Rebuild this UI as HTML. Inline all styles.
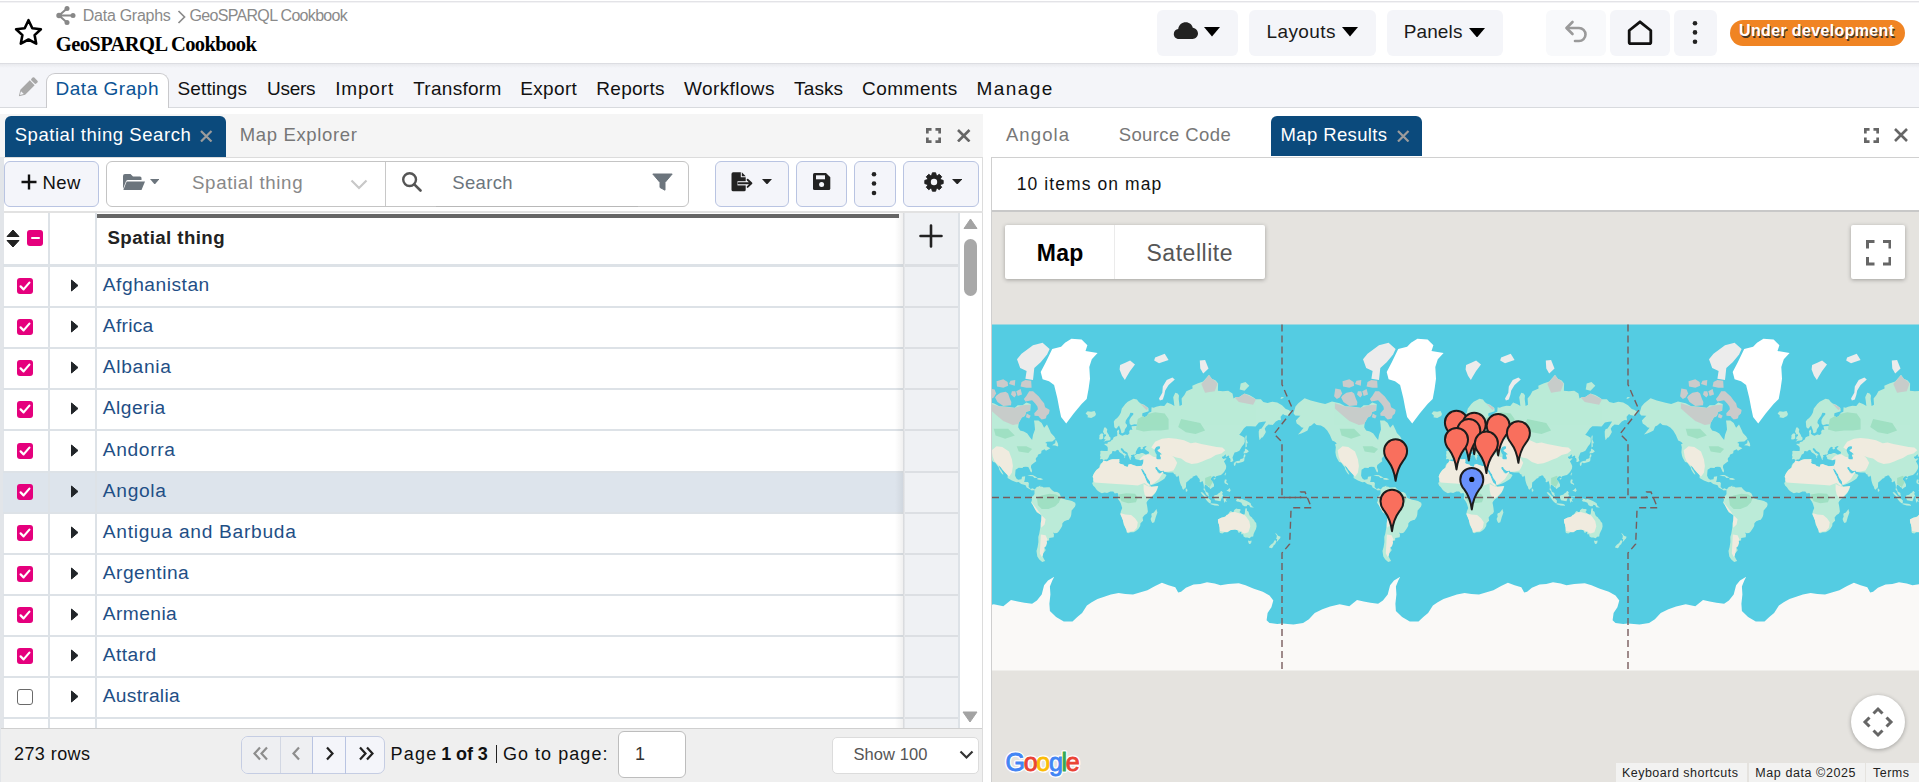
<!DOCTYPE html>
<html><head><meta charset="utf-8"><style>
html,body{margin:0;padding:0;width:1919px;height:782px;overflow:hidden;background:#fff}
.b{position:absolute;display:block}
.t{position:absolute;white-space:pre;line-height:normal}
</style></head><body>
<div class='b' style='left:0px;top:1px;width:1919px;height:1px;background:#e3e3e7'></div>
<div class='b' style='left:0px;top:2px;width:1919px;height:1px;background:#f3f3f5'></div>
<svg class='b' style='left:13px;top:17px;' width='31' height='31' viewBox='0 0 31 31'><path d='M15.5 3.2 L19.3 11.2 L27.9 12.2 L21.6 18.1 L23.2 26.7 L15.5 22.5 L7.8 26.7 L9.4 18.1 L3.1 12.2 L11.7 11.2 Z' fill='none' stroke='#000' stroke-width='2.6' stroke-linejoin='round'/></svg>
<svg class='b' style='left:55px;top:5px;' width='22' height='21' viewBox='0 0 22 21'><g stroke='#888' stroke-width='2' fill='none'><path d='M4 10.5 L12 3.5 M4 10.5 L18 10.5 M4 10.5 L12 17.5'/></g><g fill='#888'><circle cx='4' cy='10.5' r='2.7'/><circle cx='12' cy='3.5' r='2.5'/><circle cx='18' cy='10.5' r='2.5'/><circle cx='12' cy='17.5' r='2.5'/></g></svg>
<svg class='b' style='left:175px;top:9px;' width='13' height='16' viewBox='0 0 13 16'><path d='M3.5 2 L9.5 8 L3.5 14' fill='none' stroke='#8a8a8a' stroke-width='1.7'/></svg>
<div class='b' style='left:1157px;top:10px;width:81px;height:46px;background:#f4f5f9;border-radius:6px'></div>
<div class='b' style='left:1249px;top:10px;width:127px;height:46px;background:#f4f5f9;border-radius:6px'></div>
<div class='b' style='left:1387px;top:10px;width:116px;height:46px;background:#f4f5f9;border-radius:6px'></div>
<div class='b' style='left:1546px;top:10px;width:60px;height:46px;background:#f8f9fb;border-radius:6px'></div>
<div class='b' style='left:1610px;top:10px;width:60px;height:46px;background:#f4f5f9;border-radius:6px'></div>
<div class='b' style='left:1674px;top:10px;width:43px;height:46px;background:#f4f5f9;border-radius:6px'></div>
<svg class='b' style='left:1173px;top:21px;' width='26' height='19' viewBox='0 0 26 19'><path d='M6 18 C2.5 18 0.8 15.5 0.8 13 C0.8 10.3 2.8 8.3 5.2 8.1 C5.8 4 9 1.3 12.8 1.3 C16.2 1.3 19 3.6 19.8 6.8 C22.8 7.2 25 9.6 25 12.6 C25 15.6 22.6 18 19.6 18 Z' fill='#222'/></svg>
<svg class='b' style='left:1204px;top:27.4px;' width='16' height='9.5' viewBox='0 0 16 9.5'><path d='M0 0 L16 0 L8.0 9.5 Z' fill='#000'/></svg>
<svg class='b' style='left:1342px;top:27.4px;' width='16' height='9.5' viewBox='0 0 16 9.5'><path d='M0 0 L16 0 L8.0 9.5 Z' fill='#000'/></svg>
<svg class='b' style='left:1469px;top:27.6px;' width='16' height='9.5' viewBox='0 0 16 9.5'><path d='M0 0 L16 0 L8.0 9.5 Z' fill='#000'/></svg>
<svg class='b' style='left:1563px;top:19px;' width='25' height='26' viewBox='0 0 25 26'><path d='M4 9 L16 9 A6.5 6.5 0 0 1 16 22 L12 22' fill='none' stroke='#9a9a9a' stroke-width='2.6' stroke-linecap='round'/><path d='M9.5 3 L3.5 9 L9.5 15' fill='none' stroke='#9a9a9a' stroke-width='2.6' stroke-linecap='round' stroke-linejoin='round'/></svg>
<svg class='b' style='left:1626px;top:19px;' width='28' height='27' viewBox='0 0 28 27'><path d='M3.2 11.5 L14 2.8 L24.8 11.5 L24.8 23.2 Q24.8 24.6 23.4 24.6 L4.6 24.6 Q3.2 24.6 3.2 23.2 Z' fill='none' stroke='#111' stroke-width='2.8' stroke-linejoin='round'/></svg>
<svg class='b' style='left:1690px;top:18px;' width='10' height='30' viewBox='0 0 10 30'><g fill='#222'><circle cx='5' cy='5.2' r='2.3'/><circle cx='5' cy='14.4' r='2.3'/><circle cx='5' cy='23.8' r='2.3'/></g></svg>
<div class='b' style='left:1730px;top:20px;width:175px;height:26px;background:#f08423;border-radius:13px'></div>
<div class='b' style='left:0px;top:63px;width:1919px;height:45px;background:#f4f5f9'></div>
<div class='b' style='left:0px;top:63px;width:1919px;height:1px;background:#dcdde2'></div>
<div class='b' style='left:0px;top:64px;width:1919px;height:4px;background:linear-gradient(#e9eaee,#f4f5f9)'></div>
<div class='b' style='left:0px;top:107px;width:1919px;height:1px;background:#d8dade'></div>
<div class='b' style='left:46px;top:73px;width:123px;height:35px;background:#fff;border:1px solid #c9c9cc;border-bottom:none;border-radius:9px 9px 0 0;box-sizing:border-box'></div>
<svg class='b' style='left:16px;top:77px;' width='22' height='22' viewBox='0 0 22 22'><g transform='rotate(45 11 11)'><rect x='7.6' y='-1.5' width='6.8' height='4' rx='1.2' fill='#a8a8a8'/><path d='M7.6 3.6 L14.4 3.6 L14.4 17 L11 22.5 L7.6 17 Z' fill='#a8a8a8'/><path d='M9 17.5 L13 17.5 L11 21' fill='#f4f5f9'/></g></svg>
<div class='b' style='left:0px;top:114px;width:983px;height:43px;background:#f5f5f5'></div>
<div class='b' style='left:5px;top:116px;width:221px;height:41px;background:#0b4a7c;border-radius:6px 6px 0 0'></div>
<svg class='b' style='left:200px;top:129.5px;' width='12.5' height='12.5' viewBox='0 0 12.5 12.5'><path d='M1 1 L11.5 11.5 M11.5 1 L1 11.5' stroke='#9c9c9c' stroke-width='2.2' fill='none'/></svg>
<svg class='b' style='left:926.35px;top:127.85px;' width='15.0' height='15.0' viewBox='0 0 15.0 15.0'><path d='M0 4.2 L0 0 L4.2 0 M8.100000000000001 0 L12.3 0 L12.3 4.2 M12.3 8.100000000000001 L12.3 12.3 L8.100000000000001 12.3 M4.2 12.3 L0 12.3 L0 8.100000000000001' transform='translate(1.35 1.35)' stroke='#666' stroke-width='2.7' fill='none'/></svg>
<svg class='b' style='left:957px;top:128.5px;' width='13.5' height='13.5' viewBox='0 0 13.5 13.5'><path d='M1 1 L12.5 12.5 M12.5 1 L1 12.5' stroke='#666' stroke-width='2.6' fill='none'/></svg>
<div class='b' style='left:0px;top:157px;width:983px;height:625px;background:#fff'></div>
<div class='b' style='left:0px;top:156.5px;width:983px;height:1.0px;background:#dcdcdc'></div>
<div class='b' style='left:0px;top:157px;width:1px;height:625px;background:#e0e0e0'></div>
<div class='b' style='left:982px;top:157px;width:1px;height:625px;background:#dcdcdc'></div>
<div class='b' style='left:4px;top:161px;width:95px;height:46px;background:#f4f5fa;border:1px solid #b9c4e2;border-radius:6px;box-sizing:border-box'></div>
<svg class='b' style='left:20px;top:173px;' width='18' height='18' viewBox='0 0 18 18'><path d='M9 1.5 V16.5 M1.5 9 H16.5' stroke='#111' stroke-width='2.4'/></svg>
<div class='b' style='left:106px;top:161px;width:583px;height:46px;background:#fff;border:1px solid #c4c4c4;border-radius:6px;box-sizing:border-box'></div>
<div class='b' style='left:385px;top:162px;width:1px;height:44px;background:#c8c8c8'></div>
<div class='b' style='left:436px;top:205.5px;width:202px;height:1.5px;background:#b8b8b8'></div>
<svg class='b' style='left:122px;top:172px;' width='24' height='20' viewBox='0 0 24 20'><path d='M1 4 Q1 2 3 2 L8.5 2 L11 4.5 L18 4.5 Q19.5 4.5 19.5 6 L19.5 8 L6 8 Q4.6 8 4 9.3 L1 17 Z' fill='#6c757d'/><path d='M4.6 9.5 L23 9.5 L19.5 18 L1.4 18 Z' fill='#6c757d'/></svg>
<svg class='b' style='left:149.5px;top:178.5px;' width='9.5' height='5.5' viewBox='0 0 9.5 5.5'><path d='M0 0 L9.5 0 L4.75 5.5 Z' fill='#6c757d'/></svg>
<svg class='b' style='left:350px;top:179px;' width='18' height='11' viewBox='0 0 18 11'><path d='M1.5 1.5 L9 9 L16.5 1.5' fill='none' stroke='#c8c8c8' stroke-width='2.2'/></svg>
<svg class='b' style='left:401px;top:171px;' width='22' height='21' viewBox='0 0 22 21'><circle cx='8.6' cy='8.6' r='6.4' fill='none' stroke='#555' stroke-width='2.4'/><path d='M13.3 13.3 L19.5 19.5' stroke='#555' stroke-width='2.6' stroke-linecap='round'/></svg>
<svg class='b' style='left:652px;top:173px;' width='21' height='18' viewBox='0 0 21 18'><path d='M0.8 1 L20.2 1 L13 9.5 L13 17.2 L8 14.5 L8 9.5 Z' fill='#6c757d' stroke='#6c757d' stroke-width='1' stroke-linejoin='round'/></svg>
<div class='b' style='left:715px;top:161px;width:74px;height:46px;background:#f4f5fa;border:1px solid #b9c4e2;border-radius:6px;box-sizing:border-box'></div>
<div class='b' style='left:796px;top:161px;width:51px;height:46px;background:#f4f5fa;border:1px solid #b9c4e2;border-radius:6px;box-sizing:border-box'></div>
<div class='b' style='left:854px;top:161px;width:42px;height:46px;background:#f4f5fa;border:1px solid #b9c4e2;border-radius:6px;box-sizing:border-box'></div>
<div class='b' style='left:903px;top:161px;width:76px;height:46px;background:#f4f5fa;border:1px solid #b9c4e2;border-radius:6px;box-sizing:border-box'></div>
<svg class='b' style='left:730px;top:171px;' width='25' height='22' viewBox='0 0 25 22'><path d='M3.2 1.3 L10.8 1.3 L10.8 6.2 L15.7 6.2 L15.7 18.8 Q15.7 20.3 14.2 20.3 L3.2 20.3 Q1.5 20.3 1.5 18.8 L1.5 3 Q1.5 1.3 3.2 1.3 Z' fill='#222'/><path d='M11.8 1.3 L15.7 5.2 L11.8 5.2 Z' fill='#222'/><path d='M7.5 12.3 L19.5 12.3' stroke='#f4f5fa' stroke-width='4.2'/><path d='M8.5 12.3 L21 12.3 M17.6 8.7 L21.4 12.3 L17.6 15.9' stroke='#222' stroke-width='1.9' fill='none' stroke-linecap='round' stroke-linejoin='round'/></svg>
<svg class='b' style='left:762px;top:178.7px;' width='10' height='5.5' viewBox='0 0 10 5.5'><path d='M0 0 L10 0 L5.0 5.5 Z' fill='#222'/></svg>
<svg class='b' style='left:812px;top:172px;' width='20' height='19' viewBox='0 0 20 19'><path d='M1 2.5 Q1 1 2.5 1 L14 1 L18.3 5.3 L18.3 16.5 Q18.3 18 16.8 18 L2.5 18 Q1 18 1 16.5 Z' fill='#222'/><rect x='4' y='3.3' width='9' height='4' fill='#f4f5fa'/><circle cx='9.6' cy='12.6' r='2.5' fill='#f4f5fa'/></svg>
<svg class='b' style='left:869px;top:170px;' width='10' height='27' viewBox='0 0 10 27'><g fill='#222'><circle cx='5' cy='4.2' r='2.3'/><circle cx='5' cy='13.5' r='2.3'/><circle cx='5' cy='23' r='2.3'/></g></svg>
<svg class='b' style='left:922px;top:170px;' width='24' height='24' viewBox='0 0 24 24'><path d='M18.88 9.87 L21.15 10.34 L21.15 13.66 L18.88 14.13 L18.37 15.36 L19.65 17.29 L17.29 19.65 L15.36 18.37 L14.13 18.88 L13.66 21.15 L10.34 21.15 L9.87 18.88 L8.64 18.37 L6.71 19.65 L4.35 17.29 L5.63 15.36 L5.12 14.13 L2.85 13.66 L2.85 10.34 L5.12 9.87 L5.63 8.64 L4.35 6.71 L6.71 4.35 L8.64 5.63 L9.87 5.12 L10.34 2.85 L13.66 2.85 L14.13 5.12 L15.36 5.63 L17.29 4.35 L19.65 6.71 L18.37 8.64Z' fill='#222' stroke='#222' stroke-width='1' stroke-linejoin='round'/><circle cx='12' cy='12' r='3.2' fill='#f4f5fa'/></svg>
<svg class='b' style='left:951.8px;top:178.7px;' width='10.5' height='5.5' viewBox='0 0 10.5 5.5'><path d='M0 0 L10.5 0 L5.25 5.5 Z' fill='#222'/></svg>
<div class='b' style='left:0px;top:211px;width:983px;height:2px;background:#e2e2e2'></div>
<div class='b' style='left:1px;top:213px;width:981px;height:515px;background:#fff'></div>
<div class='b' style='left:0px;top:157px;width:3.5px;height:625px;background:#e2e5e9'></div>
<div class='b' style='left:3px;top:306.0px;width:954px;height:2.0px;background:#dde2e7'></div>
<div class='b' style='left:3px;top:347.1px;width:954px;height:2.0px;background:#dde2e7'></div>
<div class='b' style='left:3px;top:388.3px;width:954px;height:2.0px;background:#dde2e7'></div>
<div class='b' style='left:3px;top:429.4px;width:954px;height:2.0px;background:#dde2e7'></div>
<div class='b' style='left:3px;top:470.5px;width:954px;height:2.0px;background:#dde2e7'></div>
<div class='b' style='left:3px;top:511.6px;width:954px;height:2.0px;background:#dde2e7'></div>
<div class='b' style='left:3px;top:552.8px;width:954px;height:2.0px;background:#dde2e7'></div>
<div class='b' style='left:3px;top:593.9px;width:954px;height:2.0px;background:#dde2e7'></div>
<div class='b' style='left:3px;top:635.0px;width:954px;height:2.0px;background:#dde2e7'></div>
<div class='b' style='left:3px;top:676.2px;width:954px;height:2.0px;background:#dde2e7'></div>
<div class='b' style='left:3px;top:717.3px;width:954px;height:2.0px;background:#dde2e7'></div>
<div class='b' style='left:3px;top:264px;width:954px;height:3px;background:#dde2e7'></div>
<div class='b' style='left:3px;top:472.5px;width:900px;height:39.10000000000002px;background:#dde4ec'></div>
<div class='b' style='left:47.8px;top:213px;width:1.8000000000000043px;height:515px;background:#dde2e7'></div>
<div class='b' style='left:95.3px;top:213px;width:1.7000000000000028px;height:515px;background:#dde2e7'></div>
<div class='b' style='left:97px;top:214px;width:802px;height:4px;background:#666'></div>
<div class='b' style='left:903px;top:213px;width:57px;height:515px;background:#eff1f4'></div>
<div class='b' style='left:903px;top:213px;width:2px;height:515px;background:linear-gradient(90deg,#d4d6d9,#e9ebee)'></div>
<div class='b' style='left:895px;top:213px;width:8px;height:515px;background:linear-gradient(90deg,rgba(0,0,0,0),rgba(0,0,0,0.06))'></div>
<div class='b' style='left:957.5px;top:213px;width:2.5px;height:515px;background:#dde2e7'></div>
<div class='b' style='left:905px;top:306.0px;width:52.5px;height:2.0px;background:#dcdfe3'></div>
<div class='b' style='left:905px;top:347.1px;width:52.5px;height:2.0px;background:#dcdfe3'></div>
<div class='b' style='left:905px;top:388.3px;width:52.5px;height:2.0px;background:#dcdfe3'></div>
<div class='b' style='left:905px;top:429.4px;width:52.5px;height:2.0px;background:#dcdfe3'></div>
<div class='b' style='left:905px;top:470.5px;width:52.5px;height:2.0px;background:#dcdfe3'></div>
<div class='b' style='left:905px;top:511.6px;width:52.5px;height:2.0px;background:#dcdfe3'></div>
<div class='b' style='left:905px;top:552.8px;width:52.5px;height:2.0px;background:#dcdfe3'></div>
<div class='b' style='left:905px;top:593.9px;width:52.5px;height:2.0px;background:#dcdfe3'></div>
<div class='b' style='left:905px;top:635.0px;width:52.5px;height:2.0px;background:#dcdfe3'></div>
<div class='b' style='left:905px;top:676.2px;width:52.5px;height:2.0px;background:#dcdfe3'></div>
<div class='b' style='left:905px;top:717.3px;width:52.5px;height:2.0px;background:#dcdfe3'></div>
<div class='b' style='left:905px;top:264px;width:52.5px;height:3px;background:#dcdfe3'></div>
<svg class='b' style='left:919px;top:224px;' width='24' height='24' viewBox='0 0 24 24'><path d='M12 1.5 V22.5 M1.5 12 H22.5' stroke='#222' stroke-width='2.6' stroke-linecap='round'/></svg>
<svg class='b' style='left:963px;top:218px;' width='15' height='11' viewBox='0 0 15 11'><path d='M7.5 1 L14 10.5 L1 10.5 Z' fill='#a3a3a3' stroke='#a3a3a3' stroke-linejoin='round' stroke-width='1'/></svg>
<div class='b' style='left:964px;top:239px;width:13px;height:57px;background:#a8a8a8;border-radius:7px'></div>
<svg class='b' style='left:962px;top:711px;' width='16' height='12' viewBox='0 0 16 12'><path d='M1 1 L15 1 L8 11 Z' fill='#a3a3a3' stroke='#a3a3a3' stroke-linejoin='round' stroke-width='1'/></svg>
<svg class='b' style='left:6px;top:229px;' width='14' height='19' viewBox='0 0 14 19'><path d='M1 7.5 L7 1 L13 7.5 Z M1 11.5 L13 11.5 L7 18 Z' fill='#222' stroke='#222' stroke-width='1' stroke-linejoin='round'/></svg>
<div class='b' style='left:27px;top:230px;width:16px;height:16px;background:#e5007d;border-radius:3px'></div>
<div class='b' style='left:30.5px;top:236.8px;width:9.0px;height:2.5px;background:#fff;border-radius:1px'></div>
<div class='b' style='left:17px;top:278.0px;width:16.200000000000003px;height:16.19999999999999px;background:#e5007d;border-radius:3px'></div>
<svg class='b' style='left:17px;top:278.0px;' width='16' height='16' viewBox='0 0 16 16'><path d='M3.6 8.4 L6.6 11.4 L12.4 4.6' fill='none' stroke='#fff' stroke-width='2.2' stroke-linecap='round' stroke-linejoin='round'/></svg>
<svg class='b' style='left:70px;top:279.0px;' width='10' height='13' viewBox='0 0 10 13'><path d='M1.5 1 L8 6.5 L1.5 12 Z' fill='#212529' stroke='#212529' stroke-width='1' stroke-linejoin='round'/></svg>
<div class='b' style='left:17px;top:319.1px;width:16.200000000000003px;height:16.19999999999999px;background:#e5007d;border-radius:3px'></div>
<svg class='b' style='left:17px;top:319.1px;' width='16' height='16' viewBox='0 0 16 16'><path d='M3.6 8.4 L6.6 11.4 L12.4 4.6' fill='none' stroke='#fff' stroke-width='2.2' stroke-linecap='round' stroke-linejoin='round'/></svg>
<svg class='b' style='left:70px;top:320.1px;' width='10' height='13' viewBox='0 0 10 13'><path d='M1.5 1 L8 6.5 L1.5 12 Z' fill='#212529' stroke='#212529' stroke-width='1' stroke-linejoin='round'/></svg>
<div class='b' style='left:17px;top:360.3px;width:16.200000000000003px;height:16.19999999999999px;background:#e5007d;border-radius:3px'></div>
<svg class='b' style='left:17px;top:360.3px;' width='16' height='16' viewBox='0 0 16 16'><path d='M3.6 8.4 L6.6 11.4 L12.4 4.6' fill='none' stroke='#fff' stroke-width='2.2' stroke-linecap='round' stroke-linejoin='round'/></svg>
<svg class='b' style='left:70px;top:361.3px;' width='10' height='13' viewBox='0 0 10 13'><path d='M1.5 1 L8 6.5 L1.5 12 Z' fill='#212529' stroke='#212529' stroke-width='1' stroke-linejoin='round'/></svg>
<div class='b' style='left:17px;top:401.4px;width:16.200000000000003px;height:16.19999999999999px;background:#e5007d;border-radius:3px'></div>
<svg class='b' style='left:17px;top:401.4px;' width='16' height='16' viewBox='0 0 16 16'><path d='M3.6 8.4 L6.6 11.4 L12.4 4.6' fill='none' stroke='#fff' stroke-width='2.2' stroke-linecap='round' stroke-linejoin='round'/></svg>
<svg class='b' style='left:70px;top:402.4px;' width='10' height='13' viewBox='0 0 10 13'><path d='M1.5 1 L8 6.5 L1.5 12 Z' fill='#212529' stroke='#212529' stroke-width='1' stroke-linejoin='round'/></svg>
<div class='b' style='left:17px;top:442.5px;width:16.200000000000003px;height:16.19999999999999px;background:#e5007d;border-radius:3px'></div>
<svg class='b' style='left:17px;top:442.5px;' width='16' height='16' viewBox='0 0 16 16'><path d='M3.6 8.4 L6.6 11.4 L12.4 4.6' fill='none' stroke='#fff' stroke-width='2.2' stroke-linecap='round' stroke-linejoin='round'/></svg>
<svg class='b' style='left:70px;top:443.5px;' width='10' height='13' viewBox='0 0 10 13'><path d='M1.5 1 L8 6.5 L1.5 12 Z' fill='#212529' stroke='#212529' stroke-width='1' stroke-linejoin='round'/></svg>
<div class='b' style='left:17px;top:483.6px;width:16.200000000000003px;height:16.19999999999999px;background:#e5007d;border-radius:3px'></div>
<svg class='b' style='left:17px;top:483.6px;' width='16' height='16' viewBox='0 0 16 16'><path d='M3.6 8.4 L6.6 11.4 L12.4 4.6' fill='none' stroke='#fff' stroke-width='2.2' stroke-linecap='round' stroke-linejoin='round'/></svg>
<svg class='b' style='left:70px;top:484.6px;' width='10' height='13' viewBox='0 0 10 13'><path d='M1.5 1 L8 6.5 L1.5 12 Z' fill='#212529' stroke='#212529' stroke-width='1' stroke-linejoin='round'/></svg>
<div class='b' style='left:17px;top:524.8px;width:16.200000000000003px;height:16.200000000000045px;background:#e5007d;border-radius:3px'></div>
<svg class='b' style='left:17px;top:524.8px;' width='16' height='16' viewBox='0 0 16 16'><path d='M3.6 8.4 L6.6 11.4 L12.4 4.6' fill='none' stroke='#fff' stroke-width='2.2' stroke-linecap='round' stroke-linejoin='round'/></svg>
<svg class='b' style='left:70px;top:525.8px;' width='10' height='13' viewBox='0 0 10 13'><path d='M1.5 1 L8 6.5 L1.5 12 Z' fill='#212529' stroke='#212529' stroke-width='1' stroke-linejoin='round'/></svg>
<div class='b' style='left:17px;top:565.9px;width:16.200000000000003px;height:16.200000000000045px;background:#e5007d;border-radius:3px'></div>
<svg class='b' style='left:17px;top:565.9px;' width='16' height='16' viewBox='0 0 16 16'><path d='M3.6 8.4 L6.6 11.4 L12.4 4.6' fill='none' stroke='#fff' stroke-width='2.2' stroke-linecap='round' stroke-linejoin='round'/></svg>
<svg class='b' style='left:70px;top:566.9px;' width='10' height='13' viewBox='0 0 10 13'><path d='M1.5 1 L8 6.5 L1.5 12 Z' fill='#212529' stroke='#212529' stroke-width='1' stroke-linejoin='round'/></svg>
<div class='b' style='left:17px;top:607.0px;width:16.200000000000003px;height:16.200000000000045px;background:#e5007d;border-radius:3px'></div>
<svg class='b' style='left:17px;top:607.0px;' width='16' height='16' viewBox='0 0 16 16'><path d='M3.6 8.4 L6.6 11.4 L12.4 4.6' fill='none' stroke='#fff' stroke-width='2.2' stroke-linecap='round' stroke-linejoin='round'/></svg>
<svg class='b' style='left:70px;top:608.0px;' width='10' height='13' viewBox='0 0 10 13'><path d='M1.5 1 L8 6.5 L1.5 12 Z' fill='#212529' stroke='#212529' stroke-width='1' stroke-linejoin='round'/></svg>
<div class='b' style='left:17px;top:648.2px;width:16.200000000000003px;height:16.200000000000045px;background:#e5007d;border-radius:3px'></div>
<svg class='b' style='left:17px;top:648.2px;' width='16' height='16' viewBox='0 0 16 16'><path d='M3.6 8.4 L6.6 11.4 L12.4 4.6' fill='none' stroke='#fff' stroke-width='2.2' stroke-linecap='round' stroke-linejoin='round'/></svg>
<svg class='b' style='left:70px;top:649.2px;' width='10' height='13' viewBox='0 0 10 13'><path d='M1.5 1 L8 6.5 L1.5 12 Z' fill='#212529' stroke='#212529' stroke-width='1' stroke-linejoin='round'/></svg>
<div class='b' style='left:17.2px;top:688.8px;width:16.000000000000004px;height:16.0px;border:1.5px solid #6a6a6a;border-radius:3px;box-sizing:border-box;background:#fff'></div>
<svg class='b' style='left:70px;top:690.3px;' width='10' height='13' viewBox='0 0 10 13'><path d='M1.5 1 L8 6.5 L1.5 12 Z' fill='#212529' stroke='#212529' stroke-width='1' stroke-linejoin='round'/></svg>
<div class='b' style='left:1px;top:728px;width:981px;height:54px;background:#efefef'></div>
<div class='b' style='left:1px;top:728px;width:981px;height:1px;background:#cfcfcf'></div>
<div class='b' style='left:241px;top:736px;width:144px;height:38px;background:#f4f5fa;border:1px solid #c5cde3;border-radius:7px;box-sizing:border-box'></div>
<div class='b' style='left:242px;top:737px;width:70px;height:36px;background:#eeeff2;border-radius:6px 0 0 6px'></div>
<div class='b' style='left:280px;top:737px;width:1px;height:36px;background:#d2d7e3'></div>
<div class='b' style='left:312px;top:736.5px;width:1px;height:37.0px;background:#b9c4e2'></div>
<div class='b' style='left:345px;top:736.5px;width:1px;height:37.0px;background:#b9c4e2'></div>
<svg class='b' style='left:252px;top:746px;' width='18' height='15' viewBox='0 0 18 15'><path d='M8 1.5 L2.5 7.5 L8 13.5 M15 1.5 L9.5 7.5 L15 13.5' fill='none' stroke='#8d8d8d' stroke-width='2.2'/></svg>
<svg class='b' style='left:290px;top:746px;' width='12' height='15' viewBox='0 0 12 15'><path d='M9 1.5 L3.5 7.5 L9 13.5' fill='none' stroke='#8d8d8d' stroke-width='2.2'/></svg>
<svg class='b' style='left:324px;top:746px;' width='12' height='15' viewBox='0 0 12 15'><path d='M3 1.5 L8.5 7.5 L3 13.5' fill='none' stroke='#222' stroke-width='2.2'/></svg>
<svg class='b' style='left:357px;top:746px;' width='18' height='15' viewBox='0 0 18 15'><path d='M3 1.5 L8.5 7.5 L3 13.5 M10 1.5 L15.5 7.5 L10 13.5' fill='none' stroke='#222' stroke-width='2.2'/></svg>
<div class='b' style='left:496px;top:745px;width:1.3999999999999773px;height:18px;background:#222'></div>
<div class='b' style='left:618px;top:731px;width:68px;height:47px;background:#fff;border:1px solid #bdbdbd;border-radius:6px;box-sizing:border-box'></div>
<div class='b' style='left:832px;top:736.5px;width:146.5px;height:37.0px;background:#fff;border:1px solid #dcdcdc;border-radius:5px;box-sizing:border-box'></div>
<svg class='b' style='left:958.5px;top:750px;' width='15' height='10' viewBox='0 0 15 10'><path d='M1.5 1.5 L7.5 7.5 L13.5 1.5' fill='none' stroke='#333' stroke-width='2.2'/></svg>
<div class='b' style='left:983px;top:114px;width:936px;height:43px;background:#fff'></div>
<div class='b' style='left:1271px;top:116px;width:151px;height:40px;background:#0b4a7c;border-radius:6px 6px 0 0'></div>
<svg class='b' style='left:1397px;top:129.5px;' width='12.5' height='12.5' viewBox='0 0 12.5 12.5'><path d='M1 1 L11.5 11.5 M11.5 1 L1 11.5' stroke='#9c9c9c' stroke-width='2.2' fill='none'/></svg>
<svg class='b' style='left:1863.8500000000001px;top:127.85px;' width='15.0' height='15.0' viewBox='0 0 15.0 15.0'><path d='M0 4.2 L0 0 L4.2 0 M8.100000000000001 0 L12.3 0 L12.3 4.2 M12.3 8.100000000000001 L12.3 12.3 L8.100000000000001 12.3 M4.2 12.3 L0 12.3 L0 8.100000000000001' transform='translate(1.35 1.35)' stroke='#666' stroke-width='2.7' fill='none'/></svg>
<svg class='b' style='left:1894px;top:128px;' width='14' height='14' viewBox='0 0 14 14'><path d='M1 1 L13 13 M13 1 L1 13' stroke='#666' stroke-width='2.6' fill='none'/></svg>
<div class='b' style='left:991px;top:157px;width:928px;height:625px;background:#fff'></div>
<div class='b' style='left:991px;top:156.5px;width:928px;height:1.5px;background:#d0d0d0'></div>
<div class='b' style='left:991px;top:157px;width:1px;height:625px;background:#cfcfcf'></div>
<div class='b' style='left:992px;top:210.5px;width:927px;height:571.5px;background:#e5e3df'></div>
<div class='b' style='left:992px;top:210px;width:927px;height:1.5px;background:#c8c8c8'></div>
<svg class='b' style='left:992px;top:211px' width='927' height='571' viewBox='992 211 927 571'><rect x='992' y='324.5' width='927' height='344.5' fill='#54cce2'/><g fill='#bbebd8'><path d='M601.5 413.2 L603.5 406.5 L606.3 403.3 L612.6 398.2 L618.8 400.5 L627.5 402.8 L633.2 403.9 L640.0 401.4 L647.7 403.3 L653.4 406.3 L659.2 406.5 L668.8 407.8 L671.7 405.2 L676.5 405.2 L680.3 402.5 L684.7 404.1 L684.2 410.8 L680.3 411.8 L678.9 416.1 L675.8 417.6 L672.7 423.0 L672.2 427.2 L674.1 430.5 L677.9 431.4 L681.3 433.4 L683.9 437.2 L686.1 439.9 L687.1 434.8 L689.0 429.6 L688.5 424.0 L688.0 420.4 L692.4 420.4 L695.7 423.0 L698.1 427.8 L701.0 424.4 L703.4 429.6 L704.9 433.1 L708.2 436.4 L709.5 438.8 L706.3 441.4 L701.0 441.8 L699.1 443.0 L701.0 443.6 L700.7 446.2 L704.4 448.3 L700.0 450.8 L698.6 449.2 L695.5 450.8 L695.2 453.3 L691.9 454.7 L691.6 456.4 L690.0 458.0 L689.7 459.3 L690.3 461.3 L688.5 462.4 L685.3 465.0 L684.9 467.3 L686.1 470.7 L685.6 472.5 L684.4 471.6 L683.4 468.9 L682.3 467.1 L679.9 466.8 L677.2 467.0 L676.5 468.1 L672.7 467.7 L669.6 469.7 L669.3 472.7 L669.1 475.8 L670.4 478.6 L672.2 479.7 L675.5 479.2 L676.0 476.8 L679.2 476.3 L678.8 479.4 L678.1 481.9 L681.8 482.0 L682.9 483.1 L682.6 486.9 L684.7 488.9 L686.6 488.3 L688.3 489.2 L688.5 490.3 L686.8 490.3 L685.7 490.5 L684.4 489.6 L680.6 487.4 L679.8 485.6 L678.9 484.9 L675.2 484.0 L672.7 481.9 L670.3 482.2 L665.9 480.6 L661.6 477.9 L661.6 475.3 L658.9 472.4 L656.5 469.7 L654.6 466.9 L652.8 465.3 L653.9 468.4 L655.4 470.5 L657.3 474.1 L657.1 474.8 L655.2 472.9 L653.2 469.4 L652.7 467.3 L651.0 465.2 L650.4 464.2 L649.1 462.6 L647.1 462.0 L645.8 459.8 L644.8 458.0 L644.0 455.7 L643.4 452.3 L643.8 447.3 L643.1 444.3 L644.8 443.6 L642.9 441.8 L640.2 440.6 L637.9 435.1 L635.2 430.5 L632.3 427.6 L628.9 425.6 L624.6 425.0 L622.2 423.0 L619.3 425.6 L617.1 426.5 L615.5 430.5 L612.6 431.9 L609.2 433.4 L605.9 434.4 L607.6 432.8 L611.6 427.8 L609.7 427.4 L607.3 425.2 L604.7 423.4 L603.9 420.4 L605.7 418.5 L608.3 415.7 L603.2 415.4 L601.5 413.2Z'/><path d='M688.3 489.2 L690.0 488.3 L690.6 487.1 L692.8 486.6 L694.3 485.5 L694.5 486.9 L695.9 486.4 L697.6 487.4 L701.5 487.3 L703.6 487.2 L704.9 489.1 L706.8 490.8 L708.2 491.7 L711.1 491.9 L713.3 493.2 L714.5 495.8 L714.9 497.5 L716.6 498.5 L720.2 499.7 L723.1 500.3 L726.0 501.1 L729.2 502.7 L729.6 504.7 L728.9 506.7 L727.0 508.9 L725.6 510.4 L725.3 514.6 L724.6 517.1 L722.8 519.7 L720.7 520.2 L718.3 521.3 L716.4 523.2 L716.2 525.9 L714.9 528.3 L712.5 531.7 L711.1 533.1 L708.7 533.2 L707.1 532.5 L708.0 534.6 L707.7 537.3 L703.2 538.1 L703.1 540.4 L700.5 540.8 L701.0 542.7 L700.0 546.0 L698.1 547.8 L699.8 549.9 L697.2 553.5 L696.7 556.2 L697.4 558.1 L699.1 561.1 L696.2 561.9 L693.3 559.4 L691.3 556.5 L690.5 550.9 L691.6 547.1 L692.4 542.1 L692.3 537.0 L693.3 533.5 L694.3 527.7 L694.5 523.4 L695.3 520.2 L695.5 515.4 L694.3 514.4 L690.9 512.6 L689.7 510.6 L688.3 508.1 L686.6 504.7 L685.0 502.8 L685.6 500.9 L686.1 499.6 L685.3 498.5 L686.1 496.5 L687.1 495.9 L688.5 494.1 L688.5 491.2 L688.3 489.2Z'/><path d='M746.6 476.8 L747.6 473.9 L749.1 471.6 L750.5 469.7 L753.4 467.8 L753.7 465.6 L754.8 463.5 L756.5 462.4 L757.3 460.6 L760.9 461.4 L764.0 459.8 L766.8 459.3 L771.2 459.3 L772.8 458.9 L773.7 459.4 L773.1 461.0 L773.6 462.0 L772.7 462.8 L774.1 463.8 L777.6 464.7 L778.2 465.8 L781.3 466.9 L782.3 466.1 L782.2 464.8 L784.6 464.1 L787.0 465.1 L790.9 466.2 L793.8 465.9 L795.9 465.8 L796.2 468.9 L795.0 469.2 L794.1 467.4 L794.3 467.9 L797.1 473.7 L798.6 476.3 L800.0 479.9 L801.2 482.4 L802.9 484.1 L804.5 485.4 L805.3 486.4 L812.2 486.0 L812.0 487.4 L811.1 489.8 L809.1 493.2 L807.2 495.4 L804.8 498.0 L802.9 499.2 L801.4 500.9 L800.5 502.8 L801.0 505.2 L801.4 507.6 L801.9 511.6 L801.0 513.6 L798.6 515.1 L796.6 517.6 L797.1 520.7 L794.5 523.3 L794.2 526.1 L792.3 528.9 L789.9 530.9 L787.6 532.3 L784.6 532.3 L782.2 533.2 L780.8 532.4 L780.5 530.0 L779.6 528.3 L777.7 524.5 L776.9 520.2 L775.8 517.6 L774.3 514.4 L774.8 511.6 L776.2 508.1 L775.5 505.7 L774.7 503.3 L773.6 501.2 L771.6 498.5 L772.4 496.5 L772.1 493.8 L771.2 493.1 L768.8 493.4 L767.3 491.4 L764.4 491.5 L761.1 492.9 L758.7 492.5 L755.8 493.3 L753.9 492.2 L751.9 490.9 L750.2 489.3 L748.9 487.3 L747.1 485.6 L746.2 483.2 L747.1 481.7 L747.4 478.6 L746.6 476.8Z'/><path d='M753.9 459.2 L754.5 457.0 L754.0 455.2 L754.5 452.9 L754.1 451.6 L755.3 450.7 L758.2 451.0 L761.6 451.1 L761.8 448.7 L761.6 446.9 L760.1 445.5 L758.5 444.8 L758.7 443.8 L761.4 443.8 L761.8 442.3 L764.4 441.5 L765.4 440.2 L766.8 439.6 L767.5 437.4 L769.2 436.6 L771.2 436.1 L771.3 433.1 L770.9 430.9 L772.9 429.4 L773.2 431.7 L772.9 433.8 L774.5 435.1 L776.5 435.8 L779.3 434.4 L781.7 434.9 L783.4 433.6 L783.2 430.9 L784.6 429.4 L786.4 430.1 L785.7 427.8 L785.6 426.3 L789.9 425.9 L792.0 425.2 L790.9 424.4 L788.5 424.2 L785.0 425.2 L783.6 423.6 L783.4 420.0 L784.9 417.2 L787.3 414.5 L787.2 412.9 L784.4 412.7 L783.2 415.7 L781.3 418.3 L779.8 420.4 L779.4 423.0 L781.1 425.0 L780.9 426.5 L778.9 429.3 L778.4 431.9 L776.6 433.3 L775.3 433.1 L775.0 430.9 L774.3 428.7 L773.6 426.9 L773.1 425.6 L771.6 427.1 L770.7 428.5 L769.2 428.3 L768.3 426.9 L768.0 424.0 L767.8 421.4 L769.2 419.4 L771.2 417.9 L773.1 415.7 L774.8 412.7 L775.8 408.6 L777.8 406.0 L779.3 404.1 L781.7 401.7 L784.1 400.5 L787.5 398.8 L790.9 399.6 L792.8 401.9 L794.7 403.6 L798.1 404.7 L802.4 408.1 L802.7 411.3 L799.5 412.2 L796.4 413.2 L796.2 415.7 L798.6 417.2 L801.0 415.7 L802.9 412.7 L805.3 411.8 L805.6 407.3 L807.7 407.8 L810.1 406.8 L814.4 405.7 L818.3 406.0 L821.1 402.5 L825.0 403.9 L828.4 406.0 L827.7 400.5 L827.2 397.3 L829.3 392.8 L831.7 393.5 L833.0 395.4 L832.7 399.1 L833.6 406.0 L836.0 404.7 L835.6 398.5 L838.4 395.1 L840.4 391.2 L846.6 388.4 L846.3 385.8 L851.4 383.6 L857.2 381.6 L863.0 374.8 L865.8 378.7 L869.7 380.4 L872.1 383.6 L871.9 390.8 L876.9 391.2 L882.2 390.8 L886.5 393.5 L887.5 398.5 L889.9 397.0 L892.8 397.3 L896.6 394.8 L898.5 393.5 L903.3 395.1 L907.6 397.6 L910.0 399.3 L914.9 399.3 L917.3 401.9 L921.6 403.0 L926.4 401.7 L931.2 402.5 L936.0 405.2 L939.8 409.1 L942.7 410.1 L945.6 412.2 L941.8 415.7 L938.4 415.0 L937.0 413.9 L934.6 416.8 L935.0 420.2 L932.6 420.0 L929.8 421.4 L926.7 425.0 L922.5 424.4 L921.4 425.4 L920.1 426.5 L918.7 428.7 L919.9 431.9 L918.7 434.3 L916.8 437.2 L915.3 437.7 L913.6 440.2 L912.9 436.4 L912.7 431.4 L913.7 429.1 L915.3 428.7 L917.3 425.9 L920.1 421.4 L916.8 421.8 L912.9 422.4 L909.6 426.5 L904.8 426.3 L900.4 426.3 L898.0 428.2 L894.7 433.1 L893.2 434.8 L895.8 435.9 L898.7 437.7 L898.8 441.8 L898.0 444.1 L896.1 446.2 L893.4 450.8 L890.8 451.9 L888.6 452.6 L887.7 454.5 L886.5 457.6 L887.4 461.0 L885.4 462.0 L884.4 462.1 L884.6 459.8 L884.1 458.3 L882.9 457.4 L883.3 456.1 L882.5 455.5 L879.8 456.9 L879.8 455.2 L880.4 454.9 L879.3 454.5 L877.4 456.5 L876.4 456.5 L875.9 457.5 L877.1 458.7 L877.9 459.1 L879.1 458.2 L880.7 458.7 L879.3 459.8 L877.9 461.5 L878.6 462.4 L879.6 464.4 L880.2 466.1 L880.1 467.8 L879.8 469.1 L878.0 471.9 L876.9 473.2 L875.0 474.9 L872.8 475.5 L870.2 476.3 L869.2 477.4 L868.5 476.3 L867.1 476.2 L865.6 477.4 L864.6 478.9 L865.4 480.4 L866.8 481.9 L868.0 484.4 L868.0 486.4 L866.3 487.4 L865.4 488.3 L863.9 489.2 L863.9 487.8 L863.3 487.4 L862.0 486.9 L861.5 485.7 L860.1 485.2 L859.1 484.4 L858.3 487.4 L858.6 488.6 L859.4 489.8 L859.6 491.2 L860.6 491.9 L862.4 493.1 L862.4 494.6 L863.1 496.2 L862.5 496.3 L860.4 494.8 L859.4 492.7 L859.1 491.3 L857.5 489.5 L857.9 487.4 L857.7 484.9 L856.9 481.9 L856.4 481.0 L854.7 482.2 L853.6 481.9 L853.9 479.9 L853.0 478.2 L851.8 477.2 L851.4 476.0 L850.1 475.2 L848.5 475.9 L846.6 476.8 L846.4 477.9 L844.7 478.6 L842.1 480.9 L840.2 482.4 L840.1 484.1 L840.0 486.4 L839.8 487.5 L838.4 488.8 L837.5 489.8 L836.5 488.9 L835.8 486.6 L834.9 485.2 L834.1 482.9 L833.4 480.4 L833.1 478.1 L833.0 476.8 L832.7 476.4 L832.5 475.6 L831.0 477.1 L829.3 475.5 L830.5 474.9 L829.0 474.5 L827.9 473.8 L827.2 472.4 L825.0 472.5 L822.1 472.6 L819.2 472.0 L818.1 471.7 L817.7 470.5 L815.6 471.1 L814.4 470.7 L813.0 469.7 L811.8 468.6 L811.2 467.1 L810.0 466.9 L809.1 467.4 L809.5 468.9 L810.4 470.0 L811.2 471.0 L811.8 472.7 L812.6 472.5 L812.6 473.5 L814.4 473.6 L816.3 472.1 L817.1 471.4 L817.3 473.2 L818.2 473.9 L819.5 474.3 L820.5 475.3 L819.2 477.4 L818.6 478.4 L817.6 479.3 L816.1 480.2 L813.2 482.0 L810.1 483.4 L806.7 484.8 L804.8 485.2 L804.1 483.4 L803.9 481.4 L802.9 479.9 L801.4 477.9 L800.6 476.3 L800.0 474.3 L798.8 472.7 L797.6 470.5 L796.4 469.3 L796.0 465.8 L796.2 465.3 L796.8 463.9 L797.4 462.1 L797.4 460.6 L797.8 459.5 L796.2 459.4 L794.2 460.3 L792.3 459.8 L790.9 459.5 L789.3 458.9 L789.1 457.5 L788.3 456.5 L788.3 455.4 L789.4 454.9 L790.9 454.1 L793.0 454.1 L795.2 452.9 L796.8 452.9 L799.8 454.4 L802.9 453.6 L803.0 452.0 L801.4 451.1 L800.0 449.9 L798.6 448.7 L799.7 447.2 L800.7 446.1 L798.9 446.2 L796.6 447.6 L797.1 448.6 L795.7 449.6 L794.2 448.6 L795.2 447.7 L793.3 446.8 L791.8 448.0 L791.4 448.8 L790.6 450.2 L789.9 451.4 L789.7 452.8 L789.9 453.7 L788.5 454.7 L787.5 454.5 L786.1 454.9 L784.9 455.1 L785.6 456.7 L784.6 458.1 L785.1 459.8 L783.9 459.4 L783.2 457.6 L782.5 456.0 L781.7 454.2 L781.6 452.9 L780.8 452.3 L778.4 451.0 L777.4 449.5 L776.5 448.7 L776.1 447.9 L774.8 448.6 L774.9 450.0 L776.1 451.0 L777.2 452.8 L778.6 453.2 L780.3 454.6 L780.8 455.4 L780.1 455.1 L778.9 456.1 L779.4 456.9 L778.4 458.1 L778.1 457.4 L778.6 456.4 L777.9 455.4 L776.9 454.6 L776.0 453.8 L774.3 452.7 L773.2 451.8 L772.8 450.4 L771.5 449.8 L770.2 450.6 L769.2 451.5 L767.4 451.1 L766.0 451.5 L766.1 452.9 L764.9 454.0 L763.8 454.6 L763.0 456.2 L762.5 457.6 L761.8 458.6 L760.9 459.5 L758.8 459.5 L757.8 460.4 L756.9 459.4 L755.8 458.9 L754.4 459.2 L753.9 459.2Z'/><path d='M757.5 441.7 L760.1 440.8 L763.0 440.6 L764.3 440.0 L764.6 437.7 L763.3 436.6 L762.7 434.8 L761.5 432.9 L760.9 431.7 L761.3 429.4 L759.8 427.6 L758.2 427.6 L757.5 430.0 L757.0 431.7 L758.0 433.4 L758.4 434.4 L759.7 434.3 L760.1 435.8 L758.6 436.7 L758.0 439.1 L759.9 439.7 L758.7 440.6 L757.5 441.7Z'/><path d='M757.2 438.5 L757.2 436.7 L757.0 435.3 L757.5 434.4 L756.6 433.6 L755.0 433.6 L753.4 435.3 L753.5 436.7 L753.1 439.3 L755.1 439.4 L757.2 438.5Z'/><path d='M739.6 413.4 L741.6 411.3 L745.2 411.8 L748.6 411.0 L750.0 413.9 L749.1 415.9 L745.2 418.1 L741.4 417.2 L742.0 415.7 L739.6 413.4Z'/><path d='M887.7 463.8 L888.1 465.8 L889.1 465.7 L889.9 463.6 L889.5 462.7 L890.8 462.7 L891.8 463.3 L892.9 462.9 L894.5 462.4 L896.4 461.9 L897.6 461.4 L898.3 460.4 L898.5 457.6 L899.5 456.1 L899.0 453.7 L898.0 454.9 L897.6 455.9 L897.5 458.0 L896.1 458.8 L894.5 458.9 L893.7 460.7 L891.0 461.0 L888.9 462.1 L887.7 463.8Z'/><path d='M897.6 453.6 L898.7 453.2 L900.7 452.9 L902.8 451.4 L901.9 450.3 L899.5 448.4 L898.8 449.8 L899.0 451.2 L897.8 451.4 L897.6 453.6Z'/><path d='M899.5 447.6 L900.9 446.5 L900.6 443.3 L902.0 443.3 L900.4 439.6 L900.7 436.4 L900.1 435.1 L899.3 437.2 L899.5 441.1 L899.5 447.6Z'/><path d='M878.5 474.8 L879.1 475.8 L880.2 472.9 L879.8 472.4 L878.5 474.8Z'/><path d='M867.4 478.7 L869.2 477.8 L869.7 478.3 L868.2 479.7 L867.4 478.7Z'/><path d='M839.8 488.0 L841.6 490.1 L841.0 491.5 L839.9 491.7 L839.7 489.6 L839.8 488.0Z'/><path d='M854.6 492.1 L856.7 492.5 L859.4 495.4 L862.8 498.5 L864.9 500.6 L864.8 503.1 L863.4 503.2 L861.3 501.3 L859.9 499.4 L857.8 495.9 L855.7 494.1 L854.6 492.1Z'/><path d='M864.1 504.1 L864.9 503.2 L867.1 503.6 L869.7 503.8 L871.3 504.1 L873.0 504.9 L873.0 505.8 L868.7 505.4 L865.4 504.6 L864.1 504.1Z'/><path d='M867.8 496.1 L868.3 498.5 L869.0 500.3 L870.4 500.5 L873.0 501.0 L874.5 501.3 L875.0 499.7 L875.9 497.5 L876.3 496.5 L877.3 496.1 L876.1 493.7 L877.0 492.7 L875.6 490.9 L875.0 490.9 L874.0 492.5 L872.6 493.2 L871.1 494.7 L869.9 495.1 L868.3 495.6 L867.8 496.1Z'/><path d='M877.4 498.0 L877.9 500.9 L878.7 502.9 L879.3 501.3 L881.0 502.1 L879.6 499.4 L881.6 498.5 L879.3 498.3 L878.8 497.0 L882.9 496.3 L882.7 497.1 L878.3 496.8 L877.4 498.0Z'/><path d='M888.9 498.7 L891.8 498.4 L893.7 499.4 L895.6 499.1 L898.5 500.0 L900.9 500.9 L903.1 502.3 L904.8 503.5 L905.1 505.0 L906.0 506.2 L907.9 507.5 L906.9 507.6 L904.3 507.3 L903.2 505.2 L901.4 504.8 L900.7 506.2 L898.5 506.3 L896.6 505.3 L895.4 502.7 L892.9 501.7 L890.8 501.4 L889.9 500.2 L891.3 499.6 L889.8 499.0 L888.9 498.7Z'/><path d='M878.9 479.4 L880.4 479.4 L880.7 480.9 L879.9 482.1 L882.2 483.9 L882.0 484.9 L880.4 484.1 L878.9 483.6 L878.3 481.9 L878.9 479.4Z'/><path d='M880.3 490.8 L881.7 490.0 L883.6 488.0 L884.7 490.5 L883.6 492.1 L882.2 491.2 L880.3 490.8Z'/><path d='M871.9 519.4 L872.1 522.9 L872.8 523.9 L873.5 527.2 L873.5 531.7 L874.0 532.9 L876.4 533.5 L878.3 532.3 L881.7 532.2 L884.1 530.3 L887.0 529.7 L889.1 529.4 L891.3 530.2 L892.8 533.0 L893.7 532.5 L895.4 530.9 L895.2 534.2 L897.1 534.3 L897.6 536.4 L899.2 537.4 L901.4 537.4 L903.6 538.3 L905.2 536.8 L907.2 536.4 L907.6 534.0 L908.6 531.7 L910.0 528.9 L910.6 526.3 L910.2 522.9 L908.9 521.8 L907.9 519.7 L906.7 518.7 L906.0 517.4 L904.3 516.3 L903.5 515.3 L902.8 513.1 L902.6 512.1 L901.9 511.3 L901.0 510.9 L900.9 509.1 L900.0 507.8 L899.2 509.6 L899.0 511.6 L898.8 513.6 L898.1 514.7 L896.9 514.4 L895.4 513.4 L893.5 512.1 L894.5 510.6 L894.5 509.3 L893.2 509.1 L891.8 509.0 L890.3 508.5 L889.2 509.3 L888.1 510.3 L887.6 512.0 L886.0 512.0 L885.1 510.9 L883.9 511.6 L882.6 513.4 L881.7 514.4 L880.4 515.1 L879.5 516.6 L877.4 517.2 L875.2 517.7 L873.3 518.7 L871.9 519.4Z'/><path d='M902.1 540.4 L903.8 540.9 L905.5 540.6 L905.4 542.3 L904.6 543.8 L903.1 543.9 L902.2 541.9 L902.1 540.4Z'/><path d='M929.0 532.9 L930.5 533.8 L932.0 535.8 L934.6 536.7 L934.0 538.5 L932.9 539.5 L931.4 541.5 L930.8 541.2 L931.2 539.3 L930.0 538.6 L930.8 537.3 L930.7 535.3 L929.0 532.9Z'/><path d='M929.0 540.1 L930.5 541.2 L930.0 542.4 L929.1 544.2 L927.5 545.4 L927.0 547.1 L925.7 548.2 L923.0 547.5 L923.3 546.4 L924.8 544.7 L927.2 543.0 L928.4 540.8 L929.0 540.1Z'/><path d='M810.4 509.1 L811.4 512.4 L810.9 514.1 L809.8 517.1 L808.3 522.2 L806.4 522.9 L805.3 521.3 L804.6 519.0 L805.7 516.6 L805.3 514.4 L805.8 513.3 L807.5 512.8 L809.0 511.1 L810.4 509.1Z'/><path d='M706.0 445.3 L709.2 443.3 L709.7 439.6 L711.8 443.3 L712.3 445.5 L711.6 446.6 L709.2 445.5 L706.0 445.3Z'/><path d='M681.3 475.9 L684.2 475.1 L686.6 474.9 L689.0 476.3 L691.7 477.7 L688.5 478.0 L686.6 476.3 L683.2 476.1 L681.3 475.9Z'/><path d='M691.4 478.1 L694.3 478.0 L697.3 479.3 L694.8 479.9 L691.5 479.6 L691.4 478.1Z'/><path d='M893.7 389.4 L898.5 390.8 L903.3 385.8 L899.5 382.0 L894.7 383.6 L893.7 389.4Z'/><path d='M934.6 399.1 L936.8 398.2 L937.9 397.0 L935.0 397.3 L934.6 399.1Z'/></g><clipPath id='land590'><path d='M601.5 413.2 L603.5 406.5 L606.3 403.3 L612.6 398.2 L618.8 400.5 L627.5 402.8 L633.2 403.9 L640.0 401.4 L647.7 403.3 L653.4 406.3 L659.2 406.5 L668.8 407.8 L671.7 405.2 L676.5 405.2 L680.3 402.5 L684.7 404.1 L684.2 410.8 L680.3 411.8 L678.9 416.1 L675.8 417.6 L672.7 423.0 L672.2 427.2 L674.1 430.5 L677.9 431.4 L681.3 433.4 L683.9 437.2 L686.1 439.9 L687.1 434.8 L689.0 429.6 L688.5 424.0 L688.0 420.4 L692.4 420.4 L695.7 423.0 L698.1 427.8 L701.0 424.4 L703.4 429.6 L704.9 433.1 L708.2 436.4 L709.5 438.8 L706.3 441.4 L701.0 441.8 L699.1 443.0 L701.0 443.6 L700.7 446.2 L704.4 448.3 L700.0 450.8 L698.6 449.2 L695.5 450.8 L695.2 453.3 L691.9 454.7 L691.6 456.4 L690.0 458.0 L689.7 459.3 L690.3 461.3 L688.5 462.4 L685.3 465.0 L684.9 467.3 L686.1 470.7 L685.6 472.5 L684.4 471.6 L683.4 468.9 L682.3 467.1 L679.9 466.8 L677.2 467.0 L676.5 468.1 L672.7 467.7 L669.6 469.7 L669.3 472.7 L669.1 475.8 L670.4 478.6 L672.2 479.7 L675.5 479.2 L676.0 476.8 L679.2 476.3 L678.8 479.4 L678.1 481.9 L681.8 482.0 L682.9 483.1 L682.6 486.9 L684.7 488.9 L686.6 488.3 L688.3 489.2 L688.5 490.3 L686.8 490.3 L685.7 490.5 L684.4 489.6 L680.6 487.4 L679.8 485.6 L678.9 484.9 L675.2 484.0 L672.7 481.9 L670.3 482.2 L665.9 480.6 L661.6 477.9 L661.6 475.3 L658.9 472.4 L656.5 469.7 L654.6 466.9 L652.8 465.3 L653.9 468.4 L655.4 470.5 L657.3 474.1 L657.1 474.8 L655.2 472.9 L653.2 469.4 L652.7 467.3 L651.0 465.2 L650.4 464.2 L649.1 462.6 L647.1 462.0 L645.8 459.8 L644.8 458.0 L644.0 455.7 L643.4 452.3 L643.8 447.3 L643.1 444.3 L644.8 443.6 L642.9 441.8 L640.2 440.6 L637.9 435.1 L635.2 430.5 L632.3 427.6 L628.9 425.6 L624.6 425.0 L622.2 423.0 L619.3 425.6 L617.1 426.5 L615.5 430.5 L612.6 431.9 L609.2 433.4 L605.9 434.4 L607.6 432.8 L611.6 427.8 L609.7 427.4 L607.3 425.2 L604.7 423.4 L603.9 420.4 L605.7 418.5 L608.3 415.7 L603.2 415.4 L601.5 413.2Z'/><path d='M688.3 489.2 L690.0 488.3 L690.6 487.1 L692.8 486.6 L694.3 485.5 L694.5 486.9 L695.9 486.4 L697.6 487.4 L701.5 487.3 L703.6 487.2 L704.9 489.1 L706.8 490.8 L708.2 491.7 L711.1 491.9 L713.3 493.2 L714.5 495.8 L714.9 497.5 L716.6 498.5 L720.2 499.7 L723.1 500.3 L726.0 501.1 L729.2 502.7 L729.6 504.7 L728.9 506.7 L727.0 508.9 L725.6 510.4 L725.3 514.6 L724.6 517.1 L722.8 519.7 L720.7 520.2 L718.3 521.3 L716.4 523.2 L716.2 525.9 L714.9 528.3 L712.5 531.7 L711.1 533.1 L708.7 533.2 L707.1 532.5 L708.0 534.6 L707.7 537.3 L703.2 538.1 L703.1 540.4 L700.5 540.8 L701.0 542.7 L700.0 546.0 L698.1 547.8 L699.8 549.9 L697.2 553.5 L696.7 556.2 L697.4 558.1 L699.1 561.1 L696.2 561.9 L693.3 559.4 L691.3 556.5 L690.5 550.9 L691.6 547.1 L692.4 542.1 L692.3 537.0 L693.3 533.5 L694.3 527.7 L694.5 523.4 L695.3 520.2 L695.5 515.4 L694.3 514.4 L690.9 512.6 L689.7 510.6 L688.3 508.1 L686.6 504.7 L685.0 502.8 L685.6 500.9 L686.1 499.6 L685.3 498.5 L686.1 496.5 L687.1 495.9 L688.5 494.1 L688.5 491.2 L688.3 489.2Z'/><path d='M746.6 476.8 L747.6 473.9 L749.1 471.6 L750.5 469.7 L753.4 467.8 L753.7 465.6 L754.8 463.5 L756.5 462.4 L757.3 460.6 L760.9 461.4 L764.0 459.8 L766.8 459.3 L771.2 459.3 L772.8 458.9 L773.7 459.4 L773.1 461.0 L773.6 462.0 L772.7 462.8 L774.1 463.8 L777.6 464.7 L778.2 465.8 L781.3 466.9 L782.3 466.1 L782.2 464.8 L784.6 464.1 L787.0 465.1 L790.9 466.2 L793.8 465.9 L795.9 465.8 L796.2 468.9 L795.0 469.2 L794.1 467.4 L794.3 467.9 L797.1 473.7 L798.6 476.3 L800.0 479.9 L801.2 482.4 L802.9 484.1 L804.5 485.4 L805.3 486.4 L812.2 486.0 L812.0 487.4 L811.1 489.8 L809.1 493.2 L807.2 495.4 L804.8 498.0 L802.9 499.2 L801.4 500.9 L800.5 502.8 L801.0 505.2 L801.4 507.6 L801.9 511.6 L801.0 513.6 L798.6 515.1 L796.6 517.6 L797.1 520.7 L794.5 523.3 L794.2 526.1 L792.3 528.9 L789.9 530.9 L787.6 532.3 L784.6 532.3 L782.2 533.2 L780.8 532.4 L780.5 530.0 L779.6 528.3 L777.7 524.5 L776.9 520.2 L775.8 517.6 L774.3 514.4 L774.8 511.6 L776.2 508.1 L775.5 505.7 L774.7 503.3 L773.6 501.2 L771.6 498.5 L772.4 496.5 L772.1 493.8 L771.2 493.1 L768.8 493.4 L767.3 491.4 L764.4 491.5 L761.1 492.9 L758.7 492.5 L755.8 493.3 L753.9 492.2 L751.9 490.9 L750.2 489.3 L748.9 487.3 L747.1 485.6 L746.2 483.2 L747.1 481.7 L747.4 478.6 L746.6 476.8Z'/><path d='M753.9 459.2 L754.5 457.0 L754.0 455.2 L754.5 452.9 L754.1 451.6 L755.3 450.7 L758.2 451.0 L761.6 451.1 L761.8 448.7 L761.6 446.9 L760.1 445.5 L758.5 444.8 L758.7 443.8 L761.4 443.8 L761.8 442.3 L764.4 441.5 L765.4 440.2 L766.8 439.6 L767.5 437.4 L769.2 436.6 L771.2 436.1 L771.3 433.1 L770.9 430.9 L772.9 429.4 L773.2 431.7 L772.9 433.8 L774.5 435.1 L776.5 435.8 L779.3 434.4 L781.7 434.9 L783.4 433.6 L783.2 430.9 L784.6 429.4 L786.4 430.1 L785.7 427.8 L785.6 426.3 L789.9 425.9 L792.0 425.2 L790.9 424.4 L788.5 424.2 L785.0 425.2 L783.6 423.6 L783.4 420.0 L784.9 417.2 L787.3 414.5 L787.2 412.9 L784.4 412.7 L783.2 415.7 L781.3 418.3 L779.8 420.4 L779.4 423.0 L781.1 425.0 L780.9 426.5 L778.9 429.3 L778.4 431.9 L776.6 433.3 L775.3 433.1 L775.0 430.9 L774.3 428.7 L773.6 426.9 L773.1 425.6 L771.6 427.1 L770.7 428.5 L769.2 428.3 L768.3 426.9 L768.0 424.0 L767.8 421.4 L769.2 419.4 L771.2 417.9 L773.1 415.7 L774.8 412.7 L775.8 408.6 L777.8 406.0 L779.3 404.1 L781.7 401.7 L784.1 400.5 L787.5 398.8 L790.9 399.6 L792.8 401.9 L794.7 403.6 L798.1 404.7 L802.4 408.1 L802.7 411.3 L799.5 412.2 L796.4 413.2 L796.2 415.7 L798.6 417.2 L801.0 415.7 L802.9 412.7 L805.3 411.8 L805.6 407.3 L807.7 407.8 L810.1 406.8 L814.4 405.7 L818.3 406.0 L821.1 402.5 L825.0 403.9 L828.4 406.0 L827.7 400.5 L827.2 397.3 L829.3 392.8 L831.7 393.5 L833.0 395.4 L832.7 399.1 L833.6 406.0 L836.0 404.7 L835.6 398.5 L838.4 395.1 L840.4 391.2 L846.6 388.4 L846.3 385.8 L851.4 383.6 L857.2 381.6 L863.0 374.8 L865.8 378.7 L869.7 380.4 L872.1 383.6 L871.9 390.8 L876.9 391.2 L882.2 390.8 L886.5 393.5 L887.5 398.5 L889.9 397.0 L892.8 397.3 L896.6 394.8 L898.5 393.5 L903.3 395.1 L907.6 397.6 L910.0 399.3 L914.9 399.3 L917.3 401.9 L921.6 403.0 L926.4 401.7 L931.2 402.5 L936.0 405.2 L939.8 409.1 L942.7 410.1 L945.6 412.2 L941.8 415.7 L938.4 415.0 L937.0 413.9 L934.6 416.8 L935.0 420.2 L932.6 420.0 L929.8 421.4 L926.7 425.0 L922.5 424.4 L921.4 425.4 L920.1 426.5 L918.7 428.7 L919.9 431.9 L918.7 434.3 L916.8 437.2 L915.3 437.7 L913.6 440.2 L912.9 436.4 L912.7 431.4 L913.7 429.1 L915.3 428.7 L917.3 425.9 L920.1 421.4 L916.8 421.8 L912.9 422.4 L909.6 426.5 L904.8 426.3 L900.4 426.3 L898.0 428.2 L894.7 433.1 L893.2 434.8 L895.8 435.9 L898.7 437.7 L898.8 441.8 L898.0 444.1 L896.1 446.2 L893.4 450.8 L890.8 451.9 L888.6 452.6 L887.7 454.5 L886.5 457.6 L887.4 461.0 L885.4 462.0 L884.4 462.1 L884.6 459.8 L884.1 458.3 L882.9 457.4 L883.3 456.1 L882.5 455.5 L879.8 456.9 L879.8 455.2 L880.4 454.9 L879.3 454.5 L877.4 456.5 L876.4 456.5 L875.9 457.5 L877.1 458.7 L877.9 459.1 L879.1 458.2 L880.7 458.7 L879.3 459.8 L877.9 461.5 L878.6 462.4 L879.6 464.4 L880.2 466.1 L880.1 467.8 L879.8 469.1 L878.0 471.9 L876.9 473.2 L875.0 474.9 L872.8 475.5 L870.2 476.3 L869.2 477.4 L868.5 476.3 L867.1 476.2 L865.6 477.4 L864.6 478.9 L865.4 480.4 L866.8 481.9 L868.0 484.4 L868.0 486.4 L866.3 487.4 L865.4 488.3 L863.9 489.2 L863.9 487.8 L863.3 487.4 L862.0 486.9 L861.5 485.7 L860.1 485.2 L859.1 484.4 L858.3 487.4 L858.6 488.6 L859.4 489.8 L859.6 491.2 L860.6 491.9 L862.4 493.1 L862.4 494.6 L863.1 496.2 L862.5 496.3 L860.4 494.8 L859.4 492.7 L859.1 491.3 L857.5 489.5 L857.9 487.4 L857.7 484.9 L856.9 481.9 L856.4 481.0 L854.7 482.2 L853.6 481.9 L853.9 479.9 L853.0 478.2 L851.8 477.2 L851.4 476.0 L850.1 475.2 L848.5 475.9 L846.6 476.8 L846.4 477.9 L844.7 478.6 L842.1 480.9 L840.2 482.4 L840.1 484.1 L840.0 486.4 L839.8 487.5 L838.4 488.8 L837.5 489.8 L836.5 488.9 L835.8 486.6 L834.9 485.2 L834.1 482.9 L833.4 480.4 L833.1 478.1 L833.0 476.8 L832.7 476.4 L832.5 475.6 L831.0 477.1 L829.3 475.5 L830.5 474.9 L829.0 474.5 L827.9 473.8 L827.2 472.4 L825.0 472.5 L822.1 472.6 L819.2 472.0 L818.1 471.7 L817.7 470.5 L815.6 471.1 L814.4 470.7 L813.0 469.7 L811.8 468.6 L811.2 467.1 L810.0 466.9 L809.1 467.4 L809.5 468.9 L810.4 470.0 L811.2 471.0 L811.8 472.7 L812.6 472.5 L812.6 473.5 L814.4 473.6 L816.3 472.1 L817.1 471.4 L817.3 473.2 L818.2 473.9 L819.5 474.3 L820.5 475.3 L819.2 477.4 L818.6 478.4 L817.6 479.3 L816.1 480.2 L813.2 482.0 L810.1 483.4 L806.7 484.8 L804.8 485.2 L804.1 483.4 L803.9 481.4 L802.9 479.9 L801.4 477.9 L800.6 476.3 L800.0 474.3 L798.8 472.7 L797.6 470.5 L796.4 469.3 L796.0 465.8 L796.2 465.3 L796.8 463.9 L797.4 462.1 L797.4 460.6 L797.8 459.5 L796.2 459.4 L794.2 460.3 L792.3 459.8 L790.9 459.5 L789.3 458.9 L789.1 457.5 L788.3 456.5 L788.3 455.4 L789.4 454.9 L790.9 454.1 L793.0 454.1 L795.2 452.9 L796.8 452.9 L799.8 454.4 L802.9 453.6 L803.0 452.0 L801.4 451.1 L800.0 449.9 L798.6 448.7 L799.7 447.2 L800.7 446.1 L798.9 446.2 L796.6 447.6 L797.1 448.6 L795.7 449.6 L794.2 448.6 L795.2 447.7 L793.3 446.8 L791.8 448.0 L791.4 448.8 L790.6 450.2 L789.9 451.4 L789.7 452.8 L789.9 453.7 L788.5 454.7 L787.5 454.5 L786.1 454.9 L784.9 455.1 L785.6 456.7 L784.6 458.1 L785.1 459.8 L783.9 459.4 L783.2 457.6 L782.5 456.0 L781.7 454.2 L781.6 452.9 L780.8 452.3 L778.4 451.0 L777.4 449.5 L776.5 448.7 L776.1 447.9 L774.8 448.6 L774.9 450.0 L776.1 451.0 L777.2 452.8 L778.6 453.2 L780.3 454.6 L780.8 455.4 L780.1 455.1 L778.9 456.1 L779.4 456.9 L778.4 458.1 L778.1 457.4 L778.6 456.4 L777.9 455.4 L776.9 454.6 L776.0 453.8 L774.3 452.7 L773.2 451.8 L772.8 450.4 L771.5 449.8 L770.2 450.6 L769.2 451.5 L767.4 451.1 L766.0 451.5 L766.1 452.9 L764.9 454.0 L763.8 454.6 L763.0 456.2 L762.5 457.6 L761.8 458.6 L760.9 459.5 L758.8 459.5 L757.8 460.4 L756.9 459.4 L755.8 458.9 L754.4 459.2 L753.9 459.2Z'/><path d='M757.5 441.7 L760.1 440.8 L763.0 440.6 L764.3 440.0 L764.6 437.7 L763.3 436.6 L762.7 434.8 L761.5 432.9 L760.9 431.7 L761.3 429.4 L759.8 427.6 L758.2 427.6 L757.5 430.0 L757.0 431.7 L758.0 433.4 L758.4 434.4 L759.7 434.3 L760.1 435.8 L758.6 436.7 L758.0 439.1 L759.9 439.7 L758.7 440.6 L757.5 441.7Z'/><path d='M757.2 438.5 L757.2 436.7 L757.0 435.3 L757.5 434.4 L756.6 433.6 L755.0 433.6 L753.4 435.3 L753.5 436.7 L753.1 439.3 L755.1 439.4 L757.2 438.5Z'/><path d='M739.6 413.4 L741.6 411.3 L745.2 411.8 L748.6 411.0 L750.0 413.9 L749.1 415.9 L745.2 418.1 L741.4 417.2 L742.0 415.7 L739.6 413.4Z'/><path d='M887.7 463.8 L888.1 465.8 L889.1 465.7 L889.9 463.6 L889.5 462.7 L890.8 462.7 L891.8 463.3 L892.9 462.9 L894.5 462.4 L896.4 461.9 L897.6 461.4 L898.3 460.4 L898.5 457.6 L899.5 456.1 L899.0 453.7 L898.0 454.9 L897.6 455.9 L897.5 458.0 L896.1 458.8 L894.5 458.9 L893.7 460.7 L891.0 461.0 L888.9 462.1 L887.7 463.8Z'/><path d='M897.6 453.6 L898.7 453.2 L900.7 452.9 L902.8 451.4 L901.9 450.3 L899.5 448.4 L898.8 449.8 L899.0 451.2 L897.8 451.4 L897.6 453.6Z'/><path d='M899.5 447.6 L900.9 446.5 L900.6 443.3 L902.0 443.3 L900.4 439.6 L900.7 436.4 L900.1 435.1 L899.3 437.2 L899.5 441.1 L899.5 447.6Z'/><path d='M878.5 474.8 L879.1 475.8 L880.2 472.9 L879.8 472.4 L878.5 474.8Z'/><path d='M867.4 478.7 L869.2 477.8 L869.7 478.3 L868.2 479.7 L867.4 478.7Z'/><path d='M839.8 488.0 L841.6 490.1 L841.0 491.5 L839.9 491.7 L839.7 489.6 L839.8 488.0Z'/><path d='M854.6 492.1 L856.7 492.5 L859.4 495.4 L862.8 498.5 L864.9 500.6 L864.8 503.1 L863.4 503.2 L861.3 501.3 L859.9 499.4 L857.8 495.9 L855.7 494.1 L854.6 492.1Z'/><path d='M864.1 504.1 L864.9 503.2 L867.1 503.6 L869.7 503.8 L871.3 504.1 L873.0 504.9 L873.0 505.8 L868.7 505.4 L865.4 504.6 L864.1 504.1Z'/><path d='M867.8 496.1 L868.3 498.5 L869.0 500.3 L870.4 500.5 L873.0 501.0 L874.5 501.3 L875.0 499.7 L875.9 497.5 L876.3 496.5 L877.3 496.1 L876.1 493.7 L877.0 492.7 L875.6 490.9 L875.0 490.9 L874.0 492.5 L872.6 493.2 L871.1 494.7 L869.9 495.1 L868.3 495.6 L867.8 496.1Z'/><path d='M877.4 498.0 L877.9 500.9 L878.7 502.9 L879.3 501.3 L881.0 502.1 L879.6 499.4 L881.6 498.5 L879.3 498.3 L878.8 497.0 L882.9 496.3 L882.7 497.1 L878.3 496.8 L877.4 498.0Z'/><path d='M888.9 498.7 L891.8 498.4 L893.7 499.4 L895.6 499.1 L898.5 500.0 L900.9 500.9 L903.1 502.3 L904.8 503.5 L905.1 505.0 L906.0 506.2 L907.9 507.5 L906.9 507.6 L904.3 507.3 L903.2 505.2 L901.4 504.8 L900.7 506.2 L898.5 506.3 L896.6 505.3 L895.4 502.7 L892.9 501.7 L890.8 501.4 L889.9 500.2 L891.3 499.6 L889.8 499.0 L888.9 498.7Z'/><path d='M878.9 479.4 L880.4 479.4 L880.7 480.9 L879.9 482.1 L882.2 483.9 L882.0 484.9 L880.4 484.1 L878.9 483.6 L878.3 481.9 L878.9 479.4Z'/><path d='M880.3 490.8 L881.7 490.0 L883.6 488.0 L884.7 490.5 L883.6 492.1 L882.2 491.2 L880.3 490.8Z'/><path d='M871.9 519.4 L872.1 522.9 L872.8 523.9 L873.5 527.2 L873.5 531.7 L874.0 532.9 L876.4 533.5 L878.3 532.3 L881.7 532.2 L884.1 530.3 L887.0 529.7 L889.1 529.4 L891.3 530.2 L892.8 533.0 L893.7 532.5 L895.4 530.9 L895.2 534.2 L897.1 534.3 L897.6 536.4 L899.2 537.4 L901.4 537.4 L903.6 538.3 L905.2 536.8 L907.2 536.4 L907.6 534.0 L908.6 531.7 L910.0 528.9 L910.6 526.3 L910.2 522.9 L908.9 521.8 L907.9 519.7 L906.7 518.7 L906.0 517.4 L904.3 516.3 L903.5 515.3 L902.8 513.1 L902.6 512.1 L901.9 511.3 L901.0 510.9 L900.9 509.1 L900.0 507.8 L899.2 509.6 L899.0 511.6 L898.8 513.6 L898.1 514.7 L896.9 514.4 L895.4 513.4 L893.5 512.1 L894.5 510.6 L894.5 509.3 L893.2 509.1 L891.8 509.0 L890.3 508.5 L889.2 509.3 L888.1 510.3 L887.6 512.0 L886.0 512.0 L885.1 510.9 L883.9 511.6 L882.6 513.4 L881.7 514.4 L880.4 515.1 L879.5 516.6 L877.4 517.2 L875.2 517.7 L873.3 518.7 L871.9 519.4Z'/><path d='M902.1 540.4 L903.8 540.9 L905.5 540.6 L905.4 542.3 L904.6 543.8 L903.1 543.9 L902.2 541.9 L902.1 540.4Z'/><path d='M929.0 532.9 L930.5 533.8 L932.0 535.8 L934.6 536.7 L934.0 538.5 L932.9 539.5 L931.4 541.5 L930.8 541.2 L931.2 539.3 L930.0 538.6 L930.8 537.3 L930.7 535.3 L929.0 532.9Z'/><path d='M929.0 540.1 L930.5 541.2 L930.0 542.4 L929.1 544.2 L927.5 545.4 L927.0 547.1 L925.7 548.2 L923.0 547.5 L923.3 546.4 L924.8 544.7 L927.2 543.0 L928.4 540.8 L929.0 540.1Z'/><path d='M810.4 509.1 L811.4 512.4 L810.9 514.1 L809.8 517.1 L808.3 522.2 L806.4 522.9 L805.3 521.3 L804.6 519.0 L805.7 516.6 L805.3 514.4 L805.8 513.3 L807.5 512.8 L809.0 511.1 L810.4 509.1Z'/><path d='M706.0 445.3 L709.2 443.3 L709.7 439.6 L711.8 443.3 L712.3 445.5 L711.6 446.6 L709.2 445.5 L706.0 445.3Z'/><path d='M681.3 475.9 L684.2 475.1 L686.6 474.9 L689.0 476.3 L691.7 477.7 L688.5 478.0 L686.6 476.3 L683.2 476.1 L681.3 475.9Z'/><path d='M691.4 478.1 L694.3 478.0 L697.3 479.3 L694.8 479.9 L691.5 479.6 L691.4 478.1Z'/><path d='M893.7 389.4 L898.5 390.8 L903.3 385.8 L899.5 382.0 L894.7 383.6 L893.7 389.4Z'/><path d='M934.6 399.1 L936.8 398.2 L937.9 397.0 L935.0 397.3 L934.6 399.1Z'/></clipPath><g clip-path='url(#land590)'><g fill='#9fe0c3'><path d='M690.9 497.5 L695.7 495.6 L703.4 493.7 L710.1 494.6 L714.9 497.5 L713.0 502.3 L709.2 506.2 L702.5 509.1 L695.7 509.1 L691.9 505.2 L690.9 497.5Z'/><path d='M772.6 494.6 L780.3 493.2 L789.0 493.7 L791.8 497.5 L789.9 502.3 L782.2 503.3 L775.5 501.3 L772.6 494.6Z'/><path d='M789.9 429.6 L797.6 431.4 L806.2 430.5 L814.9 430.5 L822.6 429.6 L822.6 418.9 L818.7 413.4 L809.1 412.2 L799.5 414.5 L791.8 418.9 L789.9 429.6Z'/><path d='M670.7 446.2 L680.3 446.2 L686.1 449.0 L682.3 452.9 L672.7 451.6 L670.7 446.2Z'/><path d='M859.1 477.9 L864.9 475.8 L867.8 479.9 L863.9 486.9 L859.1 483.9 L859.1 477.9Z'/><path d='M835.1 418.9 L844.7 421.0 L854.3 423.0 L859.1 430.5 L849.5 433.9 L839.9 432.2 L832.2 426.9 L835.1 418.9Z'/><path d='M647.7 428.7 L662.1 428.7 L668.8 435.6 L659.2 438.8 L649.6 435.6 L647.7 428.7Z'/></g><g fill='#f0ebdf'><path d='M745.7 477.9 L747.6 473.7 L750.5 470.0 L753.4 467.3 L755.3 463.9 L757.2 460.4 L761.1 460.4 L766.8 458.6 L772.6 458.0 L774.5 461.5 L782.2 463.9 L788.0 463.9 L791.8 462.7 L794.7 458.0 L797.6 455.5 L803.4 454.2 L807.2 456.7 L811.1 457.4 L815.9 454.2 L820.7 451.6 L824.5 454.2 L828.4 458.0 L831.2 462.7 L829.3 467.3 L827.4 470.5 L822.6 471.6 L817.8 471.8 L815.9 474.3 L813.0 478.9 L808.2 482.9 L804.3 484.9 L802.4 485.9 L798.6 482.9 L795.7 483.9 L791.8 485.4 L786.1 484.9 L778.4 484.4 L770.7 483.9 L763.0 483.4 L755.3 482.9 L748.6 482.4 L745.7 477.9Z'/><path d='M805.3 447.6 L809.1 441.8 L815.9 438.8 L822.6 438.0 L830.3 438.8 L838.0 440.3 L844.7 443.3 L849.5 442.6 L855.3 444.1 L863.0 445.5 L870.6 446.9 L876.4 447.6 L879.3 450.3 L875.5 453.6 L869.7 454.9 L864.9 458.0 L860.1 459.8 L856.2 461.5 L851.4 463.3 L845.7 463.9 L839.9 462.1 L835.1 458.6 L830.3 457.4 L824.5 455.5 L818.7 454.2 L813.9 453.6 L811.1 451.6 L805.3 447.6Z'/><path d='M645.7 450.3 L650.5 446.2 L656.3 446.9 L663.0 451.6 L665.9 459.2 L666.9 466.1 L665.9 472.7 L663.0 476.8 L661.1 474.8 L658.2 471.6 L654.4 467.3 L651.5 464.4 L648.6 461.5 L646.7 456.7 L645.7 450.3Z'/><path d='M694.8 534.6 L699.6 535.2 L701.5 539.5 L700.5 546.0 L698.1 548.8 L697.2 554.7 L695.7 557.0 L693.8 553.2 L694.3 544.7 L694.8 534.6Z'/><path d='M871.6 519.2 L873.0 526.6 L874.0 531.1 L880.3 532.3 L887.0 530.0 L891.8 530.0 L895.6 532.3 L898.5 533.5 L902.4 532.3 L904.3 526.6 L903.3 521.3 L900.4 517.1 L897.6 514.1 L893.7 513.6 L888.9 512.1 L885.1 512.6 L880.3 515.6 L874.5 517.6 L871.6 519.2Z'/><path d='M774.1 513.1 L779.3 514.6 L785.1 515.1 L789.0 518.2 L791.8 522.3 L790.9 527.7 L788.0 531.1 L780.8 532.3 L778.4 525.6 L776.0 518.7 L774.1 513.1Z'/><path d='M685.6 502.3 L690.9 509.1 L695.7 515.6 L699.6 519.2 L698.6 524.5 L695.2 527.7 L694.8 521.3 L695.2 515.1 L690.0 511.1 L686.6 504.7 L685.6 502.3Z'/><path d='M797.6 483.9 L801.4 485.9 L805.3 486.9 L812.0 486.1 L810.1 491.7 L805.3 496.5 L801.4 498.5 L798.6 494.6 L797.6 489.8 L797.6 483.9Z'/></g><g fill='#c9c9c9' opacity='0.9'><path d='M642.9 403.3 L652.5 406.3 L668.8 407.8 L676.5 405.2 L684.2 404.7 L684.2 411.0 L680.3 413.4 L677.5 417.9 L672.7 424.0 L666.9 425.0 L657.3 421.0 L649.6 414.5 L642.9 408.6 L642.9 403.3Z'/><path d='M797.6 404.7 L802.4 408.1 L800.5 410.3 L794.7 404.1 L797.6 404.7Z'/><path d='M863.0 374.8 L871.6 383.6 L868.7 391.2 L859.1 392.8 L855.3 384.0 L863.0 374.8Z'/><path d='M886.0 394.4 L898.5 393.5 L910.0 399.3 L907.2 404.7 L892.8 401.9 L886.0 394.4Z'/></g></g><g fill='#54cce2'><path d='M810.3 458.4 L811.5 459.2 L814.7 459.3 L814.8 457.0 L814.0 456.2 L813.9 454.4 L815.6 454.2 L813.9 452.4 L813.6 452.2 L812.3 451.4 L811.3 449.9 L812.5 449.6 L813.9 448.6 L814.1 446.6 L812.2 446.2 L810.2 447.0 L809.6 447.9 L808.7 449.2 L808.7 450.8 L809.7 453.2 L810.7 454.7 L810.5 456.7 L810.3 458.4Z'/></g><g fill='#cbcbcb'><path d='M703.6 410.5 L702.9 413.4 L700.5 415.7 L700.0 418.3 L698.1 418.9 L695.7 419.4 L694.0 417.9 L692.4 415.9 L688.5 415.7 L688.3 413.2 L691.9 409.3 L691.4 406.5 L689.0 403.3 L686.1 400.2 L679.4 401.4 L677.9 399.1 L680.3 396.0 L683.2 391.2 L687.1 391.2 L689.5 393.5 L692.8 396.6 L695.7 400.5 L698.1 403.3 L699.1 407.3 L703.4 409.8 L703.6 410.5Z'/><path d='M649.1 397.6 L651.5 401.9 L657.3 406.0 L665.0 405.2 L665.4 401.9 L664.0 399.1 L662.1 393.5 L659.7 391.8 L654.4 392.8 L650.5 395.4 L649.1 397.6Z'/><path d='M642.1 396.3 L644.8 399.1 L647.7 397.6 L650.1 393.5 L648.6 389.4 L643.3 388.4 L642.1 396.3Z'/><path d='M685.6 387.7 L680.3 387.7 L674.6 386.6 L675.5 382.0 L679.4 380.0 L685.1 380.8 L685.6 387.7Z'/><path d='M676.0 394.4 L671.7 396.0 L670.3 391.2 L674.6 389.1 L676.0 394.4Z'/><path d='M668.3 397.6 L665.0 394.4 L665.9 391.2 L669.3 391.2 L670.3 395.1 L668.3 397.6Z'/><path d='M662.1 385.8 L657.3 387.7 L651.0 386.6 L650.5 381.2 L657.3 379.2 L661.6 382.0 L662.1 385.8Z'/><path d='M668.8 385.8 L663.0 384.0 L664.5 380.8 L669.3 380.0 L668.8 385.8Z'/><path d='M683.2 418.5 L679.9 417.2 L680.8 413.4 L684.7 415.7 L683.2 418.5Z'/></g><g fill='#ececec'><path d='M671.0 359.3 L675.5 353.7 L687.0 345.2 L696.6 342.8 L703.6 348.9 L701.1 354.4 L694.7 362.2 L688.3 368.1 L687.0 380.0 L679.4 378.7 L680.6 371.1 L674.2 368.1 L671.0 359.3Z'/><path d='M773.6 369.6 L776.0 375.7 L778.9 380.0 L780.8 376.6 L784.1 371.1 L789.0 364.4 L784.1 360.5 L779.3 362.8 L774.1 365.0 L773.6 369.6Z'/><path d='M813.0 398.5 L813.9 400.5 L816.8 399.6 L818.3 395.1 L819.2 390.5 L822.6 385.1 L828.8 379.6 L826.4 377.5 L820.7 380.0 L816.8 386.6 L816.3 392.8 L813.0 398.5Z'/><path d='M854.3 368.6 L857.2 373.4 L862.5 368.6 L859.1 359.9 L853.8 360.5 L854.3 368.6Z'/><path d='M808.2 360.5 L813.0 363.3 L822.6 359.9 L818.7 353.7 L809.1 357.5 L808.2 360.5Z'/></g><path d='M694.7 372.0 L699.8 362.2 L706.2 348.9 L715.1 346.7 L719.0 342.8 L725.4 338.7 L735.6 339.5 L741.4 345.2 L739.5 351.0 L751.6 353.0 L745.8 359.3 L743.3 367.1 L744.0 378.7 L742.6 388.7 L740.7 399.1 L735.6 404.1 L727.9 413.2 L720.2 423.4 L715.1 417.0 L713.2 408.1 L711.3 397.9 L708.1 385.1 L703.0 381.2 L696.6 379.2 L694.7 372.0Z' fill='#ffffff'/><path d='M590.0 670.5 L590.0 623.4 L601.5 624.4 L611.1 623.0 L616.9 619.3 L622.7 613.0 L630.4 609.2 L638.1 606.6 L647.7 604.2 L657.3 606.3 L665.0 599.9 L671.7 601.5 L678.4 602.8 L686.1 603.8 L690.9 600.6 L695.7 594.5 L698.1 585.2 L702.0 580.5 L708.2 576.7 L706.3 580.5 L703.9 586.4 L704.4 594.5 L703.4 603.8 L703.9 611.0 L710.1 617.1 L717.8 621.6 L726.5 621.6 L731.3 617.1 L736.1 613.0 L740.9 605.6 L745.7 602.2 L751.5 599.0 L758.2 596.8 L764.9 594.5 L772.6 593.1 L779.3 593.9 L787.0 594.5 L793.8 592.5 L801.4 590.3 L809.1 585.9 L815.9 582.8 L822.6 585.2 L829.3 587.2 L832.2 592.5 L835.1 591.7 L839.9 587.7 L847.6 584.5 L854.3 584.0 L861.0 582.3 L868.7 583.5 L874.5 585.2 L882.2 584.0 L892.8 583.2 L899.5 585.2 L907.2 588.5 L916.8 591.7 L923.5 595.4 L927.3 600.6 L925.4 607.3 L921.6 613.0 L920.6 620.2 L923.5 623.0 L931.2 623.9 L936.0 623.4 L936.0 670.5Z' fill='#faf9f7'/><g fill='#bbebd8'><path d='M947.5 413.2 L949.5 406.5 L952.3 403.3 L958.6 398.2 L964.8 400.5 L973.5 402.8 L979.2 403.9 L986.0 401.4 L993.7 403.3 L999.4 406.3 L1005.2 406.5 L1014.8 407.8 L1017.7 405.2 L1022.5 405.2 L1026.3 402.5 L1030.7 404.1 L1030.2 410.8 L1026.3 411.8 L1024.9 416.1 L1021.8 417.6 L1018.7 423.0 L1018.2 427.2 L1020.1 430.5 L1023.9 431.4 L1027.3 433.4 L1029.9 437.2 L1032.1 439.9 L1033.1 434.8 L1035.0 429.6 L1034.5 424.0 L1034.0 420.4 L1038.4 420.4 L1041.7 423.0 L1044.1 427.8 L1047.0 424.4 L1049.4 429.6 L1050.9 433.1 L1054.2 436.4 L1055.5 438.8 L1052.3 441.4 L1047.0 441.8 L1045.1 443.0 L1047.0 443.6 L1046.7 446.2 L1050.4 448.3 L1046.0 450.8 L1044.6 449.2 L1041.5 450.8 L1041.2 453.3 L1037.9 454.7 L1037.6 456.4 L1036.0 458.0 L1035.7 459.3 L1036.3 461.3 L1034.5 462.4 L1031.3 465.0 L1030.9 467.3 L1032.1 470.7 L1031.6 472.5 L1030.4 471.6 L1029.4 468.9 L1028.3 467.1 L1025.9 466.8 L1023.2 467.0 L1022.5 468.1 L1018.7 467.7 L1015.6 469.7 L1015.3 472.7 L1015.1 475.8 L1016.4 478.6 L1018.2 479.7 L1021.5 479.2 L1022.0 476.8 L1025.2 476.3 L1024.8 479.4 L1024.1 481.9 L1027.8 482.0 L1028.9 483.1 L1028.6 486.9 L1030.7 488.9 L1032.6 488.3 L1034.3 489.2 L1034.5 490.3 L1032.8 490.3 L1031.7 490.5 L1030.4 489.6 L1026.6 487.4 L1025.8 485.6 L1024.9 484.9 L1021.2 484.0 L1018.7 481.9 L1016.3 482.2 L1011.9 480.6 L1007.6 477.9 L1007.6 475.3 L1004.9 472.4 L1002.5 469.7 L1000.6 466.9 L998.8 465.3 L999.9 468.4 L1001.4 470.5 L1003.3 474.1 L1003.1 474.8 L1001.2 472.9 L999.2 469.4 L998.7 467.3 L997.0 465.2 L996.4 464.2 L995.1 462.6 L993.1 462.0 L991.8 459.8 L990.8 458.0 L990.0 455.7 L989.4 452.3 L989.8 447.3 L989.1 444.3 L990.8 443.6 L988.9 441.8 L986.2 440.6 L983.9 435.1 L981.2 430.5 L978.3 427.6 L974.9 425.6 L970.6 425.0 L968.2 423.0 L965.3 425.6 L963.1 426.5 L961.5 430.5 L958.6 431.9 L955.2 433.4 L951.9 434.4 L953.6 432.8 L957.6 427.8 L955.7 427.4 L953.3 425.2 L950.7 423.4 L949.9 420.4 L951.7 418.5 L954.3 415.7 L949.2 415.4 L947.5 413.2Z'/><path d='M1034.3 489.2 L1036.0 488.3 L1036.6 487.1 L1038.8 486.6 L1040.3 485.5 L1040.5 486.9 L1041.9 486.4 L1043.6 487.4 L1047.5 487.3 L1049.6 487.2 L1050.9 489.1 L1052.8 490.8 L1054.2 491.7 L1057.1 491.9 L1059.3 493.2 L1060.5 495.8 L1060.9 497.5 L1062.6 498.5 L1066.2 499.7 L1069.1 500.3 L1072.0 501.1 L1075.2 502.7 L1075.6 504.7 L1074.9 506.7 L1073.0 508.9 L1071.6 510.4 L1071.3 514.6 L1070.6 517.1 L1068.8 519.7 L1066.7 520.2 L1064.3 521.3 L1062.4 523.2 L1062.2 525.9 L1060.9 528.3 L1058.5 531.7 L1057.1 533.1 L1054.7 533.2 L1053.1 532.5 L1054.0 534.6 L1053.7 537.3 L1049.2 538.1 L1049.1 540.4 L1046.5 540.8 L1047.0 542.7 L1046.0 546.0 L1044.1 547.8 L1045.8 549.9 L1043.2 553.5 L1042.7 556.2 L1043.4 558.1 L1045.1 561.1 L1042.2 561.9 L1039.3 559.4 L1037.3 556.5 L1036.5 550.9 L1037.6 547.1 L1038.4 542.1 L1038.3 537.0 L1039.3 533.5 L1040.3 527.7 L1040.5 523.4 L1041.3 520.2 L1041.5 515.4 L1040.3 514.4 L1036.9 512.6 L1035.7 510.6 L1034.3 508.1 L1032.6 504.7 L1031.0 502.8 L1031.6 500.9 L1032.1 499.6 L1031.3 498.5 L1032.1 496.5 L1033.1 495.9 L1034.5 494.1 L1034.5 491.2 L1034.3 489.2Z'/><path d='M1092.6 476.8 L1093.6 473.9 L1095.1 471.6 L1096.5 469.7 L1099.4 467.8 L1099.7 465.6 L1100.8 463.5 L1102.5 462.4 L1103.3 460.6 L1106.9 461.4 L1110.0 459.8 L1112.8 459.3 L1117.2 459.3 L1118.8 458.9 L1119.7 459.4 L1119.1 461.0 L1119.6 462.0 L1118.7 462.8 L1120.1 463.8 L1123.6 464.7 L1124.2 465.8 L1127.3 466.9 L1128.3 466.1 L1128.2 464.8 L1130.6 464.1 L1133.0 465.1 L1136.9 466.2 L1139.8 465.9 L1141.9 465.8 L1142.2 468.9 L1141.0 469.2 L1140.1 467.4 L1140.3 467.9 L1143.1 473.7 L1144.6 476.3 L1146.0 479.9 L1147.2 482.4 L1148.9 484.1 L1150.5 485.4 L1151.3 486.4 L1158.2 486.0 L1158.0 487.4 L1157.1 489.8 L1155.1 493.2 L1153.2 495.4 L1150.8 498.0 L1148.9 499.2 L1147.4 500.9 L1146.5 502.8 L1147.0 505.2 L1147.4 507.6 L1147.9 511.6 L1147.0 513.6 L1144.6 515.1 L1142.6 517.6 L1143.1 520.7 L1140.5 523.3 L1140.2 526.1 L1138.3 528.9 L1135.9 530.9 L1133.6 532.3 L1130.6 532.3 L1128.2 533.2 L1126.8 532.4 L1126.5 530.0 L1125.6 528.3 L1123.7 524.5 L1122.9 520.2 L1121.8 517.6 L1120.3 514.4 L1120.8 511.6 L1122.2 508.1 L1121.5 505.7 L1120.7 503.3 L1119.6 501.2 L1117.7 498.5 L1118.4 496.5 L1118.1 493.8 L1117.2 493.1 L1114.8 493.4 L1113.3 491.4 L1110.4 491.5 L1107.1 492.9 L1104.7 492.5 L1101.8 493.3 L1099.9 492.2 L1097.9 490.9 L1096.2 489.3 L1094.9 487.3 L1093.1 485.6 L1092.2 483.2 L1093.1 481.7 L1093.4 478.6 L1092.6 476.8Z'/><path d='M1099.9 459.2 L1100.5 457.0 L1100.0 455.2 L1100.5 452.9 L1100.1 451.6 L1101.3 450.7 L1104.2 451.0 L1107.6 451.1 L1107.8 448.7 L1107.6 446.9 L1106.1 445.5 L1104.5 444.8 L1104.7 443.8 L1107.4 443.8 L1107.8 442.3 L1110.4 441.5 L1111.4 440.2 L1112.8 439.6 L1113.5 437.4 L1115.2 436.6 L1117.2 436.1 L1117.3 433.1 L1116.9 430.9 L1118.9 429.4 L1119.2 431.7 L1118.9 433.8 L1120.5 435.1 L1122.5 435.8 L1125.3 434.4 L1127.7 434.9 L1129.4 433.6 L1129.2 430.9 L1130.6 429.4 L1132.4 430.1 L1131.7 427.8 L1131.6 426.3 L1135.9 425.9 L1138.0 425.2 L1136.9 424.4 L1134.5 424.2 L1131.0 425.2 L1129.6 423.6 L1129.4 420.0 L1130.9 417.2 L1133.3 414.5 L1133.2 412.9 L1130.4 412.7 L1129.2 415.7 L1127.3 418.3 L1125.8 420.4 L1125.4 423.0 L1127.1 425.0 L1126.9 426.5 L1124.9 429.3 L1124.4 431.9 L1122.6 433.3 L1121.3 433.1 L1121.0 430.9 L1120.3 428.7 L1119.6 426.9 L1119.1 425.6 L1117.7 427.1 L1116.7 428.5 L1115.2 428.3 L1114.3 426.9 L1114.0 424.0 L1113.8 421.4 L1115.2 419.4 L1117.2 417.9 L1119.1 415.7 L1120.8 412.7 L1121.8 408.6 L1123.8 406.0 L1125.3 404.1 L1127.7 401.7 L1130.1 400.5 L1133.5 398.8 L1136.9 399.6 L1138.8 401.9 L1140.7 403.6 L1144.1 404.7 L1148.4 408.1 L1148.7 411.3 L1145.5 412.2 L1142.4 413.2 L1142.2 415.7 L1144.6 417.2 L1147.0 415.7 L1148.9 412.7 L1151.3 411.8 L1151.6 407.3 L1153.7 407.8 L1156.1 406.8 L1160.4 405.7 L1164.3 406.0 L1167.1 402.5 L1171.0 403.9 L1174.4 406.0 L1173.7 400.5 L1173.2 397.3 L1175.3 392.8 L1177.7 393.5 L1179.0 395.4 L1178.7 399.1 L1179.6 406.0 L1182.0 404.7 L1181.6 398.5 L1184.4 395.1 L1186.4 391.2 L1192.6 388.4 L1192.3 385.8 L1197.4 383.6 L1203.2 381.6 L1209.0 374.8 L1211.8 378.7 L1215.7 380.4 L1218.1 383.6 L1217.9 390.8 L1222.9 391.2 L1228.2 390.8 L1232.5 393.5 L1233.5 398.5 L1235.9 397.0 L1238.8 397.3 L1242.6 394.8 L1244.5 393.5 L1249.3 395.1 L1253.6 397.6 L1256.0 399.3 L1260.9 399.3 L1263.3 401.9 L1267.6 403.0 L1272.4 401.7 L1277.2 402.5 L1282.0 405.2 L1285.8 409.1 L1288.7 410.1 L1291.6 412.2 L1287.8 415.7 L1284.4 415.0 L1283.0 413.9 L1280.6 416.8 L1281.0 420.2 L1278.6 420.0 L1275.8 421.4 L1272.7 425.0 L1268.5 424.4 L1267.4 425.4 L1266.1 426.5 L1264.7 428.7 L1265.9 431.9 L1264.7 434.3 L1262.8 437.2 L1261.3 437.7 L1259.6 440.2 L1258.9 436.4 L1258.7 431.4 L1259.7 429.1 L1261.3 428.7 L1263.3 425.9 L1266.1 421.4 L1262.8 421.8 L1258.9 422.4 L1255.6 426.5 L1250.8 426.3 L1246.4 426.3 L1244.0 428.2 L1240.7 433.1 L1239.2 434.8 L1241.8 435.9 L1244.7 437.7 L1244.8 441.8 L1244.0 444.1 L1242.1 446.2 L1239.4 450.8 L1236.8 451.9 L1234.6 452.6 L1233.7 454.5 L1232.5 457.6 L1233.4 461.0 L1231.4 462.0 L1230.4 462.1 L1230.6 459.8 L1230.1 458.3 L1228.9 457.4 L1229.3 456.1 L1228.5 455.5 L1225.8 456.9 L1225.8 455.2 L1226.4 454.9 L1225.3 454.5 L1223.4 456.5 L1222.4 456.5 L1221.9 457.5 L1223.1 458.7 L1223.9 459.1 L1225.1 458.2 L1226.7 458.7 L1225.3 459.8 L1223.9 461.5 L1224.6 462.4 L1225.6 464.4 L1226.2 466.1 L1226.1 467.8 L1225.8 469.1 L1224.0 471.9 L1222.9 473.2 L1221.0 474.9 L1218.8 475.5 L1216.2 476.3 L1215.2 477.4 L1214.5 476.3 L1213.1 476.2 L1211.6 477.4 L1210.6 478.9 L1211.4 480.4 L1212.8 481.9 L1214.0 484.4 L1214.0 486.4 L1212.3 487.4 L1211.4 488.3 L1209.9 489.2 L1209.9 487.8 L1209.3 487.4 L1208.0 486.9 L1207.5 485.7 L1206.1 485.2 L1205.1 484.4 L1204.3 487.4 L1204.6 488.6 L1205.4 489.8 L1205.6 491.2 L1206.6 491.9 L1208.4 493.1 L1208.4 494.6 L1209.1 496.2 L1208.5 496.3 L1206.4 494.8 L1205.4 492.7 L1205.1 491.3 L1203.5 489.5 L1203.9 487.4 L1203.7 484.9 L1202.9 481.9 L1202.4 481.0 L1200.7 482.2 L1199.6 481.9 L1199.9 479.9 L1199.0 478.2 L1197.8 477.2 L1197.4 476.0 L1196.1 475.2 L1194.5 475.9 L1192.6 476.8 L1192.4 477.9 L1190.7 478.6 L1188.1 480.9 L1186.2 482.4 L1186.1 484.1 L1186.0 486.4 L1185.8 487.5 L1184.4 488.8 L1183.5 489.8 L1182.5 488.9 L1181.8 486.6 L1180.9 485.2 L1180.1 482.9 L1179.4 480.4 L1179.1 478.1 L1179.0 476.8 L1178.7 476.4 L1178.5 475.6 L1177.0 477.1 L1175.3 475.5 L1176.5 474.9 L1175.0 474.5 L1173.9 473.8 L1173.2 472.4 L1171.0 472.5 L1168.1 472.6 L1165.2 472.0 L1164.1 471.7 L1163.7 470.5 L1161.6 471.1 L1160.4 470.7 L1159.0 469.7 L1157.8 468.6 L1157.2 467.1 L1156.0 466.9 L1155.1 467.4 L1155.5 468.9 L1156.4 470.0 L1157.2 471.0 L1157.8 472.7 L1158.6 472.5 L1158.6 473.5 L1160.4 473.6 L1162.3 472.1 L1163.1 471.4 L1163.3 473.2 L1164.2 473.9 L1165.5 474.3 L1166.5 475.3 L1165.2 477.4 L1164.6 478.4 L1163.6 479.3 L1162.1 480.2 L1159.2 482.0 L1156.1 483.4 L1152.7 484.8 L1150.8 485.2 L1150.1 483.4 L1149.9 481.4 L1148.9 479.9 L1147.4 477.9 L1146.6 476.3 L1146.0 474.3 L1144.8 472.7 L1143.6 470.5 L1142.4 469.3 L1142.0 465.8 L1142.2 465.3 L1142.8 463.9 L1143.4 462.1 L1143.4 460.6 L1143.8 459.5 L1142.2 459.4 L1140.2 460.3 L1138.3 459.8 L1136.9 459.5 L1135.3 458.9 L1135.1 457.5 L1134.3 456.5 L1134.3 455.4 L1135.4 454.9 L1136.9 454.1 L1139.0 454.1 L1141.2 452.9 L1142.8 452.9 L1145.8 454.4 L1148.9 453.6 L1149.0 452.0 L1147.4 451.1 L1146.0 449.9 L1144.6 448.7 L1145.7 447.2 L1146.7 446.1 L1144.9 446.2 L1142.6 447.6 L1143.1 448.6 L1141.7 449.6 L1140.2 448.6 L1141.2 447.7 L1139.3 446.8 L1137.8 448.0 L1137.4 448.8 L1136.6 450.2 L1135.9 451.4 L1135.7 452.8 L1135.9 453.7 L1134.5 454.7 L1133.5 454.5 L1132.1 454.9 L1130.9 455.1 L1131.6 456.7 L1130.6 458.1 L1131.1 459.8 L1129.9 459.4 L1129.2 457.6 L1128.5 456.0 L1127.7 454.2 L1127.6 452.9 L1126.8 452.3 L1124.4 451.0 L1123.4 449.5 L1122.5 448.7 L1122.1 447.9 L1120.8 448.6 L1120.9 450.0 L1122.1 451.0 L1123.2 452.8 L1124.6 453.2 L1126.3 454.6 L1126.8 455.4 L1126.1 455.1 L1124.9 456.1 L1125.4 456.9 L1124.4 458.1 L1124.1 457.4 L1124.6 456.4 L1123.9 455.4 L1122.9 454.6 L1122.0 453.8 L1120.3 452.7 L1119.2 451.8 L1118.8 450.4 L1117.5 449.8 L1116.2 450.6 L1115.2 451.5 L1113.4 451.1 L1112.0 451.5 L1112.1 452.9 L1110.9 454.0 L1109.8 454.6 L1109.0 456.2 L1108.5 457.6 L1107.8 458.6 L1106.9 459.5 L1104.8 459.5 L1103.8 460.4 L1102.9 459.4 L1101.8 458.9 L1100.4 459.2 L1099.9 459.2Z'/><path d='M1103.5 441.7 L1106.1 440.8 L1109.0 440.6 L1110.3 440.0 L1110.6 437.7 L1109.3 436.6 L1108.7 434.8 L1107.5 432.9 L1106.9 431.7 L1107.3 429.4 L1105.8 427.6 L1104.2 427.6 L1103.5 430.0 L1103.0 431.7 L1104.0 433.4 L1104.4 434.4 L1105.7 434.3 L1106.1 435.8 L1104.6 436.7 L1104.0 439.1 L1105.9 439.7 L1104.7 440.6 L1103.5 441.7Z'/><path d='M1103.2 438.5 L1103.2 436.7 L1103.0 435.3 L1103.5 434.4 L1102.6 433.6 L1101.0 433.6 L1099.4 435.3 L1099.5 436.7 L1099.1 439.3 L1101.1 439.4 L1103.2 438.5Z'/><path d='M1085.6 413.4 L1087.6 411.3 L1091.2 411.8 L1094.6 411.0 L1096.0 413.9 L1095.1 415.9 L1091.2 418.1 L1087.4 417.2 L1088.0 415.7 L1085.6 413.4Z'/><path d='M1233.7 463.8 L1234.1 465.8 L1235.1 465.7 L1235.9 463.6 L1235.5 462.7 L1236.8 462.7 L1237.8 463.3 L1238.9 462.9 L1240.5 462.4 L1242.4 461.9 L1243.6 461.4 L1244.3 460.4 L1244.5 457.6 L1245.5 456.1 L1245.0 453.7 L1244.0 454.9 L1243.6 455.9 L1243.5 458.0 L1242.1 458.8 L1240.5 458.9 L1239.7 460.7 L1237.0 461.0 L1234.9 462.1 L1233.7 463.8Z'/><path d='M1243.6 453.6 L1244.7 453.2 L1246.7 452.9 L1248.8 451.4 L1247.9 450.3 L1245.5 448.4 L1244.8 449.8 L1245.0 451.2 L1243.8 451.4 L1243.6 453.6Z'/><path d='M1245.5 447.6 L1246.9 446.5 L1246.6 443.3 L1248.0 443.3 L1246.4 439.6 L1246.7 436.4 L1246.1 435.1 L1245.3 437.2 L1245.5 441.1 L1245.5 447.6Z'/><path d='M1224.5 474.8 L1225.1 475.8 L1226.2 472.9 L1225.8 472.4 L1224.5 474.8Z'/><path d='M1213.4 478.7 L1215.2 477.8 L1215.7 478.3 L1214.2 479.7 L1213.4 478.7Z'/><path d='M1185.8 488.0 L1187.6 490.1 L1187.0 491.5 L1185.9 491.7 L1185.7 489.6 L1185.8 488.0Z'/><path d='M1200.6 492.1 L1202.7 492.5 L1205.4 495.4 L1208.8 498.5 L1210.9 500.6 L1210.8 503.1 L1209.4 503.2 L1207.3 501.3 L1205.9 499.4 L1203.8 495.9 L1201.7 494.1 L1200.6 492.1Z'/><path d='M1210.1 504.1 L1210.9 503.2 L1213.1 503.6 L1215.7 503.8 L1217.3 504.1 L1219.0 504.9 L1219.0 505.8 L1214.7 505.4 L1211.4 504.6 L1210.1 504.1Z'/><path d='M1213.8 496.1 L1214.3 498.5 L1215.0 500.3 L1216.4 500.5 L1219.0 501.0 L1220.5 501.3 L1221.0 499.7 L1221.9 497.5 L1222.3 496.5 L1223.3 496.1 L1222.1 493.7 L1223.0 492.7 L1221.6 490.9 L1221.0 490.9 L1220.0 492.5 L1218.6 493.2 L1217.1 494.7 L1215.9 495.1 L1214.3 495.6 L1213.8 496.1Z'/><path d='M1223.4 498.0 L1223.9 500.9 L1224.7 502.9 L1225.3 501.3 L1227.0 502.1 L1225.6 499.4 L1227.6 498.5 L1225.3 498.3 L1224.8 497.0 L1228.9 496.3 L1228.7 497.1 L1224.3 496.8 L1223.4 498.0Z'/><path d='M1234.9 498.7 L1237.8 498.4 L1239.7 499.4 L1241.6 499.1 L1244.5 500.0 L1246.9 500.9 L1249.1 502.3 L1250.8 503.5 L1251.1 505.0 L1252.0 506.2 L1253.9 507.5 L1252.9 507.6 L1250.3 507.3 L1249.2 505.2 L1247.4 504.8 L1246.7 506.2 L1244.5 506.3 L1242.6 505.3 L1241.4 502.7 L1238.9 501.7 L1236.8 501.4 L1235.9 500.2 L1237.3 499.6 L1235.8 499.0 L1234.9 498.7Z'/><path d='M1224.9 479.4 L1226.4 479.4 L1226.7 480.9 L1225.9 482.1 L1228.2 483.9 L1228.0 484.9 L1226.4 484.1 L1224.9 483.6 L1224.3 481.9 L1224.9 479.4Z'/><path d='M1226.3 490.8 L1227.7 490.0 L1229.6 488.0 L1230.7 490.5 L1229.6 492.1 L1228.2 491.2 L1226.3 490.8Z'/><path d='M1217.9 519.4 L1218.1 522.9 L1218.8 523.9 L1219.5 527.2 L1219.5 531.7 L1220.0 532.9 L1222.4 533.5 L1224.3 532.3 L1227.7 532.2 L1230.1 530.3 L1233.0 529.7 L1235.1 529.4 L1237.3 530.2 L1238.8 533.0 L1239.7 532.5 L1241.4 530.9 L1241.2 534.2 L1243.1 534.3 L1243.6 536.4 L1245.2 537.4 L1247.4 537.4 L1249.6 538.3 L1251.2 536.8 L1253.2 536.4 L1253.6 534.0 L1254.6 531.7 L1256.0 528.9 L1256.6 526.3 L1256.2 522.9 L1254.9 521.8 L1253.9 519.7 L1252.7 518.7 L1252.0 517.4 L1250.3 516.3 L1249.5 515.3 L1248.8 513.1 L1248.6 512.1 L1247.9 511.3 L1247.0 510.9 L1246.9 509.1 L1246.0 507.8 L1245.2 509.6 L1245.0 511.6 L1244.8 513.6 L1244.1 514.7 L1242.9 514.4 L1241.4 513.4 L1239.5 512.1 L1240.5 510.6 L1240.5 509.3 L1239.2 509.1 L1237.8 509.0 L1236.3 508.5 L1235.2 509.3 L1234.1 510.3 L1233.6 512.0 L1232.0 512.0 L1231.1 510.9 L1229.9 511.6 L1228.6 513.4 L1227.7 514.4 L1226.4 515.1 L1225.5 516.6 L1223.4 517.2 L1221.2 517.7 L1219.3 518.7 L1217.9 519.4Z'/><path d='M1248.1 540.4 L1249.8 540.9 L1251.5 540.6 L1251.4 542.3 L1250.6 543.8 L1249.1 543.9 L1248.2 541.9 L1248.1 540.4Z'/><path d='M1275.0 532.9 L1276.5 533.8 L1278.0 535.8 L1280.6 536.7 L1280.0 538.5 L1278.9 539.5 L1277.4 541.5 L1276.8 541.2 L1277.2 539.3 L1276.0 538.6 L1276.8 537.3 L1276.7 535.3 L1275.0 532.9Z'/><path d='M1275.0 540.1 L1276.5 541.2 L1276.0 542.4 L1275.1 544.2 L1273.5 545.4 L1273.0 547.1 L1271.7 548.2 L1269.0 547.5 L1269.3 546.4 L1270.8 544.7 L1273.2 543.0 L1274.4 540.8 L1275.0 540.1Z'/><path d='M1156.4 509.1 L1157.4 512.4 L1156.9 514.1 L1155.8 517.1 L1154.3 522.2 L1152.4 522.9 L1151.3 521.3 L1150.6 519.0 L1151.7 516.6 L1151.3 514.4 L1151.8 513.3 L1153.5 512.8 L1155.0 511.1 L1156.4 509.1Z'/><path d='M1052.0 445.3 L1055.2 443.3 L1055.7 439.6 L1057.8 443.3 L1058.3 445.5 L1057.6 446.6 L1055.2 445.5 L1052.0 445.3Z'/><path d='M1027.3 475.9 L1030.2 475.1 L1032.6 474.9 L1035.0 476.3 L1037.7 477.7 L1034.5 478.0 L1032.6 476.3 L1029.2 476.1 L1027.3 475.9Z'/><path d='M1037.4 478.1 L1040.3 478.0 L1043.3 479.3 L1040.8 479.9 L1037.5 479.6 L1037.4 478.1Z'/><path d='M1239.7 389.4 L1244.5 390.8 L1249.3 385.8 L1245.5 382.0 L1240.7 383.6 L1239.7 389.4Z'/><path d='M1280.6 399.1 L1282.8 398.2 L1283.9 397.0 L1281.0 397.3 L1280.6 399.1Z'/></g><clipPath id='land936'><path d='M947.5 413.2 L949.5 406.5 L952.3 403.3 L958.6 398.2 L964.8 400.5 L973.5 402.8 L979.2 403.9 L986.0 401.4 L993.7 403.3 L999.4 406.3 L1005.2 406.5 L1014.8 407.8 L1017.7 405.2 L1022.5 405.2 L1026.3 402.5 L1030.7 404.1 L1030.2 410.8 L1026.3 411.8 L1024.9 416.1 L1021.8 417.6 L1018.7 423.0 L1018.2 427.2 L1020.1 430.5 L1023.9 431.4 L1027.3 433.4 L1029.9 437.2 L1032.1 439.9 L1033.1 434.8 L1035.0 429.6 L1034.5 424.0 L1034.0 420.4 L1038.4 420.4 L1041.7 423.0 L1044.1 427.8 L1047.0 424.4 L1049.4 429.6 L1050.9 433.1 L1054.2 436.4 L1055.5 438.8 L1052.3 441.4 L1047.0 441.8 L1045.1 443.0 L1047.0 443.6 L1046.7 446.2 L1050.4 448.3 L1046.0 450.8 L1044.6 449.2 L1041.5 450.8 L1041.2 453.3 L1037.9 454.7 L1037.6 456.4 L1036.0 458.0 L1035.7 459.3 L1036.3 461.3 L1034.5 462.4 L1031.3 465.0 L1030.9 467.3 L1032.1 470.7 L1031.6 472.5 L1030.4 471.6 L1029.4 468.9 L1028.3 467.1 L1025.9 466.8 L1023.2 467.0 L1022.5 468.1 L1018.7 467.7 L1015.6 469.7 L1015.3 472.7 L1015.1 475.8 L1016.4 478.6 L1018.2 479.7 L1021.5 479.2 L1022.0 476.8 L1025.2 476.3 L1024.8 479.4 L1024.1 481.9 L1027.8 482.0 L1028.9 483.1 L1028.6 486.9 L1030.7 488.9 L1032.6 488.3 L1034.3 489.2 L1034.5 490.3 L1032.8 490.3 L1031.7 490.5 L1030.4 489.6 L1026.6 487.4 L1025.8 485.6 L1024.9 484.9 L1021.2 484.0 L1018.7 481.9 L1016.3 482.2 L1011.9 480.6 L1007.6 477.9 L1007.6 475.3 L1004.9 472.4 L1002.5 469.7 L1000.6 466.9 L998.8 465.3 L999.9 468.4 L1001.4 470.5 L1003.3 474.1 L1003.1 474.8 L1001.2 472.9 L999.2 469.4 L998.7 467.3 L997.0 465.2 L996.4 464.2 L995.1 462.6 L993.1 462.0 L991.8 459.8 L990.8 458.0 L990.0 455.7 L989.4 452.3 L989.8 447.3 L989.1 444.3 L990.8 443.6 L988.9 441.8 L986.2 440.6 L983.9 435.1 L981.2 430.5 L978.3 427.6 L974.9 425.6 L970.6 425.0 L968.2 423.0 L965.3 425.6 L963.1 426.5 L961.5 430.5 L958.6 431.9 L955.2 433.4 L951.9 434.4 L953.6 432.8 L957.6 427.8 L955.7 427.4 L953.3 425.2 L950.7 423.4 L949.9 420.4 L951.7 418.5 L954.3 415.7 L949.2 415.4 L947.5 413.2Z'/><path d='M1034.3 489.2 L1036.0 488.3 L1036.6 487.1 L1038.8 486.6 L1040.3 485.5 L1040.5 486.9 L1041.9 486.4 L1043.6 487.4 L1047.5 487.3 L1049.6 487.2 L1050.9 489.1 L1052.8 490.8 L1054.2 491.7 L1057.1 491.9 L1059.3 493.2 L1060.5 495.8 L1060.9 497.5 L1062.6 498.5 L1066.2 499.7 L1069.1 500.3 L1072.0 501.1 L1075.2 502.7 L1075.6 504.7 L1074.9 506.7 L1073.0 508.9 L1071.6 510.4 L1071.3 514.6 L1070.6 517.1 L1068.8 519.7 L1066.7 520.2 L1064.3 521.3 L1062.4 523.2 L1062.2 525.9 L1060.9 528.3 L1058.5 531.7 L1057.1 533.1 L1054.7 533.2 L1053.1 532.5 L1054.0 534.6 L1053.7 537.3 L1049.2 538.1 L1049.1 540.4 L1046.5 540.8 L1047.0 542.7 L1046.0 546.0 L1044.1 547.8 L1045.8 549.9 L1043.2 553.5 L1042.7 556.2 L1043.4 558.1 L1045.1 561.1 L1042.2 561.9 L1039.3 559.4 L1037.3 556.5 L1036.5 550.9 L1037.6 547.1 L1038.4 542.1 L1038.3 537.0 L1039.3 533.5 L1040.3 527.7 L1040.5 523.4 L1041.3 520.2 L1041.5 515.4 L1040.3 514.4 L1036.9 512.6 L1035.7 510.6 L1034.3 508.1 L1032.6 504.7 L1031.0 502.8 L1031.6 500.9 L1032.1 499.6 L1031.3 498.5 L1032.1 496.5 L1033.1 495.9 L1034.5 494.1 L1034.5 491.2 L1034.3 489.2Z'/><path d='M1092.6 476.8 L1093.6 473.9 L1095.1 471.6 L1096.5 469.7 L1099.4 467.8 L1099.7 465.6 L1100.8 463.5 L1102.5 462.4 L1103.3 460.6 L1106.9 461.4 L1110.0 459.8 L1112.8 459.3 L1117.2 459.3 L1118.8 458.9 L1119.7 459.4 L1119.1 461.0 L1119.6 462.0 L1118.7 462.8 L1120.1 463.8 L1123.6 464.7 L1124.2 465.8 L1127.3 466.9 L1128.3 466.1 L1128.2 464.8 L1130.6 464.1 L1133.0 465.1 L1136.9 466.2 L1139.8 465.9 L1141.9 465.8 L1142.2 468.9 L1141.0 469.2 L1140.1 467.4 L1140.3 467.9 L1143.1 473.7 L1144.6 476.3 L1146.0 479.9 L1147.2 482.4 L1148.9 484.1 L1150.5 485.4 L1151.3 486.4 L1158.2 486.0 L1158.0 487.4 L1157.1 489.8 L1155.1 493.2 L1153.2 495.4 L1150.8 498.0 L1148.9 499.2 L1147.4 500.9 L1146.5 502.8 L1147.0 505.2 L1147.4 507.6 L1147.9 511.6 L1147.0 513.6 L1144.6 515.1 L1142.6 517.6 L1143.1 520.7 L1140.5 523.3 L1140.2 526.1 L1138.3 528.9 L1135.9 530.9 L1133.6 532.3 L1130.6 532.3 L1128.2 533.2 L1126.8 532.4 L1126.5 530.0 L1125.6 528.3 L1123.7 524.5 L1122.9 520.2 L1121.8 517.6 L1120.3 514.4 L1120.8 511.6 L1122.2 508.1 L1121.5 505.7 L1120.7 503.3 L1119.6 501.2 L1117.7 498.5 L1118.4 496.5 L1118.1 493.8 L1117.2 493.1 L1114.8 493.4 L1113.3 491.4 L1110.4 491.5 L1107.1 492.9 L1104.7 492.5 L1101.8 493.3 L1099.9 492.2 L1097.9 490.9 L1096.2 489.3 L1094.9 487.3 L1093.1 485.6 L1092.2 483.2 L1093.1 481.7 L1093.4 478.6 L1092.6 476.8Z'/><path d='M1099.9 459.2 L1100.5 457.0 L1100.0 455.2 L1100.5 452.9 L1100.1 451.6 L1101.3 450.7 L1104.2 451.0 L1107.6 451.1 L1107.8 448.7 L1107.6 446.9 L1106.1 445.5 L1104.5 444.8 L1104.7 443.8 L1107.4 443.8 L1107.8 442.3 L1110.4 441.5 L1111.4 440.2 L1112.8 439.6 L1113.5 437.4 L1115.2 436.6 L1117.2 436.1 L1117.3 433.1 L1116.9 430.9 L1118.9 429.4 L1119.2 431.7 L1118.9 433.8 L1120.5 435.1 L1122.5 435.8 L1125.3 434.4 L1127.7 434.9 L1129.4 433.6 L1129.2 430.9 L1130.6 429.4 L1132.4 430.1 L1131.7 427.8 L1131.6 426.3 L1135.9 425.9 L1138.0 425.2 L1136.9 424.4 L1134.5 424.2 L1131.0 425.2 L1129.6 423.6 L1129.4 420.0 L1130.9 417.2 L1133.3 414.5 L1133.2 412.9 L1130.4 412.7 L1129.2 415.7 L1127.3 418.3 L1125.8 420.4 L1125.4 423.0 L1127.1 425.0 L1126.9 426.5 L1124.9 429.3 L1124.4 431.9 L1122.6 433.3 L1121.3 433.1 L1121.0 430.9 L1120.3 428.7 L1119.6 426.9 L1119.1 425.6 L1117.7 427.1 L1116.7 428.5 L1115.2 428.3 L1114.3 426.9 L1114.0 424.0 L1113.8 421.4 L1115.2 419.4 L1117.2 417.9 L1119.1 415.7 L1120.8 412.7 L1121.8 408.6 L1123.8 406.0 L1125.3 404.1 L1127.7 401.7 L1130.1 400.5 L1133.5 398.8 L1136.9 399.6 L1138.8 401.9 L1140.7 403.6 L1144.1 404.7 L1148.4 408.1 L1148.7 411.3 L1145.5 412.2 L1142.4 413.2 L1142.2 415.7 L1144.6 417.2 L1147.0 415.7 L1148.9 412.7 L1151.3 411.8 L1151.6 407.3 L1153.7 407.8 L1156.1 406.8 L1160.4 405.7 L1164.3 406.0 L1167.1 402.5 L1171.0 403.9 L1174.4 406.0 L1173.7 400.5 L1173.2 397.3 L1175.3 392.8 L1177.7 393.5 L1179.0 395.4 L1178.7 399.1 L1179.6 406.0 L1182.0 404.7 L1181.6 398.5 L1184.4 395.1 L1186.4 391.2 L1192.6 388.4 L1192.3 385.8 L1197.4 383.6 L1203.2 381.6 L1209.0 374.8 L1211.8 378.7 L1215.7 380.4 L1218.1 383.6 L1217.9 390.8 L1222.9 391.2 L1228.2 390.8 L1232.5 393.5 L1233.5 398.5 L1235.9 397.0 L1238.8 397.3 L1242.6 394.8 L1244.5 393.5 L1249.3 395.1 L1253.6 397.6 L1256.0 399.3 L1260.9 399.3 L1263.3 401.9 L1267.6 403.0 L1272.4 401.7 L1277.2 402.5 L1282.0 405.2 L1285.8 409.1 L1288.7 410.1 L1291.6 412.2 L1287.8 415.7 L1284.4 415.0 L1283.0 413.9 L1280.6 416.8 L1281.0 420.2 L1278.6 420.0 L1275.8 421.4 L1272.7 425.0 L1268.5 424.4 L1267.4 425.4 L1266.1 426.5 L1264.7 428.7 L1265.9 431.9 L1264.7 434.3 L1262.8 437.2 L1261.3 437.7 L1259.6 440.2 L1258.9 436.4 L1258.7 431.4 L1259.7 429.1 L1261.3 428.7 L1263.3 425.9 L1266.1 421.4 L1262.8 421.8 L1258.9 422.4 L1255.6 426.5 L1250.8 426.3 L1246.4 426.3 L1244.0 428.2 L1240.7 433.1 L1239.2 434.8 L1241.8 435.9 L1244.7 437.7 L1244.8 441.8 L1244.0 444.1 L1242.1 446.2 L1239.4 450.8 L1236.8 451.9 L1234.6 452.6 L1233.7 454.5 L1232.5 457.6 L1233.4 461.0 L1231.4 462.0 L1230.4 462.1 L1230.6 459.8 L1230.1 458.3 L1228.9 457.4 L1229.3 456.1 L1228.5 455.5 L1225.8 456.9 L1225.8 455.2 L1226.4 454.9 L1225.3 454.5 L1223.4 456.5 L1222.4 456.5 L1221.9 457.5 L1223.1 458.7 L1223.9 459.1 L1225.1 458.2 L1226.7 458.7 L1225.3 459.8 L1223.9 461.5 L1224.6 462.4 L1225.6 464.4 L1226.2 466.1 L1226.1 467.8 L1225.8 469.1 L1224.0 471.9 L1222.9 473.2 L1221.0 474.9 L1218.8 475.5 L1216.2 476.3 L1215.2 477.4 L1214.5 476.3 L1213.1 476.2 L1211.6 477.4 L1210.6 478.9 L1211.4 480.4 L1212.8 481.9 L1214.0 484.4 L1214.0 486.4 L1212.3 487.4 L1211.4 488.3 L1209.9 489.2 L1209.9 487.8 L1209.3 487.4 L1208.0 486.9 L1207.5 485.7 L1206.1 485.2 L1205.1 484.4 L1204.3 487.4 L1204.6 488.6 L1205.4 489.8 L1205.6 491.2 L1206.6 491.9 L1208.4 493.1 L1208.4 494.6 L1209.1 496.2 L1208.5 496.3 L1206.4 494.8 L1205.4 492.7 L1205.1 491.3 L1203.5 489.5 L1203.9 487.4 L1203.7 484.9 L1202.9 481.9 L1202.4 481.0 L1200.7 482.2 L1199.6 481.9 L1199.9 479.9 L1199.0 478.2 L1197.8 477.2 L1197.4 476.0 L1196.1 475.2 L1194.5 475.9 L1192.6 476.8 L1192.4 477.9 L1190.7 478.6 L1188.1 480.9 L1186.2 482.4 L1186.1 484.1 L1186.0 486.4 L1185.8 487.5 L1184.4 488.8 L1183.5 489.8 L1182.5 488.9 L1181.8 486.6 L1180.9 485.2 L1180.1 482.9 L1179.4 480.4 L1179.1 478.1 L1179.0 476.8 L1178.7 476.4 L1178.5 475.6 L1177.0 477.1 L1175.3 475.5 L1176.5 474.9 L1175.0 474.5 L1173.9 473.8 L1173.2 472.4 L1171.0 472.5 L1168.1 472.6 L1165.2 472.0 L1164.1 471.7 L1163.7 470.5 L1161.6 471.1 L1160.4 470.7 L1159.0 469.7 L1157.8 468.6 L1157.2 467.1 L1156.0 466.9 L1155.1 467.4 L1155.5 468.9 L1156.4 470.0 L1157.2 471.0 L1157.8 472.7 L1158.6 472.5 L1158.6 473.5 L1160.4 473.6 L1162.3 472.1 L1163.1 471.4 L1163.3 473.2 L1164.2 473.9 L1165.5 474.3 L1166.5 475.3 L1165.2 477.4 L1164.6 478.4 L1163.6 479.3 L1162.1 480.2 L1159.2 482.0 L1156.1 483.4 L1152.7 484.8 L1150.8 485.2 L1150.1 483.4 L1149.9 481.4 L1148.9 479.9 L1147.4 477.9 L1146.6 476.3 L1146.0 474.3 L1144.8 472.7 L1143.6 470.5 L1142.4 469.3 L1142.0 465.8 L1142.2 465.3 L1142.8 463.9 L1143.4 462.1 L1143.4 460.6 L1143.8 459.5 L1142.2 459.4 L1140.2 460.3 L1138.3 459.8 L1136.9 459.5 L1135.3 458.9 L1135.1 457.5 L1134.3 456.5 L1134.3 455.4 L1135.4 454.9 L1136.9 454.1 L1139.0 454.1 L1141.2 452.9 L1142.8 452.9 L1145.8 454.4 L1148.9 453.6 L1149.0 452.0 L1147.4 451.1 L1146.0 449.9 L1144.6 448.7 L1145.7 447.2 L1146.7 446.1 L1144.9 446.2 L1142.6 447.6 L1143.1 448.6 L1141.7 449.6 L1140.2 448.6 L1141.2 447.7 L1139.3 446.8 L1137.8 448.0 L1137.4 448.8 L1136.6 450.2 L1135.9 451.4 L1135.7 452.8 L1135.9 453.7 L1134.5 454.7 L1133.5 454.5 L1132.1 454.9 L1130.9 455.1 L1131.6 456.7 L1130.6 458.1 L1131.1 459.8 L1129.9 459.4 L1129.2 457.6 L1128.5 456.0 L1127.7 454.2 L1127.6 452.9 L1126.8 452.3 L1124.4 451.0 L1123.4 449.5 L1122.5 448.7 L1122.1 447.9 L1120.8 448.6 L1120.9 450.0 L1122.1 451.0 L1123.2 452.8 L1124.6 453.2 L1126.3 454.6 L1126.8 455.4 L1126.1 455.1 L1124.9 456.1 L1125.4 456.9 L1124.4 458.1 L1124.1 457.4 L1124.6 456.4 L1123.9 455.4 L1122.9 454.6 L1122.0 453.8 L1120.3 452.7 L1119.2 451.8 L1118.8 450.4 L1117.5 449.8 L1116.2 450.6 L1115.2 451.5 L1113.4 451.1 L1112.0 451.5 L1112.1 452.9 L1110.9 454.0 L1109.8 454.6 L1109.0 456.2 L1108.5 457.6 L1107.8 458.6 L1106.9 459.5 L1104.8 459.5 L1103.8 460.4 L1102.9 459.4 L1101.8 458.9 L1100.4 459.2 L1099.9 459.2Z'/><path d='M1103.5 441.7 L1106.1 440.8 L1109.0 440.6 L1110.3 440.0 L1110.6 437.7 L1109.3 436.6 L1108.7 434.8 L1107.5 432.9 L1106.9 431.7 L1107.3 429.4 L1105.8 427.6 L1104.2 427.6 L1103.5 430.0 L1103.0 431.7 L1104.0 433.4 L1104.4 434.4 L1105.7 434.3 L1106.1 435.8 L1104.6 436.7 L1104.0 439.1 L1105.9 439.7 L1104.7 440.6 L1103.5 441.7Z'/><path d='M1103.2 438.5 L1103.2 436.7 L1103.0 435.3 L1103.5 434.4 L1102.6 433.6 L1101.0 433.6 L1099.4 435.3 L1099.5 436.7 L1099.1 439.3 L1101.1 439.4 L1103.2 438.5Z'/><path d='M1085.6 413.4 L1087.6 411.3 L1091.2 411.8 L1094.6 411.0 L1096.0 413.9 L1095.1 415.9 L1091.2 418.1 L1087.4 417.2 L1088.0 415.7 L1085.6 413.4Z'/><path d='M1233.7 463.8 L1234.1 465.8 L1235.1 465.7 L1235.9 463.6 L1235.5 462.7 L1236.8 462.7 L1237.8 463.3 L1238.9 462.9 L1240.5 462.4 L1242.4 461.9 L1243.6 461.4 L1244.3 460.4 L1244.5 457.6 L1245.5 456.1 L1245.0 453.7 L1244.0 454.9 L1243.6 455.9 L1243.5 458.0 L1242.1 458.8 L1240.5 458.9 L1239.7 460.7 L1237.0 461.0 L1234.9 462.1 L1233.7 463.8Z'/><path d='M1243.6 453.6 L1244.7 453.2 L1246.7 452.9 L1248.8 451.4 L1247.9 450.3 L1245.5 448.4 L1244.8 449.8 L1245.0 451.2 L1243.8 451.4 L1243.6 453.6Z'/><path d='M1245.5 447.6 L1246.9 446.5 L1246.6 443.3 L1248.0 443.3 L1246.4 439.6 L1246.7 436.4 L1246.1 435.1 L1245.3 437.2 L1245.5 441.1 L1245.5 447.6Z'/><path d='M1224.5 474.8 L1225.1 475.8 L1226.2 472.9 L1225.8 472.4 L1224.5 474.8Z'/><path d='M1213.4 478.7 L1215.2 477.8 L1215.7 478.3 L1214.2 479.7 L1213.4 478.7Z'/><path d='M1185.8 488.0 L1187.6 490.1 L1187.0 491.5 L1185.9 491.7 L1185.7 489.6 L1185.8 488.0Z'/><path d='M1200.6 492.1 L1202.7 492.5 L1205.4 495.4 L1208.8 498.5 L1210.9 500.6 L1210.8 503.1 L1209.4 503.2 L1207.3 501.3 L1205.9 499.4 L1203.8 495.9 L1201.7 494.1 L1200.6 492.1Z'/><path d='M1210.1 504.1 L1210.9 503.2 L1213.1 503.6 L1215.7 503.8 L1217.3 504.1 L1219.0 504.9 L1219.0 505.8 L1214.7 505.4 L1211.4 504.6 L1210.1 504.1Z'/><path d='M1213.8 496.1 L1214.3 498.5 L1215.0 500.3 L1216.4 500.5 L1219.0 501.0 L1220.5 501.3 L1221.0 499.7 L1221.9 497.5 L1222.3 496.5 L1223.3 496.1 L1222.1 493.7 L1223.0 492.7 L1221.6 490.9 L1221.0 490.9 L1220.0 492.5 L1218.6 493.2 L1217.1 494.7 L1215.9 495.1 L1214.3 495.6 L1213.8 496.1Z'/><path d='M1223.4 498.0 L1223.9 500.9 L1224.7 502.9 L1225.3 501.3 L1227.0 502.1 L1225.6 499.4 L1227.6 498.5 L1225.3 498.3 L1224.8 497.0 L1228.9 496.3 L1228.7 497.1 L1224.3 496.8 L1223.4 498.0Z'/><path d='M1234.9 498.7 L1237.8 498.4 L1239.7 499.4 L1241.6 499.1 L1244.5 500.0 L1246.9 500.9 L1249.1 502.3 L1250.8 503.5 L1251.1 505.0 L1252.0 506.2 L1253.9 507.5 L1252.9 507.6 L1250.3 507.3 L1249.2 505.2 L1247.4 504.8 L1246.7 506.2 L1244.5 506.3 L1242.6 505.3 L1241.4 502.7 L1238.9 501.7 L1236.8 501.4 L1235.9 500.2 L1237.3 499.6 L1235.8 499.0 L1234.9 498.7Z'/><path d='M1224.9 479.4 L1226.4 479.4 L1226.7 480.9 L1225.9 482.1 L1228.2 483.9 L1228.0 484.9 L1226.4 484.1 L1224.9 483.6 L1224.3 481.9 L1224.9 479.4Z'/><path d='M1226.3 490.8 L1227.7 490.0 L1229.6 488.0 L1230.7 490.5 L1229.6 492.1 L1228.2 491.2 L1226.3 490.8Z'/><path d='M1217.9 519.4 L1218.1 522.9 L1218.8 523.9 L1219.5 527.2 L1219.5 531.7 L1220.0 532.9 L1222.4 533.5 L1224.3 532.3 L1227.7 532.2 L1230.1 530.3 L1233.0 529.7 L1235.1 529.4 L1237.3 530.2 L1238.8 533.0 L1239.7 532.5 L1241.4 530.9 L1241.2 534.2 L1243.1 534.3 L1243.6 536.4 L1245.2 537.4 L1247.4 537.4 L1249.6 538.3 L1251.2 536.8 L1253.2 536.4 L1253.6 534.0 L1254.6 531.7 L1256.0 528.9 L1256.6 526.3 L1256.2 522.9 L1254.9 521.8 L1253.9 519.7 L1252.7 518.7 L1252.0 517.4 L1250.3 516.3 L1249.5 515.3 L1248.8 513.1 L1248.6 512.1 L1247.9 511.3 L1247.0 510.9 L1246.9 509.1 L1246.0 507.8 L1245.2 509.6 L1245.0 511.6 L1244.8 513.6 L1244.1 514.7 L1242.9 514.4 L1241.4 513.4 L1239.5 512.1 L1240.5 510.6 L1240.5 509.3 L1239.2 509.1 L1237.8 509.0 L1236.3 508.5 L1235.2 509.3 L1234.1 510.3 L1233.6 512.0 L1232.0 512.0 L1231.1 510.9 L1229.9 511.6 L1228.6 513.4 L1227.7 514.4 L1226.4 515.1 L1225.5 516.6 L1223.4 517.2 L1221.2 517.7 L1219.3 518.7 L1217.9 519.4Z'/><path d='M1248.1 540.4 L1249.8 540.9 L1251.5 540.6 L1251.4 542.3 L1250.6 543.8 L1249.1 543.9 L1248.2 541.9 L1248.1 540.4Z'/><path d='M1275.0 532.9 L1276.5 533.8 L1278.0 535.8 L1280.6 536.7 L1280.0 538.5 L1278.9 539.5 L1277.4 541.5 L1276.8 541.2 L1277.2 539.3 L1276.0 538.6 L1276.8 537.3 L1276.7 535.3 L1275.0 532.9Z'/><path d='M1275.0 540.1 L1276.5 541.2 L1276.0 542.4 L1275.1 544.2 L1273.5 545.4 L1273.0 547.1 L1271.7 548.2 L1269.0 547.5 L1269.3 546.4 L1270.8 544.7 L1273.2 543.0 L1274.4 540.8 L1275.0 540.1Z'/><path d='M1156.4 509.1 L1157.4 512.4 L1156.9 514.1 L1155.8 517.1 L1154.3 522.2 L1152.4 522.9 L1151.3 521.3 L1150.6 519.0 L1151.7 516.6 L1151.3 514.4 L1151.8 513.3 L1153.5 512.8 L1155.0 511.1 L1156.4 509.1Z'/><path d='M1052.0 445.3 L1055.2 443.3 L1055.7 439.6 L1057.8 443.3 L1058.3 445.5 L1057.6 446.6 L1055.2 445.5 L1052.0 445.3Z'/><path d='M1027.3 475.9 L1030.2 475.1 L1032.6 474.9 L1035.0 476.3 L1037.7 477.7 L1034.5 478.0 L1032.6 476.3 L1029.2 476.1 L1027.3 475.9Z'/><path d='M1037.4 478.1 L1040.3 478.0 L1043.3 479.3 L1040.8 479.9 L1037.5 479.6 L1037.4 478.1Z'/><path d='M1239.7 389.4 L1244.5 390.8 L1249.3 385.8 L1245.5 382.0 L1240.7 383.6 L1239.7 389.4Z'/><path d='M1280.6 399.1 L1282.8 398.2 L1283.9 397.0 L1281.0 397.3 L1280.6 399.1Z'/></clipPath><g clip-path='url(#land936)'><g fill='#9fe0c3'><path d='M1036.9 497.5 L1041.7 495.6 L1049.4 493.7 L1056.1 494.6 L1060.9 497.5 L1059.0 502.3 L1055.2 506.2 L1048.5 509.1 L1041.7 509.1 L1037.9 505.2 L1036.9 497.5Z'/><path d='M1118.6 494.6 L1126.3 493.2 L1135.0 493.7 L1137.8 497.5 L1135.9 502.3 L1128.2 503.3 L1121.5 501.3 L1118.6 494.6Z'/><path d='M1135.9 429.6 L1143.6 431.4 L1152.2 430.5 L1160.9 430.5 L1168.6 429.6 L1168.6 418.9 L1164.7 413.4 L1155.1 412.2 L1145.5 414.5 L1137.8 418.9 L1135.9 429.6Z'/><path d='M1016.7 446.2 L1026.3 446.2 L1032.1 449.0 L1028.3 452.9 L1018.7 451.6 L1016.7 446.2Z'/><path d='M1205.1 477.9 L1210.9 475.8 L1213.8 479.9 L1209.9 486.9 L1205.1 483.9 L1205.1 477.9Z'/><path d='M1181.1 418.9 L1190.7 421.0 L1200.3 423.0 L1205.1 430.5 L1195.5 433.9 L1185.9 432.2 L1178.2 426.9 L1181.1 418.9Z'/><path d='M993.7 428.7 L1008.1 428.7 L1014.8 435.6 L1005.2 438.8 L995.6 435.6 L993.7 428.7Z'/></g><g fill='#f0ebdf'><path d='M1091.7 477.9 L1093.6 473.7 L1096.5 470.0 L1099.4 467.3 L1101.3 463.9 L1103.2 460.4 L1107.1 460.4 L1112.8 458.6 L1118.6 458.0 L1120.5 461.5 L1128.2 463.9 L1134.0 463.9 L1137.8 462.7 L1140.7 458.0 L1143.6 455.5 L1149.4 454.2 L1153.2 456.7 L1157.1 457.4 L1161.9 454.2 L1166.7 451.6 L1170.5 454.2 L1174.4 458.0 L1177.2 462.7 L1175.3 467.3 L1173.4 470.5 L1168.6 471.6 L1163.8 471.8 L1161.9 474.3 L1159.0 478.9 L1154.2 482.9 L1150.3 484.9 L1148.4 485.9 L1144.6 482.9 L1141.7 483.9 L1137.8 485.4 L1132.1 484.9 L1124.4 484.4 L1116.7 483.9 L1109.0 483.4 L1101.3 482.9 L1094.6 482.4 L1091.7 477.9Z'/><path d='M1151.3 447.6 L1155.1 441.8 L1161.9 438.8 L1168.6 438.0 L1176.3 438.8 L1184.0 440.3 L1190.7 443.3 L1195.5 442.6 L1201.3 444.1 L1209.0 445.5 L1216.6 446.9 L1222.4 447.6 L1225.3 450.3 L1221.5 453.6 L1215.7 454.9 L1210.9 458.0 L1206.1 459.8 L1202.2 461.5 L1197.4 463.3 L1191.7 463.9 L1185.9 462.1 L1181.1 458.6 L1176.3 457.4 L1170.5 455.5 L1164.7 454.2 L1159.9 453.6 L1157.1 451.6 L1151.3 447.6Z'/><path d='M991.7 450.3 L996.5 446.2 L1002.3 446.9 L1009.0 451.6 L1011.9 459.2 L1012.9 466.1 L1011.9 472.7 L1009.0 476.8 L1007.1 474.8 L1004.2 471.6 L1000.4 467.3 L997.5 464.4 L994.6 461.5 L992.7 456.7 L991.7 450.3Z'/><path d='M1040.8 534.6 L1045.6 535.2 L1047.5 539.5 L1046.5 546.0 L1044.1 548.8 L1043.2 554.7 L1041.7 557.0 L1039.8 553.2 L1040.3 544.7 L1040.8 534.6Z'/><path d='M1217.6 519.2 L1219.0 526.6 L1220.0 531.1 L1226.3 532.3 L1233.0 530.0 L1237.8 530.0 L1241.6 532.3 L1244.5 533.5 L1248.4 532.3 L1250.3 526.6 L1249.3 521.3 L1246.4 517.1 L1243.6 514.1 L1239.7 513.6 L1234.9 512.1 L1231.1 512.6 L1226.3 515.6 L1220.5 517.6 L1217.6 519.2Z'/><path d='M1120.1 513.1 L1125.3 514.6 L1131.1 515.1 L1135.0 518.2 L1137.8 522.3 L1136.9 527.7 L1134.0 531.1 L1126.8 532.3 L1124.4 525.6 L1122.0 518.7 L1120.1 513.1Z'/><path d='M1031.6 502.3 L1036.9 509.1 L1041.7 515.6 L1045.6 519.2 L1044.6 524.5 L1041.2 527.7 L1040.8 521.3 L1041.2 515.1 L1036.0 511.1 L1032.6 504.7 L1031.6 502.3Z'/><path d='M1143.6 483.9 L1147.4 485.9 L1151.3 486.9 L1158.0 486.1 L1156.1 491.7 L1151.3 496.5 L1147.4 498.5 L1144.6 494.6 L1143.6 489.8 L1143.6 483.9Z'/></g><g fill='#c9c9c9' opacity='0.9'><path d='M988.9 403.3 L998.5 406.3 L1014.8 407.8 L1022.5 405.2 L1030.2 404.7 L1030.2 411.0 L1026.3 413.4 L1023.5 417.9 L1018.7 424.0 L1012.9 425.0 L1003.3 421.0 L995.6 414.5 L988.9 408.6 L988.9 403.3Z'/><path d='M1143.6 404.7 L1148.4 408.1 L1146.5 410.3 L1140.7 404.1 L1143.6 404.7Z'/><path d='M1209.0 374.8 L1217.6 383.6 L1214.7 391.2 L1205.1 392.8 L1201.3 384.0 L1209.0 374.8Z'/><path d='M1232.0 394.4 L1244.5 393.5 L1256.0 399.3 L1253.2 404.7 L1238.8 401.9 L1232.0 394.4Z'/></g></g><g fill='#54cce2'><path d='M1156.3 458.4 L1157.5 459.2 L1160.7 459.3 L1160.8 457.0 L1160.0 456.2 L1159.9 454.4 L1161.6 454.2 L1159.9 452.4 L1159.6 452.2 L1158.3 451.4 L1157.3 449.9 L1158.5 449.6 L1159.9 448.6 L1160.1 446.6 L1158.2 446.2 L1156.2 447.0 L1155.6 447.9 L1154.7 449.2 L1154.7 450.8 L1155.7 453.2 L1156.7 454.7 L1156.5 456.7 L1156.3 458.4Z'/></g><g fill='#cbcbcb'><path d='M1049.6 410.5 L1048.9 413.4 L1046.5 415.7 L1046.0 418.3 L1044.1 418.9 L1041.7 419.4 L1040.0 417.9 L1038.4 415.9 L1034.5 415.7 L1034.3 413.2 L1037.9 409.3 L1037.4 406.5 L1035.0 403.3 L1032.1 400.2 L1025.4 401.4 L1023.9 399.1 L1026.3 396.0 L1029.2 391.2 L1033.1 391.2 L1035.5 393.5 L1038.8 396.6 L1041.7 400.5 L1044.1 403.3 L1045.1 407.3 L1049.4 409.8 L1049.6 410.5Z'/><path d='M995.1 397.6 L997.5 401.9 L1003.3 406.0 L1011.0 405.2 L1011.4 401.9 L1010.0 399.1 L1008.1 393.5 L1005.7 391.8 L1000.4 392.8 L996.5 395.4 L995.1 397.6Z'/><path d='M988.1 396.3 L990.8 399.1 L993.7 397.6 L996.1 393.5 L994.6 389.4 L989.3 388.4 L988.1 396.3Z'/><path d='M1031.6 387.7 L1026.3 387.7 L1020.6 386.6 L1021.5 382.0 L1025.4 380.0 L1031.2 380.8 L1031.6 387.7Z'/><path d='M1022.0 394.4 L1017.7 396.0 L1016.3 391.2 L1020.6 389.1 L1022.0 394.4Z'/><path d='M1014.3 397.6 L1011.0 394.4 L1011.9 391.2 L1015.3 391.2 L1016.3 395.1 L1014.3 397.6Z'/><path d='M1008.1 385.8 L1003.3 387.7 L997.0 386.6 L996.5 381.2 L1003.3 379.2 L1007.6 382.0 L1008.1 385.8Z'/><path d='M1014.8 385.8 L1009.0 384.0 L1010.5 380.8 L1015.3 380.0 L1014.8 385.8Z'/><path d='M1029.2 418.5 L1025.9 417.2 L1026.8 413.4 L1030.7 415.7 L1029.2 418.5Z'/></g><g fill='#ececec'><path d='M1017.0 359.3 L1021.5 353.7 L1033.0 345.2 L1042.6 342.8 L1049.6 348.9 L1047.1 354.4 L1040.7 362.2 L1034.3 368.1 L1033.0 380.0 L1025.4 378.7 L1026.6 371.1 L1020.2 368.1 L1017.0 359.3Z'/><path d='M1119.6 369.6 L1122.0 375.7 L1124.9 380.0 L1126.8 376.6 L1130.1 371.1 L1135.0 364.4 L1130.1 360.5 L1125.3 362.8 L1120.1 365.0 L1119.6 369.6Z'/><path d='M1159.0 398.5 L1159.9 400.5 L1162.8 399.6 L1164.3 395.1 L1165.2 390.5 L1168.6 385.1 L1174.8 379.6 L1172.4 377.5 L1166.7 380.0 L1162.8 386.6 L1162.3 392.8 L1159.0 398.5Z'/><path d='M1200.3 368.6 L1203.2 373.4 L1208.5 368.6 L1205.1 359.9 L1199.8 360.5 L1200.3 368.6Z'/><path d='M1154.2 360.5 L1159.0 363.3 L1168.6 359.9 L1164.7 353.7 L1155.1 357.5 L1154.2 360.5Z'/></g><path d='M1040.7 372.0 L1045.8 362.2 L1052.2 348.9 L1061.1 346.7 L1065.0 342.8 L1071.4 338.7 L1081.6 339.5 L1087.4 345.2 L1085.5 351.0 L1097.6 353.0 L1091.8 359.3 L1089.3 367.1 L1090.0 378.7 L1088.6 388.7 L1086.7 399.1 L1081.6 404.1 L1073.9 413.2 L1066.2 423.4 L1061.1 417.0 L1059.2 408.1 L1057.3 397.9 L1054.1 385.1 L1049.0 381.2 L1042.6 379.2 L1040.7 372.0Z' fill='#ffffff'/><path d='M936.0 670.5 L936.0 623.4 L947.5 624.4 L957.1 623.0 L962.9 619.3 L968.7 613.0 L976.4 609.2 L984.1 606.6 L993.7 604.2 L1003.3 606.3 L1011.0 599.9 L1017.7 601.5 L1024.4 602.8 L1032.1 603.8 L1036.9 600.6 L1041.7 594.5 L1044.1 585.2 L1048.0 580.5 L1054.2 576.7 L1052.3 580.5 L1049.9 586.4 L1050.4 594.5 L1049.4 603.8 L1049.9 611.0 L1056.1 617.1 L1063.8 621.6 L1072.5 621.6 L1077.3 617.1 L1082.1 613.0 L1086.9 605.6 L1091.7 602.2 L1097.5 599.0 L1104.2 596.8 L1110.9 594.5 L1118.6 593.1 L1125.3 593.9 L1133.0 594.5 L1139.8 592.5 L1147.4 590.3 L1155.1 585.9 L1161.9 582.8 L1168.6 585.2 L1175.3 587.2 L1178.2 592.5 L1181.1 591.7 L1185.9 587.7 L1193.6 584.5 L1200.3 584.0 L1207.0 582.3 L1214.7 583.5 L1220.5 585.2 L1228.2 584.0 L1238.8 583.2 L1245.5 585.2 L1253.2 588.5 L1262.8 591.7 L1269.5 595.4 L1273.3 600.6 L1271.4 607.3 L1267.6 613.0 L1266.6 620.2 L1269.5 623.0 L1277.2 623.9 L1282.0 623.4 L1282.0 670.5Z' fill='#faf9f7'/><g fill='#bbebd8'><path d='M1293.5 413.2 L1295.5 406.5 L1298.3 403.3 L1304.6 398.2 L1310.8 400.5 L1319.5 402.8 L1325.2 403.9 L1332.0 401.4 L1339.7 403.3 L1345.4 406.3 L1351.2 406.5 L1360.8 407.8 L1363.7 405.2 L1368.5 405.2 L1372.3 402.5 L1376.7 404.1 L1376.2 410.8 L1372.3 411.8 L1370.9 416.1 L1367.8 417.6 L1364.7 423.0 L1364.2 427.2 L1366.1 430.5 L1369.9 431.4 L1373.3 433.4 L1375.9 437.2 L1378.1 439.9 L1379.1 434.8 L1381.0 429.6 L1380.5 424.0 L1380.0 420.4 L1384.4 420.4 L1387.7 423.0 L1390.1 427.8 L1393.0 424.4 L1395.4 429.6 L1396.9 433.1 L1400.2 436.4 L1401.5 438.8 L1398.3 441.4 L1393.0 441.8 L1391.1 443.0 L1393.0 443.6 L1392.7 446.2 L1396.4 448.3 L1392.0 450.8 L1390.6 449.2 L1387.5 450.8 L1387.2 453.3 L1383.9 454.7 L1383.6 456.4 L1382.0 458.0 L1381.7 459.3 L1382.3 461.3 L1380.5 462.4 L1377.3 465.0 L1376.9 467.3 L1378.1 470.7 L1377.6 472.5 L1376.4 471.6 L1375.4 468.9 L1374.3 467.1 L1371.9 466.8 L1369.2 467.0 L1368.5 468.1 L1364.7 467.7 L1361.6 469.7 L1361.3 472.7 L1361.1 475.8 L1362.4 478.6 L1364.2 479.7 L1367.5 479.2 L1368.0 476.8 L1371.2 476.3 L1370.8 479.4 L1370.1 481.9 L1373.8 482.0 L1374.9 483.1 L1374.6 486.9 L1376.7 488.9 L1378.6 488.3 L1380.3 489.2 L1380.5 490.3 L1378.8 490.3 L1377.7 490.5 L1376.4 489.6 L1372.6 487.4 L1371.8 485.6 L1370.9 484.9 L1367.2 484.0 L1364.7 481.9 L1362.3 482.2 L1357.9 480.6 L1353.6 477.9 L1353.6 475.3 L1350.9 472.4 L1348.5 469.7 L1346.6 466.9 L1344.8 465.3 L1345.9 468.4 L1347.4 470.5 L1349.3 474.1 L1349.1 474.8 L1347.2 472.9 L1345.2 469.4 L1344.7 467.3 L1343.0 465.2 L1342.4 464.2 L1341.1 462.6 L1339.1 462.0 L1337.8 459.8 L1336.8 458.0 L1336.0 455.7 L1335.4 452.3 L1335.8 447.3 L1335.1 444.3 L1336.8 443.6 L1334.9 441.8 L1332.2 440.6 L1329.9 435.1 L1327.2 430.5 L1324.3 427.6 L1320.9 425.6 L1316.6 425.0 L1314.2 423.0 L1311.3 425.6 L1309.1 426.5 L1307.5 430.5 L1304.6 431.9 L1301.2 433.4 L1297.9 434.4 L1299.6 432.8 L1303.6 427.8 L1301.7 427.4 L1299.3 425.2 L1296.7 423.4 L1295.9 420.4 L1297.7 418.5 L1300.3 415.7 L1295.2 415.4 L1293.5 413.2Z'/><path d='M1380.3 489.2 L1382.0 488.3 L1382.6 487.1 L1384.8 486.6 L1386.3 485.5 L1386.5 486.9 L1387.9 486.4 L1389.6 487.4 L1393.5 487.3 L1395.6 487.2 L1396.9 489.1 L1398.8 490.8 L1400.2 491.7 L1403.1 491.9 L1405.3 493.2 L1406.5 495.8 L1406.9 497.5 L1408.6 498.5 L1412.2 499.7 L1415.1 500.3 L1418.0 501.1 L1421.2 502.7 L1421.6 504.7 L1420.9 506.7 L1419.0 508.9 L1417.6 510.4 L1417.3 514.6 L1416.6 517.1 L1414.8 519.7 L1412.7 520.2 L1410.3 521.3 L1408.4 523.2 L1408.2 525.9 L1406.9 528.3 L1404.5 531.7 L1403.1 533.1 L1400.7 533.2 L1399.1 532.5 L1400.0 534.6 L1399.7 537.3 L1395.2 538.1 L1395.1 540.4 L1392.5 540.8 L1393.0 542.7 L1392.0 546.0 L1390.1 547.8 L1391.8 549.9 L1389.2 553.5 L1388.7 556.2 L1389.4 558.1 L1391.1 561.1 L1388.2 561.9 L1385.3 559.4 L1383.3 556.5 L1382.5 550.9 L1383.6 547.1 L1384.4 542.1 L1384.3 537.0 L1385.3 533.5 L1386.3 527.7 L1386.5 523.4 L1387.3 520.2 L1387.5 515.4 L1386.3 514.4 L1382.9 512.6 L1381.7 510.6 L1380.3 508.1 L1378.6 504.7 L1377.0 502.8 L1377.6 500.9 L1378.1 499.6 L1377.3 498.5 L1378.1 496.5 L1379.1 495.9 L1380.5 494.1 L1380.5 491.2 L1380.3 489.2Z'/><path d='M1438.6 476.8 L1439.6 473.9 L1441.1 471.6 L1442.5 469.7 L1445.4 467.8 L1445.7 465.6 L1446.8 463.5 L1448.5 462.4 L1449.3 460.6 L1452.9 461.4 L1456.0 459.8 L1458.8 459.3 L1463.2 459.3 L1464.8 458.9 L1465.7 459.4 L1465.1 461.0 L1465.6 462.0 L1464.7 462.8 L1466.1 463.8 L1469.6 464.7 L1470.2 465.8 L1473.3 466.9 L1474.3 466.1 L1474.2 464.8 L1476.6 464.1 L1479.0 465.1 L1482.9 466.2 L1485.8 465.9 L1487.9 465.8 L1488.2 468.9 L1487.0 469.2 L1486.1 467.4 L1486.3 467.9 L1489.1 473.7 L1490.6 476.3 L1492.0 479.9 L1493.2 482.4 L1494.9 484.1 L1496.5 485.4 L1497.3 486.4 L1504.2 486.0 L1504.0 487.4 L1503.1 489.8 L1501.1 493.2 L1499.2 495.4 L1496.8 498.0 L1494.9 499.2 L1493.4 500.9 L1492.5 502.8 L1493.0 505.2 L1493.4 507.6 L1493.9 511.6 L1493.0 513.6 L1490.6 515.1 L1488.6 517.6 L1489.1 520.7 L1486.5 523.3 L1486.2 526.1 L1484.3 528.9 L1481.9 530.9 L1479.6 532.3 L1476.6 532.3 L1474.2 533.2 L1472.8 532.4 L1472.5 530.0 L1471.6 528.3 L1469.7 524.5 L1468.9 520.2 L1467.8 517.6 L1466.3 514.4 L1466.8 511.6 L1468.2 508.1 L1467.5 505.7 L1466.7 503.3 L1465.6 501.2 L1463.7 498.5 L1464.4 496.5 L1464.1 493.8 L1463.2 493.1 L1460.8 493.4 L1459.3 491.4 L1456.4 491.5 L1453.1 492.9 L1450.7 492.5 L1447.8 493.3 L1445.9 492.2 L1443.9 490.9 L1442.2 489.3 L1440.9 487.3 L1439.1 485.6 L1438.2 483.2 L1439.1 481.7 L1439.4 478.6 L1438.6 476.8Z'/><path d='M1445.9 459.2 L1446.5 457.0 L1446.0 455.2 L1446.5 452.9 L1446.1 451.6 L1447.3 450.7 L1450.2 451.0 L1453.6 451.1 L1453.8 448.7 L1453.6 446.9 L1452.1 445.5 L1450.5 444.8 L1450.7 443.8 L1453.4 443.8 L1453.8 442.3 L1456.4 441.5 L1457.4 440.2 L1458.8 439.6 L1459.5 437.4 L1461.2 436.6 L1463.2 436.1 L1463.3 433.1 L1462.9 430.9 L1464.9 429.4 L1465.2 431.7 L1464.9 433.8 L1466.5 435.1 L1468.5 435.8 L1471.3 434.4 L1473.7 434.9 L1475.4 433.6 L1475.2 430.9 L1476.6 429.4 L1478.4 430.1 L1477.7 427.8 L1477.6 426.3 L1481.9 425.9 L1484.0 425.2 L1482.9 424.4 L1480.5 424.2 L1477.0 425.2 L1475.6 423.6 L1475.4 420.0 L1476.9 417.2 L1479.3 414.5 L1479.2 412.9 L1476.4 412.7 L1475.2 415.7 L1473.3 418.3 L1471.8 420.4 L1471.4 423.0 L1473.1 425.0 L1472.9 426.5 L1470.9 429.3 L1470.4 431.9 L1468.6 433.3 L1467.3 433.1 L1467.0 430.9 L1466.3 428.7 L1465.6 426.9 L1465.1 425.6 L1463.7 427.1 L1462.7 428.5 L1461.2 428.3 L1460.3 426.9 L1460.0 424.0 L1459.8 421.4 L1461.2 419.4 L1463.2 417.9 L1465.1 415.7 L1466.8 412.7 L1467.8 408.6 L1469.8 406.0 L1471.3 404.1 L1473.7 401.7 L1476.1 400.5 L1479.5 398.8 L1482.9 399.6 L1484.8 401.9 L1486.7 403.6 L1490.1 404.7 L1494.4 408.1 L1494.7 411.3 L1491.5 412.2 L1488.4 413.2 L1488.2 415.7 L1490.6 417.2 L1493.0 415.7 L1494.9 412.7 L1497.3 411.8 L1497.6 407.3 L1499.7 407.8 L1502.1 406.8 L1506.4 405.7 L1510.3 406.0 L1513.1 402.5 L1517.0 403.9 L1520.4 406.0 L1519.7 400.5 L1519.2 397.3 L1521.3 392.8 L1523.7 393.5 L1525.0 395.4 L1524.7 399.1 L1525.6 406.0 L1528.0 404.7 L1527.6 398.5 L1530.4 395.1 L1532.4 391.2 L1538.6 388.4 L1538.3 385.8 L1543.4 383.6 L1549.2 381.6 L1555.0 374.8 L1557.8 378.7 L1561.7 380.4 L1564.1 383.6 L1563.9 390.8 L1568.9 391.2 L1574.2 390.8 L1578.5 393.5 L1579.5 398.5 L1581.9 397.0 L1584.8 397.3 L1588.6 394.8 L1590.5 393.5 L1595.3 395.1 L1599.6 397.6 L1602.0 399.3 L1606.9 399.3 L1609.3 401.9 L1613.6 403.0 L1618.4 401.7 L1623.2 402.5 L1628.0 405.2 L1631.8 409.1 L1634.7 410.1 L1637.6 412.2 L1633.8 415.7 L1630.4 415.0 L1629.0 413.9 L1626.6 416.8 L1627.0 420.2 L1624.6 420.0 L1621.8 421.4 L1618.7 425.0 L1614.5 424.4 L1613.4 425.4 L1612.1 426.5 L1610.7 428.7 L1611.9 431.9 L1610.7 434.3 L1608.8 437.2 L1607.3 437.7 L1605.6 440.2 L1604.9 436.4 L1604.7 431.4 L1605.7 429.1 L1607.3 428.7 L1609.3 425.9 L1612.1 421.4 L1608.8 421.8 L1604.9 422.4 L1601.6 426.5 L1596.8 426.3 L1592.4 426.3 L1590.0 428.2 L1586.7 433.1 L1585.2 434.8 L1587.8 435.9 L1590.7 437.7 L1590.8 441.8 L1590.0 444.1 L1588.1 446.2 L1585.4 450.8 L1582.8 451.9 L1580.6 452.6 L1579.7 454.5 L1578.5 457.6 L1579.4 461.0 L1577.4 462.0 L1576.4 462.1 L1576.6 459.8 L1576.1 458.3 L1574.9 457.4 L1575.3 456.1 L1574.5 455.5 L1571.8 456.9 L1571.8 455.2 L1572.4 454.9 L1571.3 454.5 L1569.4 456.5 L1568.4 456.5 L1567.9 457.5 L1569.1 458.7 L1569.9 459.1 L1571.1 458.2 L1572.7 458.7 L1571.3 459.8 L1569.9 461.5 L1570.6 462.4 L1571.6 464.4 L1572.2 466.1 L1572.1 467.8 L1571.8 469.1 L1570.0 471.9 L1568.9 473.2 L1567.0 474.9 L1564.8 475.5 L1562.2 476.3 L1561.2 477.4 L1560.5 476.3 L1559.1 476.2 L1557.6 477.4 L1556.6 478.9 L1557.4 480.4 L1558.8 481.9 L1560.0 484.4 L1560.0 486.4 L1558.3 487.4 L1557.4 488.3 L1555.9 489.2 L1555.9 487.8 L1555.3 487.4 L1554.0 486.9 L1553.5 485.7 L1552.1 485.2 L1551.1 484.4 L1550.3 487.4 L1550.6 488.6 L1551.4 489.8 L1551.6 491.2 L1552.6 491.9 L1554.4 493.1 L1554.4 494.6 L1555.1 496.2 L1554.5 496.3 L1552.4 494.8 L1551.4 492.7 L1551.1 491.3 L1549.5 489.5 L1549.9 487.4 L1549.7 484.9 L1548.9 481.9 L1548.4 481.0 L1546.7 482.2 L1545.6 481.9 L1545.9 479.9 L1545.0 478.2 L1543.8 477.2 L1543.4 476.0 L1542.1 475.2 L1540.5 475.9 L1538.6 476.8 L1538.4 477.9 L1536.7 478.6 L1534.1 480.9 L1532.2 482.4 L1532.1 484.1 L1532.0 486.4 L1531.8 487.5 L1530.4 488.8 L1529.5 489.8 L1528.5 488.9 L1527.8 486.6 L1526.9 485.2 L1526.1 482.9 L1525.4 480.4 L1525.1 478.1 L1525.0 476.8 L1524.7 476.4 L1524.5 475.6 L1523.0 477.1 L1521.3 475.5 L1522.5 474.9 L1521.0 474.5 L1519.9 473.8 L1519.2 472.4 L1517.0 472.5 L1514.1 472.6 L1511.2 472.0 L1510.1 471.7 L1509.7 470.5 L1507.6 471.1 L1506.4 470.7 L1505.0 469.7 L1503.8 468.6 L1503.2 467.1 L1502.0 466.9 L1501.1 467.4 L1501.5 468.9 L1502.4 470.0 L1503.2 471.0 L1503.8 472.7 L1504.6 472.5 L1504.6 473.5 L1506.4 473.6 L1508.3 472.1 L1509.1 471.4 L1509.3 473.2 L1510.2 473.9 L1511.5 474.3 L1512.5 475.3 L1511.2 477.4 L1510.6 478.4 L1509.6 479.3 L1508.1 480.2 L1505.2 482.0 L1502.1 483.4 L1498.7 484.8 L1496.8 485.2 L1496.1 483.4 L1495.9 481.4 L1494.9 479.9 L1493.4 477.9 L1492.6 476.3 L1492.0 474.3 L1490.8 472.7 L1489.6 470.5 L1488.4 469.3 L1488.0 465.8 L1488.2 465.3 L1488.8 463.9 L1489.4 462.1 L1489.4 460.6 L1489.8 459.5 L1488.2 459.4 L1486.2 460.3 L1484.3 459.8 L1482.9 459.5 L1481.3 458.9 L1481.1 457.5 L1480.3 456.5 L1480.3 455.4 L1481.4 454.9 L1482.9 454.1 L1485.0 454.1 L1487.2 452.9 L1488.8 452.9 L1491.8 454.4 L1494.9 453.6 L1495.0 452.0 L1493.4 451.1 L1492.0 449.9 L1490.6 448.7 L1491.7 447.2 L1492.7 446.1 L1490.9 446.2 L1488.6 447.6 L1489.1 448.6 L1487.7 449.6 L1486.2 448.6 L1487.2 447.7 L1485.3 446.8 L1483.8 448.0 L1483.4 448.8 L1482.6 450.2 L1481.9 451.4 L1481.7 452.8 L1481.9 453.7 L1480.5 454.7 L1479.5 454.5 L1478.1 454.9 L1476.9 455.1 L1477.6 456.7 L1476.6 458.1 L1477.1 459.8 L1475.9 459.4 L1475.2 457.6 L1474.5 456.0 L1473.7 454.2 L1473.6 452.9 L1472.8 452.3 L1470.4 451.0 L1469.4 449.5 L1468.5 448.7 L1468.1 447.9 L1466.8 448.6 L1466.9 450.0 L1468.1 451.0 L1469.2 452.8 L1470.6 453.2 L1472.3 454.6 L1472.8 455.4 L1472.1 455.1 L1470.9 456.1 L1471.4 456.9 L1470.4 458.1 L1470.1 457.4 L1470.6 456.4 L1469.9 455.4 L1468.9 454.6 L1468.0 453.8 L1466.3 452.7 L1465.2 451.8 L1464.8 450.4 L1463.5 449.8 L1462.2 450.6 L1461.2 451.5 L1459.4 451.1 L1458.0 451.5 L1458.1 452.9 L1456.9 454.0 L1455.8 454.6 L1455.0 456.2 L1454.5 457.6 L1453.8 458.6 L1452.9 459.5 L1450.8 459.5 L1449.8 460.4 L1448.9 459.4 L1447.8 458.9 L1446.4 459.2 L1445.9 459.2Z'/><path d='M1449.5 441.7 L1452.1 440.8 L1455.0 440.6 L1456.3 440.0 L1456.6 437.7 L1455.3 436.6 L1454.7 434.8 L1453.5 432.9 L1452.9 431.7 L1453.3 429.4 L1451.8 427.6 L1450.2 427.6 L1449.5 430.0 L1449.0 431.7 L1450.0 433.4 L1450.4 434.4 L1451.7 434.3 L1452.1 435.8 L1450.6 436.7 L1450.0 439.1 L1451.9 439.7 L1450.7 440.6 L1449.5 441.7Z'/><path d='M1449.2 438.5 L1449.2 436.7 L1449.0 435.3 L1449.5 434.4 L1448.6 433.6 L1447.0 433.6 L1445.4 435.3 L1445.5 436.7 L1445.1 439.3 L1447.1 439.4 L1449.2 438.5Z'/><path d='M1431.6 413.4 L1433.6 411.3 L1437.2 411.8 L1440.6 411.0 L1442.0 413.9 L1441.1 415.9 L1437.2 418.1 L1433.4 417.2 L1434.0 415.7 L1431.6 413.4Z'/><path d='M1579.7 463.8 L1580.1 465.8 L1581.1 465.7 L1581.9 463.6 L1581.5 462.7 L1582.8 462.7 L1583.8 463.3 L1584.9 462.9 L1586.5 462.4 L1588.4 461.9 L1589.6 461.4 L1590.3 460.4 L1590.5 457.6 L1591.5 456.1 L1591.0 453.7 L1590.0 454.9 L1589.6 455.9 L1589.5 458.0 L1588.1 458.8 L1586.5 458.9 L1585.7 460.7 L1583.0 461.0 L1580.9 462.1 L1579.7 463.8Z'/><path d='M1589.6 453.6 L1590.7 453.2 L1592.7 452.9 L1594.8 451.4 L1593.9 450.3 L1591.5 448.4 L1590.8 449.8 L1591.0 451.2 L1589.8 451.4 L1589.6 453.6Z'/><path d='M1591.5 447.6 L1592.9 446.5 L1592.6 443.3 L1594.0 443.3 L1592.4 439.6 L1592.7 436.4 L1592.1 435.1 L1591.3 437.2 L1591.5 441.1 L1591.5 447.6Z'/><path d='M1570.5 474.8 L1571.1 475.8 L1572.2 472.9 L1571.8 472.4 L1570.5 474.8Z'/><path d='M1559.4 478.7 L1561.2 477.8 L1561.7 478.3 L1560.2 479.7 L1559.4 478.7Z'/><path d='M1531.8 488.0 L1533.6 490.1 L1533.0 491.5 L1531.9 491.7 L1531.7 489.6 L1531.8 488.0Z'/><path d='M1546.6 492.1 L1548.7 492.5 L1551.4 495.4 L1554.8 498.5 L1556.9 500.6 L1556.8 503.1 L1555.4 503.2 L1553.3 501.3 L1551.9 499.4 L1549.8 495.9 L1547.7 494.1 L1546.6 492.1Z'/><path d='M1556.1 504.1 L1556.9 503.2 L1559.1 503.6 L1561.7 503.8 L1563.3 504.1 L1565.0 504.9 L1565.0 505.8 L1560.7 505.4 L1557.4 504.6 L1556.1 504.1Z'/><path d='M1559.8 496.1 L1560.3 498.5 L1561.0 500.3 L1562.4 500.5 L1565.0 501.0 L1566.5 501.3 L1567.0 499.7 L1567.9 497.5 L1568.3 496.5 L1569.3 496.1 L1568.1 493.7 L1569.0 492.7 L1567.6 490.9 L1567.0 490.9 L1566.0 492.5 L1564.6 493.2 L1563.1 494.7 L1561.9 495.1 L1560.3 495.6 L1559.8 496.1Z'/><path d='M1569.4 498.0 L1569.9 500.9 L1570.7 502.9 L1571.3 501.3 L1573.0 502.1 L1571.6 499.4 L1573.6 498.5 L1571.3 498.3 L1570.8 497.0 L1574.9 496.3 L1574.7 497.1 L1570.3 496.8 L1569.4 498.0Z'/><path d='M1580.9 498.7 L1583.8 498.4 L1585.7 499.4 L1587.6 499.1 L1590.5 500.0 L1592.9 500.9 L1595.1 502.3 L1596.8 503.5 L1597.1 505.0 L1598.0 506.2 L1599.9 507.5 L1598.9 507.6 L1596.3 507.3 L1595.2 505.2 L1593.4 504.8 L1592.7 506.2 L1590.5 506.3 L1588.6 505.3 L1587.4 502.7 L1584.9 501.7 L1582.8 501.4 L1581.9 500.2 L1583.3 499.6 L1581.8 499.0 L1580.9 498.7Z'/><path d='M1570.9 479.4 L1572.4 479.4 L1572.7 480.9 L1571.9 482.1 L1574.2 483.9 L1574.0 484.9 L1572.4 484.1 L1570.9 483.6 L1570.3 481.9 L1570.9 479.4Z'/><path d='M1572.3 490.8 L1573.7 490.0 L1575.6 488.0 L1576.7 490.5 L1575.6 492.1 L1574.2 491.2 L1572.3 490.8Z'/><path d='M1563.9 519.4 L1564.1 522.9 L1564.8 523.9 L1565.5 527.2 L1565.5 531.7 L1566.0 532.9 L1568.4 533.5 L1570.3 532.3 L1573.7 532.2 L1576.1 530.3 L1579.0 529.7 L1581.1 529.4 L1583.3 530.2 L1584.8 533.0 L1585.7 532.5 L1587.4 530.9 L1587.2 534.2 L1589.1 534.3 L1589.6 536.4 L1591.2 537.4 L1593.4 537.4 L1595.6 538.3 L1597.2 536.8 L1599.2 536.4 L1599.6 534.0 L1600.6 531.7 L1602.0 528.9 L1602.6 526.3 L1602.2 522.9 L1600.9 521.8 L1599.9 519.7 L1598.7 518.7 L1598.0 517.4 L1596.3 516.3 L1595.5 515.3 L1594.8 513.1 L1594.6 512.1 L1593.9 511.3 L1593.0 510.9 L1592.9 509.1 L1592.0 507.8 L1591.2 509.6 L1591.0 511.6 L1590.8 513.6 L1590.1 514.7 L1588.9 514.4 L1587.4 513.4 L1585.5 512.1 L1586.5 510.6 L1586.5 509.3 L1585.2 509.1 L1583.8 509.0 L1582.3 508.5 L1581.2 509.3 L1580.1 510.3 L1579.6 512.0 L1578.0 512.0 L1577.1 510.9 L1575.9 511.6 L1574.6 513.4 L1573.7 514.4 L1572.4 515.1 L1571.5 516.6 L1569.4 517.2 L1567.2 517.7 L1565.3 518.7 L1563.9 519.4Z'/><path d='M1594.1 540.4 L1595.8 540.9 L1597.5 540.6 L1597.4 542.3 L1596.6 543.8 L1595.1 543.9 L1594.2 541.9 L1594.1 540.4Z'/><path d='M1621.0 532.9 L1622.5 533.8 L1624.0 535.8 L1626.6 536.7 L1626.0 538.5 L1624.9 539.5 L1623.4 541.5 L1622.8 541.2 L1623.2 539.3 L1622.0 538.6 L1622.8 537.3 L1622.7 535.3 L1621.0 532.9Z'/><path d='M1621.0 540.1 L1622.5 541.2 L1622.0 542.4 L1621.1 544.2 L1619.5 545.4 L1619.0 547.1 L1617.7 548.2 L1615.0 547.5 L1615.3 546.4 L1616.8 544.7 L1619.2 543.0 L1620.4 540.8 L1621.0 540.1Z'/><path d='M1502.4 509.1 L1503.4 512.4 L1502.9 514.1 L1501.8 517.1 L1500.3 522.2 L1498.4 522.9 L1497.3 521.3 L1496.6 519.0 L1497.7 516.6 L1497.3 514.4 L1497.8 513.3 L1499.5 512.8 L1501.0 511.1 L1502.4 509.1Z'/><path d='M1398.0 445.3 L1401.2 443.3 L1401.7 439.6 L1403.8 443.3 L1404.3 445.5 L1403.6 446.6 L1401.2 445.5 L1398.0 445.3Z'/><path d='M1373.3 475.9 L1376.2 475.1 L1378.6 474.9 L1381.0 476.3 L1383.7 477.7 L1380.5 478.0 L1378.6 476.3 L1375.2 476.1 L1373.3 475.9Z'/><path d='M1383.4 478.1 L1386.3 478.0 L1389.3 479.3 L1386.8 479.9 L1383.5 479.6 L1383.4 478.1Z'/><path d='M1585.7 389.4 L1590.5 390.8 L1595.3 385.8 L1591.5 382.0 L1586.7 383.6 L1585.7 389.4Z'/><path d='M1626.6 399.1 L1628.8 398.2 L1629.9 397.0 L1627.0 397.3 L1626.6 399.1Z'/></g><clipPath id='land1282'><path d='M1293.5 413.2 L1295.5 406.5 L1298.3 403.3 L1304.6 398.2 L1310.8 400.5 L1319.5 402.8 L1325.2 403.9 L1332.0 401.4 L1339.7 403.3 L1345.4 406.3 L1351.2 406.5 L1360.8 407.8 L1363.7 405.2 L1368.5 405.2 L1372.3 402.5 L1376.7 404.1 L1376.2 410.8 L1372.3 411.8 L1370.9 416.1 L1367.8 417.6 L1364.7 423.0 L1364.2 427.2 L1366.1 430.5 L1369.9 431.4 L1373.3 433.4 L1375.9 437.2 L1378.1 439.9 L1379.1 434.8 L1381.0 429.6 L1380.5 424.0 L1380.0 420.4 L1384.4 420.4 L1387.7 423.0 L1390.1 427.8 L1393.0 424.4 L1395.4 429.6 L1396.9 433.1 L1400.2 436.4 L1401.5 438.8 L1398.3 441.4 L1393.0 441.8 L1391.1 443.0 L1393.0 443.6 L1392.7 446.2 L1396.4 448.3 L1392.0 450.8 L1390.6 449.2 L1387.5 450.8 L1387.2 453.3 L1383.9 454.7 L1383.6 456.4 L1382.0 458.0 L1381.7 459.3 L1382.3 461.3 L1380.5 462.4 L1377.3 465.0 L1376.9 467.3 L1378.1 470.7 L1377.6 472.5 L1376.4 471.6 L1375.4 468.9 L1374.3 467.1 L1371.9 466.8 L1369.2 467.0 L1368.5 468.1 L1364.7 467.7 L1361.6 469.7 L1361.3 472.7 L1361.1 475.8 L1362.4 478.6 L1364.2 479.7 L1367.5 479.2 L1368.0 476.8 L1371.2 476.3 L1370.8 479.4 L1370.1 481.9 L1373.8 482.0 L1374.9 483.1 L1374.6 486.9 L1376.7 488.9 L1378.6 488.3 L1380.3 489.2 L1380.5 490.3 L1378.8 490.3 L1377.7 490.5 L1376.4 489.6 L1372.6 487.4 L1371.8 485.6 L1370.9 484.9 L1367.2 484.0 L1364.7 481.9 L1362.3 482.2 L1357.9 480.6 L1353.6 477.9 L1353.6 475.3 L1350.9 472.4 L1348.5 469.7 L1346.6 466.9 L1344.8 465.3 L1345.9 468.4 L1347.4 470.5 L1349.3 474.1 L1349.1 474.8 L1347.2 472.9 L1345.2 469.4 L1344.7 467.3 L1343.0 465.2 L1342.4 464.2 L1341.1 462.6 L1339.1 462.0 L1337.8 459.8 L1336.8 458.0 L1336.0 455.7 L1335.4 452.3 L1335.8 447.3 L1335.1 444.3 L1336.8 443.6 L1334.9 441.8 L1332.2 440.6 L1329.9 435.1 L1327.2 430.5 L1324.3 427.6 L1320.9 425.6 L1316.6 425.0 L1314.2 423.0 L1311.3 425.6 L1309.1 426.5 L1307.5 430.5 L1304.6 431.9 L1301.2 433.4 L1297.9 434.4 L1299.6 432.8 L1303.6 427.8 L1301.7 427.4 L1299.3 425.2 L1296.7 423.4 L1295.9 420.4 L1297.7 418.5 L1300.3 415.7 L1295.2 415.4 L1293.5 413.2Z'/><path d='M1380.3 489.2 L1382.0 488.3 L1382.6 487.1 L1384.8 486.6 L1386.3 485.5 L1386.5 486.9 L1387.9 486.4 L1389.6 487.4 L1393.5 487.3 L1395.6 487.2 L1396.9 489.1 L1398.8 490.8 L1400.2 491.7 L1403.1 491.9 L1405.3 493.2 L1406.5 495.8 L1406.9 497.5 L1408.6 498.5 L1412.2 499.7 L1415.1 500.3 L1418.0 501.1 L1421.2 502.7 L1421.6 504.7 L1420.9 506.7 L1419.0 508.9 L1417.6 510.4 L1417.3 514.6 L1416.6 517.1 L1414.8 519.7 L1412.7 520.2 L1410.3 521.3 L1408.4 523.2 L1408.2 525.9 L1406.9 528.3 L1404.5 531.7 L1403.1 533.1 L1400.7 533.2 L1399.1 532.5 L1400.0 534.6 L1399.7 537.3 L1395.2 538.1 L1395.1 540.4 L1392.5 540.8 L1393.0 542.7 L1392.0 546.0 L1390.1 547.8 L1391.8 549.9 L1389.2 553.5 L1388.7 556.2 L1389.4 558.1 L1391.1 561.1 L1388.2 561.9 L1385.3 559.4 L1383.3 556.5 L1382.5 550.9 L1383.6 547.1 L1384.4 542.1 L1384.3 537.0 L1385.3 533.5 L1386.3 527.7 L1386.5 523.4 L1387.3 520.2 L1387.5 515.4 L1386.3 514.4 L1382.9 512.6 L1381.7 510.6 L1380.3 508.1 L1378.6 504.7 L1377.0 502.8 L1377.6 500.9 L1378.1 499.6 L1377.3 498.5 L1378.1 496.5 L1379.1 495.9 L1380.5 494.1 L1380.5 491.2 L1380.3 489.2Z'/><path d='M1438.6 476.8 L1439.6 473.9 L1441.1 471.6 L1442.5 469.7 L1445.4 467.8 L1445.7 465.6 L1446.8 463.5 L1448.5 462.4 L1449.3 460.6 L1452.9 461.4 L1456.0 459.8 L1458.8 459.3 L1463.2 459.3 L1464.8 458.9 L1465.7 459.4 L1465.1 461.0 L1465.6 462.0 L1464.7 462.8 L1466.1 463.8 L1469.6 464.7 L1470.2 465.8 L1473.3 466.9 L1474.3 466.1 L1474.2 464.8 L1476.6 464.1 L1479.0 465.1 L1482.9 466.2 L1485.8 465.9 L1487.9 465.8 L1488.2 468.9 L1487.0 469.2 L1486.1 467.4 L1486.3 467.9 L1489.1 473.7 L1490.6 476.3 L1492.0 479.9 L1493.2 482.4 L1494.9 484.1 L1496.5 485.4 L1497.3 486.4 L1504.2 486.0 L1504.0 487.4 L1503.1 489.8 L1501.1 493.2 L1499.2 495.4 L1496.8 498.0 L1494.9 499.2 L1493.4 500.9 L1492.5 502.8 L1493.0 505.2 L1493.4 507.6 L1493.9 511.6 L1493.0 513.6 L1490.6 515.1 L1488.6 517.6 L1489.1 520.7 L1486.5 523.3 L1486.2 526.1 L1484.3 528.9 L1481.9 530.9 L1479.6 532.3 L1476.6 532.3 L1474.2 533.2 L1472.8 532.4 L1472.5 530.0 L1471.6 528.3 L1469.7 524.5 L1468.9 520.2 L1467.8 517.6 L1466.3 514.4 L1466.8 511.6 L1468.2 508.1 L1467.5 505.7 L1466.7 503.3 L1465.6 501.2 L1463.7 498.5 L1464.4 496.5 L1464.1 493.8 L1463.2 493.1 L1460.8 493.4 L1459.3 491.4 L1456.4 491.5 L1453.1 492.9 L1450.7 492.5 L1447.8 493.3 L1445.9 492.2 L1443.9 490.9 L1442.2 489.3 L1440.9 487.3 L1439.1 485.6 L1438.2 483.2 L1439.1 481.7 L1439.4 478.6 L1438.6 476.8Z'/><path d='M1445.9 459.2 L1446.5 457.0 L1446.0 455.2 L1446.5 452.9 L1446.1 451.6 L1447.3 450.7 L1450.2 451.0 L1453.6 451.1 L1453.8 448.7 L1453.6 446.9 L1452.1 445.5 L1450.5 444.8 L1450.7 443.8 L1453.4 443.8 L1453.8 442.3 L1456.4 441.5 L1457.4 440.2 L1458.8 439.6 L1459.5 437.4 L1461.2 436.6 L1463.2 436.1 L1463.3 433.1 L1462.9 430.9 L1464.9 429.4 L1465.2 431.7 L1464.9 433.8 L1466.5 435.1 L1468.5 435.8 L1471.3 434.4 L1473.7 434.9 L1475.4 433.6 L1475.2 430.9 L1476.6 429.4 L1478.4 430.1 L1477.7 427.8 L1477.6 426.3 L1481.9 425.9 L1484.0 425.2 L1482.9 424.4 L1480.5 424.2 L1477.0 425.2 L1475.6 423.6 L1475.4 420.0 L1476.9 417.2 L1479.3 414.5 L1479.2 412.9 L1476.4 412.7 L1475.2 415.7 L1473.3 418.3 L1471.8 420.4 L1471.4 423.0 L1473.1 425.0 L1472.9 426.5 L1470.9 429.3 L1470.4 431.9 L1468.6 433.3 L1467.3 433.1 L1467.0 430.9 L1466.3 428.7 L1465.6 426.9 L1465.1 425.6 L1463.7 427.1 L1462.7 428.5 L1461.2 428.3 L1460.3 426.9 L1460.0 424.0 L1459.8 421.4 L1461.2 419.4 L1463.2 417.9 L1465.1 415.7 L1466.8 412.7 L1467.8 408.6 L1469.8 406.0 L1471.3 404.1 L1473.7 401.7 L1476.1 400.5 L1479.5 398.8 L1482.9 399.6 L1484.8 401.9 L1486.7 403.6 L1490.1 404.7 L1494.4 408.1 L1494.7 411.3 L1491.5 412.2 L1488.4 413.2 L1488.2 415.7 L1490.6 417.2 L1493.0 415.7 L1494.9 412.7 L1497.3 411.8 L1497.6 407.3 L1499.7 407.8 L1502.1 406.8 L1506.4 405.7 L1510.3 406.0 L1513.1 402.5 L1517.0 403.9 L1520.4 406.0 L1519.7 400.5 L1519.2 397.3 L1521.3 392.8 L1523.7 393.5 L1525.0 395.4 L1524.7 399.1 L1525.6 406.0 L1528.0 404.7 L1527.6 398.5 L1530.4 395.1 L1532.4 391.2 L1538.6 388.4 L1538.3 385.8 L1543.4 383.6 L1549.2 381.6 L1555.0 374.8 L1557.8 378.7 L1561.7 380.4 L1564.1 383.6 L1563.9 390.8 L1568.9 391.2 L1574.2 390.8 L1578.5 393.5 L1579.5 398.5 L1581.9 397.0 L1584.8 397.3 L1588.6 394.8 L1590.5 393.5 L1595.3 395.1 L1599.6 397.6 L1602.0 399.3 L1606.9 399.3 L1609.3 401.9 L1613.6 403.0 L1618.4 401.7 L1623.2 402.5 L1628.0 405.2 L1631.8 409.1 L1634.7 410.1 L1637.6 412.2 L1633.8 415.7 L1630.4 415.0 L1629.0 413.9 L1626.6 416.8 L1627.0 420.2 L1624.6 420.0 L1621.8 421.4 L1618.7 425.0 L1614.5 424.4 L1613.4 425.4 L1612.1 426.5 L1610.7 428.7 L1611.9 431.9 L1610.7 434.3 L1608.8 437.2 L1607.3 437.7 L1605.6 440.2 L1604.9 436.4 L1604.7 431.4 L1605.7 429.1 L1607.3 428.7 L1609.3 425.9 L1612.1 421.4 L1608.8 421.8 L1604.9 422.4 L1601.6 426.5 L1596.8 426.3 L1592.4 426.3 L1590.0 428.2 L1586.7 433.1 L1585.2 434.8 L1587.8 435.9 L1590.7 437.7 L1590.8 441.8 L1590.0 444.1 L1588.1 446.2 L1585.4 450.8 L1582.8 451.9 L1580.6 452.6 L1579.7 454.5 L1578.5 457.6 L1579.4 461.0 L1577.4 462.0 L1576.4 462.1 L1576.6 459.8 L1576.1 458.3 L1574.9 457.4 L1575.3 456.1 L1574.5 455.5 L1571.8 456.9 L1571.8 455.2 L1572.4 454.9 L1571.3 454.5 L1569.4 456.5 L1568.4 456.5 L1567.9 457.5 L1569.1 458.7 L1569.9 459.1 L1571.1 458.2 L1572.7 458.7 L1571.3 459.8 L1569.9 461.5 L1570.6 462.4 L1571.6 464.4 L1572.2 466.1 L1572.1 467.8 L1571.8 469.1 L1570.0 471.9 L1568.9 473.2 L1567.0 474.9 L1564.8 475.5 L1562.2 476.3 L1561.2 477.4 L1560.5 476.3 L1559.1 476.2 L1557.6 477.4 L1556.6 478.9 L1557.4 480.4 L1558.8 481.9 L1560.0 484.4 L1560.0 486.4 L1558.3 487.4 L1557.4 488.3 L1555.9 489.2 L1555.9 487.8 L1555.3 487.4 L1554.0 486.9 L1553.5 485.7 L1552.1 485.2 L1551.1 484.4 L1550.3 487.4 L1550.6 488.6 L1551.4 489.8 L1551.6 491.2 L1552.6 491.9 L1554.4 493.1 L1554.4 494.6 L1555.1 496.2 L1554.5 496.3 L1552.4 494.8 L1551.4 492.7 L1551.1 491.3 L1549.5 489.5 L1549.9 487.4 L1549.7 484.9 L1548.9 481.9 L1548.4 481.0 L1546.7 482.2 L1545.6 481.9 L1545.9 479.9 L1545.0 478.2 L1543.8 477.2 L1543.4 476.0 L1542.1 475.2 L1540.5 475.9 L1538.6 476.8 L1538.4 477.9 L1536.7 478.6 L1534.1 480.9 L1532.2 482.4 L1532.1 484.1 L1532.0 486.4 L1531.8 487.5 L1530.4 488.8 L1529.5 489.8 L1528.5 488.9 L1527.8 486.6 L1526.9 485.2 L1526.1 482.9 L1525.4 480.4 L1525.1 478.1 L1525.0 476.8 L1524.7 476.4 L1524.5 475.6 L1523.0 477.1 L1521.3 475.5 L1522.5 474.9 L1521.0 474.5 L1519.9 473.8 L1519.2 472.4 L1517.0 472.5 L1514.1 472.6 L1511.2 472.0 L1510.1 471.7 L1509.7 470.5 L1507.6 471.1 L1506.4 470.7 L1505.0 469.7 L1503.8 468.6 L1503.2 467.1 L1502.0 466.9 L1501.1 467.4 L1501.5 468.9 L1502.4 470.0 L1503.2 471.0 L1503.8 472.7 L1504.6 472.5 L1504.6 473.5 L1506.4 473.6 L1508.3 472.1 L1509.1 471.4 L1509.3 473.2 L1510.2 473.9 L1511.5 474.3 L1512.5 475.3 L1511.2 477.4 L1510.6 478.4 L1509.6 479.3 L1508.1 480.2 L1505.2 482.0 L1502.1 483.4 L1498.7 484.8 L1496.8 485.2 L1496.1 483.4 L1495.9 481.4 L1494.9 479.9 L1493.4 477.9 L1492.6 476.3 L1492.0 474.3 L1490.8 472.7 L1489.6 470.5 L1488.4 469.3 L1488.0 465.8 L1488.2 465.3 L1488.8 463.9 L1489.4 462.1 L1489.4 460.6 L1489.8 459.5 L1488.2 459.4 L1486.2 460.3 L1484.3 459.8 L1482.9 459.5 L1481.3 458.9 L1481.1 457.5 L1480.3 456.5 L1480.3 455.4 L1481.4 454.9 L1482.9 454.1 L1485.0 454.1 L1487.2 452.9 L1488.8 452.9 L1491.8 454.4 L1494.9 453.6 L1495.0 452.0 L1493.4 451.1 L1492.0 449.9 L1490.6 448.7 L1491.7 447.2 L1492.7 446.1 L1490.9 446.2 L1488.6 447.6 L1489.1 448.6 L1487.7 449.6 L1486.2 448.6 L1487.2 447.7 L1485.3 446.8 L1483.8 448.0 L1483.4 448.8 L1482.6 450.2 L1481.9 451.4 L1481.7 452.8 L1481.9 453.7 L1480.5 454.7 L1479.5 454.5 L1478.1 454.9 L1476.9 455.1 L1477.6 456.7 L1476.6 458.1 L1477.1 459.8 L1475.9 459.4 L1475.2 457.6 L1474.5 456.0 L1473.7 454.2 L1473.6 452.9 L1472.8 452.3 L1470.4 451.0 L1469.4 449.5 L1468.5 448.7 L1468.1 447.9 L1466.8 448.6 L1466.9 450.0 L1468.1 451.0 L1469.2 452.8 L1470.6 453.2 L1472.3 454.6 L1472.8 455.4 L1472.1 455.1 L1470.9 456.1 L1471.4 456.9 L1470.4 458.1 L1470.1 457.4 L1470.6 456.4 L1469.9 455.4 L1468.9 454.6 L1468.0 453.8 L1466.3 452.7 L1465.2 451.8 L1464.8 450.4 L1463.5 449.8 L1462.2 450.6 L1461.2 451.5 L1459.4 451.1 L1458.0 451.5 L1458.1 452.9 L1456.9 454.0 L1455.8 454.6 L1455.0 456.2 L1454.5 457.6 L1453.8 458.6 L1452.9 459.5 L1450.8 459.5 L1449.8 460.4 L1448.9 459.4 L1447.8 458.9 L1446.4 459.2 L1445.9 459.2Z'/><path d='M1449.5 441.7 L1452.1 440.8 L1455.0 440.6 L1456.3 440.0 L1456.6 437.7 L1455.3 436.6 L1454.7 434.8 L1453.5 432.9 L1452.9 431.7 L1453.3 429.4 L1451.8 427.6 L1450.2 427.6 L1449.5 430.0 L1449.0 431.7 L1450.0 433.4 L1450.4 434.4 L1451.7 434.3 L1452.1 435.8 L1450.6 436.7 L1450.0 439.1 L1451.9 439.7 L1450.7 440.6 L1449.5 441.7Z'/><path d='M1449.2 438.5 L1449.2 436.7 L1449.0 435.3 L1449.5 434.4 L1448.6 433.6 L1447.0 433.6 L1445.4 435.3 L1445.5 436.7 L1445.1 439.3 L1447.1 439.4 L1449.2 438.5Z'/><path d='M1431.6 413.4 L1433.6 411.3 L1437.2 411.8 L1440.6 411.0 L1442.0 413.9 L1441.1 415.9 L1437.2 418.1 L1433.4 417.2 L1434.0 415.7 L1431.6 413.4Z'/><path d='M1579.7 463.8 L1580.1 465.8 L1581.1 465.7 L1581.9 463.6 L1581.5 462.7 L1582.8 462.7 L1583.8 463.3 L1584.9 462.9 L1586.5 462.4 L1588.4 461.9 L1589.6 461.4 L1590.3 460.4 L1590.5 457.6 L1591.5 456.1 L1591.0 453.7 L1590.0 454.9 L1589.6 455.9 L1589.5 458.0 L1588.1 458.8 L1586.5 458.9 L1585.7 460.7 L1583.0 461.0 L1580.9 462.1 L1579.7 463.8Z'/><path d='M1589.6 453.6 L1590.7 453.2 L1592.7 452.9 L1594.8 451.4 L1593.9 450.3 L1591.5 448.4 L1590.8 449.8 L1591.0 451.2 L1589.8 451.4 L1589.6 453.6Z'/><path d='M1591.5 447.6 L1592.9 446.5 L1592.6 443.3 L1594.0 443.3 L1592.4 439.6 L1592.7 436.4 L1592.1 435.1 L1591.3 437.2 L1591.5 441.1 L1591.5 447.6Z'/><path d='M1570.5 474.8 L1571.1 475.8 L1572.2 472.9 L1571.8 472.4 L1570.5 474.8Z'/><path d='M1559.4 478.7 L1561.2 477.8 L1561.7 478.3 L1560.2 479.7 L1559.4 478.7Z'/><path d='M1531.8 488.0 L1533.6 490.1 L1533.0 491.5 L1531.9 491.7 L1531.7 489.6 L1531.8 488.0Z'/><path d='M1546.6 492.1 L1548.7 492.5 L1551.4 495.4 L1554.8 498.5 L1556.9 500.6 L1556.8 503.1 L1555.4 503.2 L1553.3 501.3 L1551.9 499.4 L1549.8 495.9 L1547.7 494.1 L1546.6 492.1Z'/><path d='M1556.1 504.1 L1556.9 503.2 L1559.1 503.6 L1561.7 503.8 L1563.3 504.1 L1565.0 504.9 L1565.0 505.8 L1560.7 505.4 L1557.4 504.6 L1556.1 504.1Z'/><path d='M1559.8 496.1 L1560.3 498.5 L1561.0 500.3 L1562.4 500.5 L1565.0 501.0 L1566.5 501.3 L1567.0 499.7 L1567.9 497.5 L1568.3 496.5 L1569.3 496.1 L1568.1 493.7 L1569.0 492.7 L1567.6 490.9 L1567.0 490.9 L1566.0 492.5 L1564.6 493.2 L1563.1 494.7 L1561.9 495.1 L1560.3 495.6 L1559.8 496.1Z'/><path d='M1569.4 498.0 L1569.9 500.9 L1570.7 502.9 L1571.3 501.3 L1573.0 502.1 L1571.6 499.4 L1573.6 498.5 L1571.3 498.3 L1570.8 497.0 L1574.9 496.3 L1574.7 497.1 L1570.3 496.8 L1569.4 498.0Z'/><path d='M1580.9 498.7 L1583.8 498.4 L1585.7 499.4 L1587.6 499.1 L1590.5 500.0 L1592.9 500.9 L1595.1 502.3 L1596.8 503.5 L1597.1 505.0 L1598.0 506.2 L1599.9 507.5 L1598.9 507.6 L1596.3 507.3 L1595.2 505.2 L1593.4 504.8 L1592.7 506.2 L1590.5 506.3 L1588.6 505.3 L1587.4 502.7 L1584.9 501.7 L1582.8 501.4 L1581.9 500.2 L1583.3 499.6 L1581.8 499.0 L1580.9 498.7Z'/><path d='M1570.9 479.4 L1572.4 479.4 L1572.7 480.9 L1571.9 482.1 L1574.2 483.9 L1574.0 484.9 L1572.4 484.1 L1570.9 483.6 L1570.3 481.9 L1570.9 479.4Z'/><path d='M1572.3 490.8 L1573.7 490.0 L1575.6 488.0 L1576.7 490.5 L1575.6 492.1 L1574.2 491.2 L1572.3 490.8Z'/><path d='M1563.9 519.4 L1564.1 522.9 L1564.8 523.9 L1565.5 527.2 L1565.5 531.7 L1566.0 532.9 L1568.4 533.5 L1570.3 532.3 L1573.7 532.2 L1576.1 530.3 L1579.0 529.7 L1581.1 529.4 L1583.3 530.2 L1584.8 533.0 L1585.7 532.5 L1587.4 530.9 L1587.2 534.2 L1589.1 534.3 L1589.6 536.4 L1591.2 537.4 L1593.4 537.4 L1595.6 538.3 L1597.2 536.8 L1599.2 536.4 L1599.6 534.0 L1600.6 531.7 L1602.0 528.9 L1602.6 526.3 L1602.2 522.9 L1600.9 521.8 L1599.9 519.7 L1598.7 518.7 L1598.0 517.4 L1596.3 516.3 L1595.5 515.3 L1594.8 513.1 L1594.6 512.1 L1593.9 511.3 L1593.0 510.9 L1592.9 509.1 L1592.0 507.8 L1591.2 509.6 L1591.0 511.6 L1590.8 513.6 L1590.1 514.7 L1588.9 514.4 L1587.4 513.4 L1585.5 512.1 L1586.5 510.6 L1586.5 509.3 L1585.2 509.1 L1583.8 509.0 L1582.3 508.5 L1581.2 509.3 L1580.1 510.3 L1579.6 512.0 L1578.0 512.0 L1577.1 510.9 L1575.9 511.6 L1574.6 513.4 L1573.7 514.4 L1572.4 515.1 L1571.5 516.6 L1569.4 517.2 L1567.2 517.7 L1565.3 518.7 L1563.9 519.4Z'/><path d='M1594.1 540.4 L1595.8 540.9 L1597.5 540.6 L1597.4 542.3 L1596.6 543.8 L1595.1 543.9 L1594.2 541.9 L1594.1 540.4Z'/><path d='M1621.0 532.9 L1622.5 533.8 L1624.0 535.8 L1626.6 536.7 L1626.0 538.5 L1624.9 539.5 L1623.4 541.5 L1622.8 541.2 L1623.2 539.3 L1622.0 538.6 L1622.8 537.3 L1622.7 535.3 L1621.0 532.9Z'/><path d='M1621.0 540.1 L1622.5 541.2 L1622.0 542.4 L1621.1 544.2 L1619.5 545.4 L1619.0 547.1 L1617.7 548.2 L1615.0 547.5 L1615.3 546.4 L1616.8 544.7 L1619.2 543.0 L1620.4 540.8 L1621.0 540.1Z'/><path d='M1502.4 509.1 L1503.4 512.4 L1502.9 514.1 L1501.8 517.1 L1500.3 522.2 L1498.4 522.9 L1497.3 521.3 L1496.6 519.0 L1497.7 516.6 L1497.3 514.4 L1497.8 513.3 L1499.5 512.8 L1501.0 511.1 L1502.4 509.1Z'/><path d='M1398.0 445.3 L1401.2 443.3 L1401.7 439.6 L1403.8 443.3 L1404.3 445.5 L1403.6 446.6 L1401.2 445.5 L1398.0 445.3Z'/><path d='M1373.3 475.9 L1376.2 475.1 L1378.6 474.9 L1381.0 476.3 L1383.7 477.7 L1380.5 478.0 L1378.6 476.3 L1375.2 476.1 L1373.3 475.9Z'/><path d='M1383.4 478.1 L1386.3 478.0 L1389.3 479.3 L1386.8 479.9 L1383.5 479.6 L1383.4 478.1Z'/><path d='M1585.7 389.4 L1590.5 390.8 L1595.3 385.8 L1591.5 382.0 L1586.7 383.6 L1585.7 389.4Z'/><path d='M1626.6 399.1 L1628.8 398.2 L1629.9 397.0 L1627.0 397.3 L1626.6 399.1Z'/></clipPath><g clip-path='url(#land1282)'><g fill='#9fe0c3'><path d='M1382.9 497.5 L1387.7 495.6 L1395.4 493.7 L1402.1 494.6 L1406.9 497.5 L1405.0 502.3 L1401.2 506.2 L1394.5 509.1 L1387.7 509.1 L1383.9 505.2 L1382.9 497.5Z'/><path d='M1464.6 494.6 L1472.3 493.2 L1481.0 493.7 L1483.8 497.5 L1481.9 502.3 L1474.2 503.3 L1467.5 501.3 L1464.6 494.6Z'/><path d='M1481.9 429.6 L1489.6 431.4 L1498.2 430.5 L1506.9 430.5 L1514.6 429.6 L1514.6 418.9 L1510.7 413.4 L1501.1 412.2 L1491.5 414.5 L1483.8 418.9 L1481.9 429.6Z'/><path d='M1362.7 446.2 L1372.3 446.2 L1378.1 449.0 L1374.3 452.9 L1364.7 451.6 L1362.7 446.2Z'/><path d='M1551.1 477.9 L1556.9 475.8 L1559.8 479.9 L1555.9 486.9 L1551.1 483.9 L1551.1 477.9Z'/><path d='M1527.1 418.9 L1536.7 421.0 L1546.3 423.0 L1551.1 430.5 L1541.5 433.9 L1531.9 432.2 L1524.2 426.9 L1527.1 418.9Z'/><path d='M1339.7 428.7 L1354.1 428.7 L1360.8 435.6 L1351.2 438.8 L1341.6 435.6 L1339.7 428.7Z'/></g><g fill='#f0ebdf'><path d='M1437.7 477.9 L1439.6 473.7 L1442.5 470.0 L1445.4 467.3 L1447.3 463.9 L1449.2 460.4 L1453.1 460.4 L1458.8 458.6 L1464.6 458.0 L1466.5 461.5 L1474.2 463.9 L1480.0 463.9 L1483.8 462.7 L1486.7 458.0 L1489.6 455.5 L1495.4 454.2 L1499.2 456.7 L1503.1 457.4 L1507.9 454.2 L1512.7 451.6 L1516.5 454.2 L1520.4 458.0 L1523.2 462.7 L1521.3 467.3 L1519.4 470.5 L1514.6 471.6 L1509.8 471.8 L1507.9 474.3 L1505.0 478.9 L1500.2 482.9 L1496.3 484.9 L1494.4 485.9 L1490.6 482.9 L1487.7 483.9 L1483.8 485.4 L1478.1 484.9 L1470.4 484.4 L1462.7 483.9 L1455.0 483.4 L1447.3 482.9 L1440.6 482.4 L1437.7 477.9Z'/><path d='M1497.3 447.6 L1501.1 441.8 L1507.9 438.8 L1514.6 438.0 L1522.3 438.8 L1530.0 440.3 L1536.7 443.3 L1541.5 442.6 L1547.3 444.1 L1555.0 445.5 L1562.6 446.9 L1568.4 447.6 L1571.3 450.3 L1567.5 453.6 L1561.7 454.9 L1556.9 458.0 L1552.1 459.8 L1548.2 461.5 L1543.4 463.3 L1537.7 463.9 L1531.9 462.1 L1527.1 458.6 L1522.3 457.4 L1516.5 455.5 L1510.7 454.2 L1505.9 453.6 L1503.1 451.6 L1497.3 447.6Z'/><path d='M1337.7 450.3 L1342.5 446.2 L1348.3 446.9 L1355.0 451.6 L1357.9 459.2 L1358.9 466.1 L1357.9 472.7 L1355.0 476.8 L1353.1 474.8 L1350.2 471.6 L1346.4 467.3 L1343.5 464.4 L1340.6 461.5 L1338.7 456.7 L1337.7 450.3Z'/><path d='M1386.8 534.6 L1391.6 535.2 L1393.5 539.5 L1392.5 546.0 L1390.1 548.8 L1389.2 554.7 L1387.7 557.0 L1385.8 553.2 L1386.3 544.7 L1386.8 534.6Z'/><path d='M1563.6 519.2 L1565.0 526.6 L1566.0 531.1 L1572.3 532.3 L1579.0 530.0 L1583.8 530.0 L1587.6 532.3 L1590.5 533.5 L1594.4 532.3 L1596.3 526.6 L1595.3 521.3 L1592.4 517.1 L1589.6 514.1 L1585.7 513.6 L1580.9 512.1 L1577.1 512.6 L1572.3 515.6 L1566.5 517.6 L1563.6 519.2Z'/><path d='M1466.1 513.1 L1471.3 514.6 L1477.1 515.1 L1481.0 518.2 L1483.8 522.3 L1482.9 527.7 L1480.0 531.1 L1472.8 532.3 L1470.4 525.6 L1468.0 518.7 L1466.1 513.1Z'/><path d='M1377.6 502.3 L1382.9 509.1 L1387.7 515.6 L1391.6 519.2 L1390.6 524.5 L1387.2 527.7 L1386.8 521.3 L1387.2 515.1 L1382.0 511.1 L1378.6 504.7 L1377.6 502.3Z'/><path d='M1489.6 483.9 L1493.4 485.9 L1497.3 486.9 L1504.0 486.1 L1502.1 491.7 L1497.3 496.5 L1493.4 498.5 L1490.6 494.6 L1489.6 489.8 L1489.6 483.9Z'/></g><g fill='#c9c9c9' opacity='0.9'><path d='M1334.9 403.3 L1344.5 406.3 L1360.8 407.8 L1368.5 405.2 L1376.2 404.7 L1376.2 411.0 L1372.3 413.4 L1369.5 417.9 L1364.7 424.0 L1358.9 425.0 L1349.3 421.0 L1341.6 414.5 L1334.9 408.6 L1334.9 403.3Z'/><path d='M1489.6 404.7 L1494.4 408.1 L1492.5 410.3 L1486.7 404.1 L1489.6 404.7Z'/><path d='M1555.0 374.8 L1563.6 383.6 L1560.7 391.2 L1551.1 392.8 L1547.3 384.0 L1555.0 374.8Z'/><path d='M1578.0 394.4 L1590.5 393.5 L1602.0 399.3 L1599.2 404.7 L1584.8 401.9 L1578.0 394.4Z'/></g></g><g fill='#54cce2'><path d='M1502.3 458.4 L1503.5 459.2 L1506.7 459.3 L1506.8 457.0 L1506.0 456.2 L1505.9 454.4 L1507.6 454.2 L1505.9 452.4 L1505.6 452.2 L1504.3 451.4 L1503.3 449.9 L1504.5 449.6 L1505.9 448.6 L1506.1 446.6 L1504.2 446.2 L1502.2 447.0 L1501.6 447.9 L1500.7 449.2 L1500.7 450.8 L1501.7 453.2 L1502.7 454.7 L1502.5 456.7 L1502.3 458.4Z'/></g><g fill='#cbcbcb'><path d='M1395.6 410.5 L1394.9 413.4 L1392.5 415.7 L1392.0 418.3 L1390.1 418.9 L1387.7 419.4 L1386.0 417.9 L1384.4 415.9 L1380.5 415.7 L1380.3 413.2 L1383.9 409.3 L1383.4 406.5 L1381.0 403.3 L1378.1 400.2 L1371.4 401.4 L1369.9 399.1 L1372.3 396.0 L1375.2 391.2 L1379.1 391.2 L1381.5 393.5 L1384.8 396.6 L1387.7 400.5 L1390.1 403.3 L1391.1 407.3 L1395.4 409.8 L1395.6 410.5Z'/><path d='M1341.1 397.6 L1343.5 401.9 L1349.3 406.0 L1357.0 405.2 L1357.4 401.9 L1356.0 399.1 L1354.1 393.5 L1351.7 391.8 L1346.4 392.8 L1342.5 395.4 L1341.1 397.6Z'/><path d='M1334.1 396.3 L1336.8 399.1 L1339.7 397.6 L1342.1 393.5 L1340.6 389.4 L1335.3 388.4 L1334.1 396.3Z'/><path d='M1377.6 387.7 L1372.3 387.7 L1366.6 386.6 L1367.5 382.0 L1371.4 380.0 L1377.2 380.8 L1377.6 387.7Z'/><path d='M1368.0 394.4 L1363.7 396.0 L1362.3 391.2 L1366.6 389.1 L1368.0 394.4Z'/><path d='M1360.3 397.6 L1357.0 394.4 L1357.9 391.2 L1361.3 391.2 L1362.3 395.1 L1360.3 397.6Z'/><path d='M1354.1 385.8 L1349.3 387.7 L1343.0 386.6 L1342.5 381.2 L1349.3 379.2 L1353.6 382.0 L1354.1 385.8Z'/><path d='M1360.8 385.8 L1355.0 384.0 L1356.5 380.8 L1361.3 380.0 L1360.8 385.8Z'/><path d='M1375.2 418.5 L1371.9 417.2 L1372.8 413.4 L1376.7 415.7 L1375.2 418.5Z'/></g><g fill='#ececec'><path d='M1363.0 359.3 L1367.5 353.7 L1379.0 345.2 L1388.6 342.8 L1395.6 348.9 L1393.1 354.4 L1386.7 362.2 L1380.3 368.1 L1379.0 380.0 L1371.4 378.7 L1372.6 371.1 L1366.2 368.1 L1363.0 359.3Z'/><path d='M1465.6 369.6 L1468.0 375.7 L1470.9 380.0 L1472.8 376.6 L1476.1 371.1 L1481.0 364.4 L1476.1 360.5 L1471.3 362.8 L1466.1 365.0 L1465.6 369.6Z'/><path d='M1505.0 398.5 L1505.9 400.5 L1508.8 399.6 L1510.3 395.1 L1511.2 390.5 L1514.6 385.1 L1520.8 379.6 L1518.4 377.5 L1512.7 380.0 L1508.8 386.6 L1508.3 392.8 L1505.0 398.5Z'/><path d='M1546.3 368.6 L1549.2 373.4 L1554.5 368.6 L1551.1 359.9 L1545.8 360.5 L1546.3 368.6Z'/><path d='M1500.2 360.5 L1505.0 363.3 L1514.6 359.9 L1510.7 353.7 L1501.1 357.5 L1500.2 360.5Z'/></g><path d='M1386.7 372.0 L1391.8 362.2 L1398.2 348.9 L1407.1 346.7 L1411.0 342.8 L1417.4 338.7 L1427.6 339.5 L1433.4 345.2 L1431.5 351.0 L1443.6 353.0 L1437.8 359.3 L1435.3 367.1 L1436.0 378.7 L1434.6 388.7 L1432.7 399.1 L1427.6 404.1 L1419.9 413.2 L1412.2 423.4 L1407.1 417.0 L1405.2 408.1 L1403.3 397.9 L1400.1 385.1 L1395.0 381.2 L1388.6 379.2 L1386.7 372.0Z' fill='#ffffff'/><path d='M1282.0 670.5 L1282.0 623.4 L1293.5 624.4 L1303.1 623.0 L1308.9 619.3 L1314.7 613.0 L1322.4 609.2 L1330.1 606.6 L1339.7 604.2 L1349.3 606.3 L1357.0 599.9 L1363.7 601.5 L1370.4 602.8 L1378.1 603.8 L1382.9 600.6 L1387.7 594.5 L1390.1 585.2 L1394.0 580.5 L1400.2 576.7 L1398.3 580.5 L1395.9 586.4 L1396.4 594.5 L1395.4 603.8 L1395.9 611.0 L1402.1 617.1 L1409.8 621.6 L1418.5 621.6 L1423.3 617.1 L1428.1 613.0 L1432.9 605.6 L1437.7 602.2 L1443.5 599.0 L1450.2 596.8 L1456.9 594.5 L1464.6 593.1 L1471.3 593.9 L1479.0 594.5 L1485.8 592.5 L1493.4 590.3 L1501.1 585.9 L1507.9 582.8 L1514.6 585.2 L1521.3 587.2 L1524.2 592.5 L1527.1 591.7 L1531.9 587.7 L1539.6 584.5 L1546.3 584.0 L1553.0 582.3 L1560.7 583.5 L1566.5 585.2 L1574.2 584.0 L1584.8 583.2 L1591.5 585.2 L1599.2 588.5 L1608.8 591.7 L1615.5 595.4 L1619.3 600.6 L1617.4 607.3 L1613.6 613.0 L1612.6 620.2 L1615.5 623.0 L1623.2 623.9 L1628.0 623.4 L1628.0 670.5Z' fill='#faf9f7'/><g fill='#bbebd8'><path d='M1639.5 413.2 L1641.5 406.5 L1644.3 403.3 L1650.6 398.2 L1656.8 400.5 L1665.5 402.8 L1671.2 403.9 L1678.0 401.4 L1685.7 403.3 L1691.4 406.3 L1697.2 406.5 L1706.8 407.8 L1709.7 405.2 L1714.5 405.2 L1718.3 402.5 L1722.7 404.1 L1722.2 410.8 L1718.3 411.8 L1716.9 416.1 L1713.8 417.6 L1710.7 423.0 L1710.2 427.2 L1712.1 430.5 L1715.9 431.4 L1719.3 433.4 L1721.9 437.2 L1724.1 439.9 L1725.1 434.8 L1727.0 429.6 L1726.5 424.0 L1726.0 420.4 L1730.4 420.4 L1733.7 423.0 L1736.1 427.8 L1739.0 424.4 L1741.4 429.6 L1742.9 433.1 L1746.2 436.4 L1747.5 438.8 L1744.3 441.4 L1739.0 441.8 L1737.1 443.0 L1739.0 443.6 L1738.7 446.2 L1742.4 448.3 L1738.0 450.8 L1736.6 449.2 L1733.5 450.8 L1733.2 453.3 L1729.9 454.7 L1729.6 456.4 L1728.0 458.0 L1727.7 459.3 L1728.3 461.3 L1726.5 462.4 L1723.3 465.0 L1722.9 467.3 L1724.1 470.7 L1723.6 472.5 L1722.4 471.6 L1721.4 468.9 L1720.3 467.1 L1717.9 466.8 L1715.2 467.0 L1714.5 468.1 L1710.7 467.7 L1707.6 469.7 L1707.3 472.7 L1707.1 475.8 L1708.4 478.6 L1710.2 479.7 L1713.5 479.2 L1714.0 476.8 L1717.2 476.3 L1716.8 479.4 L1716.1 481.9 L1719.8 482.0 L1720.9 483.1 L1720.6 486.9 L1722.7 488.9 L1724.6 488.3 L1726.3 489.2 L1726.5 490.3 L1724.8 490.3 L1723.7 490.5 L1722.4 489.6 L1718.6 487.4 L1717.8 485.6 L1716.9 484.9 L1713.2 484.0 L1710.7 481.9 L1708.3 482.2 L1703.9 480.6 L1699.6 477.9 L1699.6 475.3 L1696.9 472.4 L1694.5 469.7 L1692.6 466.9 L1690.8 465.3 L1691.9 468.4 L1693.4 470.5 L1695.3 474.1 L1695.1 474.8 L1693.2 472.9 L1691.2 469.4 L1690.7 467.3 L1689.0 465.2 L1688.4 464.2 L1687.1 462.6 L1685.1 462.0 L1683.8 459.8 L1682.8 458.0 L1682.0 455.7 L1681.4 452.3 L1681.8 447.3 L1681.1 444.3 L1682.8 443.6 L1680.9 441.8 L1678.2 440.6 L1675.9 435.1 L1673.2 430.5 L1670.3 427.6 L1666.9 425.6 L1662.6 425.0 L1660.2 423.0 L1657.3 425.6 L1655.1 426.5 L1653.5 430.5 L1650.6 431.9 L1647.2 433.4 L1643.9 434.4 L1645.6 432.8 L1649.6 427.8 L1647.7 427.4 L1645.3 425.2 L1642.7 423.4 L1641.9 420.4 L1643.7 418.5 L1646.3 415.7 L1641.2 415.4 L1639.5 413.2Z'/><path d='M1726.3 489.2 L1728.0 488.3 L1728.6 487.1 L1730.8 486.6 L1732.3 485.5 L1732.5 486.9 L1733.9 486.4 L1735.6 487.4 L1739.5 487.3 L1741.6 487.2 L1742.9 489.1 L1744.8 490.8 L1746.2 491.7 L1749.1 491.9 L1751.3 493.2 L1752.5 495.8 L1752.9 497.5 L1754.6 498.5 L1758.2 499.7 L1761.1 500.3 L1764.0 501.1 L1767.2 502.7 L1767.6 504.7 L1766.9 506.7 L1765.0 508.9 L1763.6 510.4 L1763.3 514.6 L1762.6 517.1 L1760.8 519.7 L1758.7 520.2 L1756.3 521.3 L1754.4 523.2 L1754.2 525.9 L1752.9 528.3 L1750.5 531.7 L1749.1 533.1 L1746.7 533.2 L1745.1 532.5 L1746.0 534.6 L1745.7 537.3 L1741.2 538.1 L1741.1 540.4 L1738.5 540.8 L1739.0 542.7 L1738.0 546.0 L1736.1 547.8 L1737.8 549.9 L1735.2 553.5 L1734.7 556.2 L1735.4 558.1 L1737.1 561.1 L1734.2 561.9 L1731.3 559.4 L1729.3 556.5 L1728.5 550.9 L1729.6 547.1 L1730.4 542.1 L1730.3 537.0 L1731.3 533.5 L1732.3 527.7 L1732.5 523.4 L1733.3 520.2 L1733.5 515.4 L1732.3 514.4 L1728.9 512.6 L1727.7 510.6 L1726.3 508.1 L1724.6 504.7 L1723.0 502.8 L1723.6 500.9 L1724.1 499.6 L1723.3 498.5 L1724.1 496.5 L1725.1 495.9 L1726.5 494.1 L1726.5 491.2 L1726.3 489.2Z'/><path d='M1784.6 476.8 L1785.6 473.9 L1787.1 471.6 L1788.5 469.7 L1791.4 467.8 L1791.7 465.6 L1792.8 463.5 L1794.5 462.4 L1795.3 460.6 L1798.9 461.4 L1802.0 459.8 L1804.8 459.3 L1809.2 459.3 L1810.8 458.9 L1811.7 459.4 L1811.1 461.0 L1811.6 462.0 L1810.7 462.8 L1812.1 463.8 L1815.6 464.7 L1816.2 465.8 L1819.3 466.9 L1820.3 466.1 L1820.2 464.8 L1822.6 464.1 L1825.0 465.1 L1828.9 466.2 L1831.8 465.9 L1833.9 465.8 L1834.2 468.9 L1833.0 469.2 L1832.1 467.4 L1832.3 467.9 L1835.1 473.7 L1836.6 476.3 L1838.0 479.9 L1839.2 482.4 L1840.9 484.1 L1842.5 485.4 L1843.3 486.4 L1850.2 486.0 L1850.0 487.4 L1849.1 489.8 L1847.1 493.2 L1845.2 495.4 L1842.8 498.0 L1840.9 499.2 L1839.4 500.9 L1838.5 502.8 L1839.0 505.2 L1839.4 507.6 L1839.9 511.6 L1839.0 513.6 L1836.6 515.1 L1834.6 517.6 L1835.1 520.7 L1832.5 523.3 L1832.2 526.1 L1830.3 528.9 L1827.9 530.9 L1825.6 532.3 L1822.6 532.3 L1820.2 533.2 L1818.8 532.4 L1818.5 530.0 L1817.6 528.3 L1815.7 524.5 L1814.9 520.2 L1813.8 517.6 L1812.3 514.4 L1812.8 511.6 L1814.2 508.1 L1813.5 505.7 L1812.7 503.3 L1811.6 501.2 L1809.7 498.5 L1810.4 496.5 L1810.1 493.8 L1809.2 493.1 L1806.8 493.4 L1805.3 491.4 L1802.4 491.5 L1799.1 492.9 L1796.7 492.5 L1793.8 493.3 L1791.9 492.2 L1789.9 490.9 L1788.2 489.3 L1786.9 487.3 L1785.1 485.6 L1784.2 483.2 L1785.1 481.7 L1785.4 478.6 L1784.6 476.8Z'/><path d='M1791.9 459.2 L1792.5 457.0 L1792.0 455.2 L1792.5 452.9 L1792.1 451.6 L1793.3 450.7 L1796.2 451.0 L1799.6 451.1 L1799.8 448.7 L1799.6 446.9 L1798.1 445.5 L1796.5 444.8 L1796.7 443.8 L1799.4 443.8 L1799.8 442.3 L1802.4 441.5 L1803.4 440.2 L1804.8 439.6 L1805.5 437.4 L1807.2 436.6 L1809.2 436.1 L1809.3 433.1 L1808.9 430.9 L1810.9 429.4 L1811.2 431.7 L1810.9 433.8 L1812.5 435.1 L1814.5 435.8 L1817.3 434.4 L1819.7 434.9 L1821.4 433.6 L1821.2 430.9 L1822.6 429.4 L1824.4 430.1 L1823.7 427.8 L1823.6 426.3 L1827.9 425.9 L1830.0 425.2 L1828.9 424.4 L1826.5 424.2 L1823.0 425.2 L1821.6 423.6 L1821.4 420.0 L1822.9 417.2 L1825.3 414.5 L1825.2 412.9 L1822.4 412.7 L1821.2 415.7 L1819.3 418.3 L1817.8 420.4 L1817.4 423.0 L1819.1 425.0 L1818.9 426.5 L1816.9 429.3 L1816.4 431.9 L1814.6 433.3 L1813.3 433.1 L1813.0 430.9 L1812.3 428.7 L1811.6 426.9 L1811.1 425.6 L1809.7 427.1 L1808.7 428.5 L1807.2 428.3 L1806.3 426.9 L1806.0 424.0 L1805.8 421.4 L1807.2 419.4 L1809.2 417.9 L1811.1 415.7 L1812.8 412.7 L1813.8 408.6 L1815.8 406.0 L1817.3 404.1 L1819.7 401.7 L1822.1 400.5 L1825.5 398.8 L1828.9 399.6 L1830.8 401.9 L1832.7 403.6 L1836.1 404.7 L1840.4 408.1 L1840.7 411.3 L1837.5 412.2 L1834.4 413.2 L1834.2 415.7 L1836.6 417.2 L1839.0 415.7 L1840.9 412.7 L1843.3 411.8 L1843.6 407.3 L1845.7 407.8 L1848.1 406.8 L1852.4 405.7 L1856.3 406.0 L1859.1 402.5 L1863.0 403.9 L1866.4 406.0 L1865.7 400.5 L1865.2 397.3 L1867.3 392.8 L1869.7 393.5 L1871.0 395.4 L1870.7 399.1 L1871.6 406.0 L1874.0 404.7 L1873.6 398.5 L1876.4 395.1 L1878.4 391.2 L1884.6 388.4 L1884.3 385.8 L1889.4 383.6 L1895.2 381.6 L1901.0 374.8 L1903.8 378.7 L1907.7 380.4 L1910.1 383.6 L1909.9 390.8 L1914.9 391.2 L1920.2 390.8 L1924.5 393.5 L1925.5 398.5 L1927.9 397.0 L1930.8 397.3 L1934.6 394.8 L1936.5 393.5 L1941.3 395.1 L1945.6 397.6 L1948.0 399.3 L1952.9 399.3 L1955.3 401.9 L1959.6 403.0 L1964.4 401.7 L1969.2 402.5 L1974.0 405.2 L1977.8 409.1 L1980.7 410.1 L1983.6 412.2 L1979.8 415.7 L1976.4 415.0 L1975.0 413.9 L1972.6 416.8 L1973.0 420.2 L1970.6 420.0 L1967.8 421.4 L1964.7 425.0 L1960.5 424.4 L1959.4 425.4 L1958.1 426.5 L1956.7 428.7 L1957.9 431.9 L1956.7 434.3 L1954.8 437.2 L1953.3 437.7 L1951.6 440.2 L1950.9 436.4 L1950.7 431.4 L1951.7 429.1 L1953.3 428.7 L1955.3 425.9 L1958.1 421.4 L1954.8 421.8 L1950.9 422.4 L1947.6 426.5 L1942.8 426.3 L1938.4 426.3 L1936.0 428.2 L1932.7 433.1 L1931.2 434.8 L1933.8 435.9 L1936.7 437.7 L1936.8 441.8 L1936.0 444.1 L1934.1 446.2 L1931.4 450.8 L1928.8 451.9 L1926.6 452.6 L1925.7 454.5 L1924.5 457.6 L1925.4 461.0 L1923.4 462.0 L1922.4 462.1 L1922.6 459.8 L1922.1 458.3 L1920.9 457.4 L1921.3 456.1 L1920.5 455.5 L1917.8 456.9 L1917.8 455.2 L1918.4 454.9 L1917.3 454.5 L1915.4 456.5 L1914.4 456.5 L1913.9 457.5 L1915.1 458.7 L1915.9 459.1 L1917.1 458.2 L1918.7 458.7 L1917.3 459.8 L1915.9 461.5 L1916.6 462.4 L1917.6 464.4 L1918.2 466.1 L1918.1 467.8 L1917.8 469.1 L1916.0 471.9 L1914.9 473.2 L1913.0 474.9 L1910.8 475.5 L1908.2 476.3 L1907.2 477.4 L1906.5 476.3 L1905.1 476.2 L1903.6 477.4 L1902.6 478.9 L1903.4 480.4 L1904.8 481.9 L1906.0 484.4 L1906.0 486.4 L1904.3 487.4 L1903.4 488.3 L1901.9 489.2 L1901.9 487.8 L1901.3 487.4 L1900.0 486.9 L1899.5 485.7 L1898.1 485.2 L1897.1 484.4 L1896.3 487.4 L1896.6 488.6 L1897.4 489.8 L1897.6 491.2 L1898.6 491.9 L1900.4 493.1 L1900.4 494.6 L1901.1 496.2 L1900.5 496.3 L1898.4 494.8 L1897.4 492.7 L1897.1 491.3 L1895.5 489.5 L1895.9 487.4 L1895.7 484.9 L1894.9 481.9 L1894.4 481.0 L1892.7 482.2 L1891.6 481.9 L1891.9 479.9 L1891.0 478.2 L1889.8 477.2 L1889.4 476.0 L1888.1 475.2 L1886.5 475.9 L1884.6 476.8 L1884.4 477.9 L1882.7 478.6 L1880.1 480.9 L1878.2 482.4 L1878.1 484.1 L1878.0 486.4 L1877.8 487.5 L1876.4 488.8 L1875.5 489.8 L1874.5 488.9 L1873.8 486.6 L1872.9 485.2 L1872.1 482.9 L1871.4 480.4 L1871.1 478.1 L1871.0 476.8 L1870.7 476.4 L1870.5 475.6 L1869.0 477.1 L1867.3 475.5 L1868.5 474.9 L1867.0 474.5 L1865.9 473.8 L1865.2 472.4 L1863.0 472.5 L1860.1 472.6 L1857.2 472.0 L1856.1 471.7 L1855.7 470.5 L1853.6 471.1 L1852.4 470.7 L1851.0 469.7 L1849.8 468.6 L1849.2 467.1 L1848.0 466.9 L1847.1 467.4 L1847.5 468.9 L1848.4 470.0 L1849.2 471.0 L1849.8 472.7 L1850.6 472.5 L1850.6 473.5 L1852.4 473.6 L1854.3 472.1 L1855.1 471.4 L1855.3 473.2 L1856.2 473.9 L1857.5 474.3 L1858.5 475.3 L1857.2 477.4 L1856.6 478.4 L1855.6 479.3 L1854.1 480.2 L1851.2 482.0 L1848.1 483.4 L1844.7 484.8 L1842.8 485.2 L1842.1 483.4 L1841.9 481.4 L1840.9 479.9 L1839.4 477.9 L1838.6 476.3 L1838.0 474.3 L1836.8 472.7 L1835.6 470.5 L1834.4 469.3 L1834.0 465.8 L1834.2 465.3 L1834.8 463.9 L1835.4 462.1 L1835.4 460.6 L1835.8 459.5 L1834.2 459.4 L1832.2 460.3 L1830.3 459.8 L1828.9 459.5 L1827.3 458.9 L1827.1 457.5 L1826.3 456.5 L1826.3 455.4 L1827.4 454.9 L1828.9 454.1 L1831.0 454.1 L1833.2 452.9 L1834.8 452.9 L1837.8 454.4 L1840.9 453.6 L1841.0 452.0 L1839.4 451.1 L1838.0 449.9 L1836.6 448.7 L1837.7 447.2 L1838.7 446.1 L1836.9 446.2 L1834.6 447.6 L1835.1 448.6 L1833.7 449.6 L1832.2 448.6 L1833.2 447.7 L1831.3 446.8 L1829.8 448.0 L1829.4 448.8 L1828.6 450.2 L1827.9 451.4 L1827.7 452.8 L1827.9 453.7 L1826.5 454.7 L1825.5 454.5 L1824.1 454.9 L1822.9 455.1 L1823.6 456.7 L1822.6 458.1 L1823.1 459.8 L1821.9 459.4 L1821.2 457.6 L1820.5 456.0 L1819.7 454.2 L1819.6 452.9 L1818.8 452.3 L1816.4 451.0 L1815.4 449.5 L1814.5 448.7 L1814.1 447.9 L1812.8 448.6 L1812.9 450.0 L1814.1 451.0 L1815.2 452.8 L1816.6 453.2 L1818.3 454.6 L1818.8 455.4 L1818.1 455.1 L1816.9 456.1 L1817.4 456.9 L1816.4 458.1 L1816.1 457.4 L1816.6 456.4 L1815.9 455.4 L1814.9 454.6 L1814.0 453.8 L1812.3 452.7 L1811.2 451.8 L1810.8 450.4 L1809.5 449.8 L1808.2 450.6 L1807.2 451.5 L1805.4 451.1 L1804.0 451.5 L1804.1 452.9 L1802.9 454.0 L1801.8 454.6 L1801.0 456.2 L1800.5 457.6 L1799.8 458.6 L1798.9 459.5 L1796.8 459.5 L1795.8 460.4 L1794.9 459.4 L1793.8 458.9 L1792.4 459.2 L1791.9 459.2Z'/><path d='M1795.5 441.7 L1798.1 440.8 L1801.0 440.6 L1802.3 440.0 L1802.6 437.7 L1801.3 436.6 L1800.7 434.8 L1799.5 432.9 L1798.9 431.7 L1799.3 429.4 L1797.8 427.6 L1796.2 427.6 L1795.5 430.0 L1795.0 431.7 L1796.0 433.4 L1796.4 434.4 L1797.7 434.3 L1798.1 435.8 L1796.6 436.7 L1796.0 439.1 L1797.9 439.7 L1796.7 440.6 L1795.5 441.7Z'/><path d='M1795.2 438.5 L1795.2 436.7 L1795.0 435.3 L1795.5 434.4 L1794.6 433.6 L1793.0 433.6 L1791.4 435.3 L1791.5 436.7 L1791.1 439.3 L1793.1 439.4 L1795.2 438.5Z'/><path d='M1777.6 413.4 L1779.6 411.3 L1783.2 411.8 L1786.6 411.0 L1788.0 413.9 L1787.1 415.9 L1783.2 418.1 L1779.4 417.2 L1780.0 415.7 L1777.6 413.4Z'/><path d='M1925.7 463.8 L1926.1 465.8 L1927.1 465.7 L1927.9 463.6 L1927.5 462.7 L1928.8 462.7 L1929.8 463.3 L1930.9 462.9 L1932.5 462.4 L1934.4 461.9 L1935.6 461.4 L1936.3 460.4 L1936.5 457.6 L1937.5 456.1 L1937.0 453.7 L1936.0 454.9 L1935.6 455.9 L1935.5 458.0 L1934.1 458.8 L1932.5 458.9 L1931.7 460.7 L1929.0 461.0 L1926.9 462.1 L1925.7 463.8Z'/><path d='M1935.6 453.6 L1936.7 453.2 L1938.7 452.9 L1940.8 451.4 L1939.9 450.3 L1937.5 448.4 L1936.8 449.8 L1937.0 451.2 L1935.8 451.4 L1935.6 453.6Z'/><path d='M1937.5 447.6 L1938.9 446.5 L1938.6 443.3 L1940.0 443.3 L1938.4 439.6 L1938.7 436.4 L1938.1 435.1 L1937.3 437.2 L1937.5 441.1 L1937.5 447.6Z'/><path d='M1916.5 474.8 L1917.1 475.8 L1918.2 472.9 L1917.8 472.4 L1916.5 474.8Z'/><path d='M1905.4 478.7 L1907.2 477.8 L1907.7 478.3 L1906.2 479.7 L1905.4 478.7Z'/><path d='M1877.8 488.0 L1879.6 490.1 L1879.0 491.5 L1877.9 491.7 L1877.7 489.6 L1877.8 488.0Z'/><path d='M1892.6 492.1 L1894.7 492.5 L1897.4 495.4 L1900.8 498.5 L1902.9 500.6 L1902.8 503.1 L1901.4 503.2 L1899.3 501.3 L1897.9 499.4 L1895.8 495.9 L1893.7 494.1 L1892.6 492.1Z'/><path d='M1902.1 504.1 L1902.9 503.2 L1905.1 503.6 L1907.7 503.8 L1909.3 504.1 L1911.0 504.9 L1911.0 505.8 L1906.7 505.4 L1903.4 504.6 L1902.1 504.1Z'/><path d='M1905.8 496.1 L1906.3 498.5 L1907.0 500.3 L1908.4 500.5 L1911.0 501.0 L1912.5 501.3 L1913.0 499.7 L1913.9 497.5 L1914.3 496.5 L1915.3 496.1 L1914.1 493.7 L1915.0 492.7 L1913.6 490.9 L1913.0 490.9 L1912.0 492.5 L1910.6 493.2 L1909.1 494.7 L1907.9 495.1 L1906.3 495.6 L1905.8 496.1Z'/><path d='M1915.4 498.0 L1915.9 500.9 L1916.7 502.9 L1917.3 501.3 L1919.0 502.1 L1917.6 499.4 L1919.6 498.5 L1917.3 498.3 L1916.8 497.0 L1920.9 496.3 L1920.7 497.1 L1916.3 496.8 L1915.4 498.0Z'/><path d='M1926.9 498.7 L1929.8 498.4 L1931.7 499.4 L1933.6 499.1 L1936.5 500.0 L1938.9 500.9 L1941.1 502.3 L1942.8 503.5 L1943.1 505.0 L1944.0 506.2 L1945.9 507.5 L1944.9 507.6 L1942.3 507.3 L1941.2 505.2 L1939.4 504.8 L1938.7 506.2 L1936.5 506.3 L1934.6 505.3 L1933.4 502.7 L1930.9 501.7 L1928.8 501.4 L1927.9 500.2 L1929.3 499.6 L1927.8 499.0 L1926.9 498.7Z'/><path d='M1916.9 479.4 L1918.4 479.4 L1918.7 480.9 L1917.9 482.1 L1920.2 483.9 L1920.0 484.9 L1918.4 484.1 L1916.9 483.6 L1916.3 481.9 L1916.9 479.4Z'/><path d='M1918.3 490.8 L1919.7 490.0 L1921.6 488.0 L1922.7 490.5 L1921.6 492.1 L1920.2 491.2 L1918.3 490.8Z'/><path d='M1909.9 519.4 L1910.1 522.9 L1910.8 523.9 L1911.5 527.2 L1911.5 531.7 L1912.0 532.9 L1914.4 533.5 L1916.3 532.3 L1919.7 532.2 L1922.1 530.3 L1925.0 529.7 L1927.1 529.4 L1929.3 530.2 L1930.8 533.0 L1931.7 532.5 L1933.4 530.9 L1933.2 534.2 L1935.1 534.3 L1935.6 536.4 L1937.2 537.4 L1939.4 537.4 L1941.6 538.3 L1943.2 536.8 L1945.2 536.4 L1945.6 534.0 L1946.6 531.7 L1948.0 528.9 L1948.6 526.3 L1948.2 522.9 L1946.9 521.8 L1945.9 519.7 L1944.7 518.7 L1944.0 517.4 L1942.3 516.3 L1941.5 515.3 L1940.8 513.1 L1940.6 512.1 L1939.9 511.3 L1939.0 510.9 L1938.9 509.1 L1938.0 507.8 L1937.2 509.6 L1937.0 511.6 L1936.8 513.6 L1936.1 514.7 L1934.9 514.4 L1933.4 513.4 L1931.5 512.1 L1932.5 510.6 L1932.5 509.3 L1931.2 509.1 L1929.8 509.0 L1928.3 508.5 L1927.2 509.3 L1926.1 510.3 L1925.6 512.0 L1924.0 512.0 L1923.1 510.9 L1921.9 511.6 L1920.6 513.4 L1919.7 514.4 L1918.4 515.1 L1917.5 516.6 L1915.4 517.2 L1913.2 517.7 L1911.3 518.7 L1909.9 519.4Z'/><path d='M1940.1 540.4 L1941.8 540.9 L1943.5 540.6 L1943.4 542.3 L1942.6 543.8 L1941.1 543.9 L1940.2 541.9 L1940.1 540.4Z'/><path d='M1967.0 532.9 L1968.5 533.8 L1970.0 535.8 L1972.6 536.7 L1972.0 538.5 L1970.9 539.5 L1969.4 541.5 L1968.8 541.2 L1969.2 539.3 L1968.0 538.6 L1968.8 537.3 L1968.7 535.3 L1967.0 532.9Z'/><path d='M1967.0 540.1 L1968.5 541.2 L1968.0 542.4 L1967.1 544.2 L1965.5 545.4 L1965.0 547.1 L1963.7 548.2 L1961.0 547.5 L1961.3 546.4 L1962.8 544.7 L1965.2 543.0 L1966.4 540.8 L1967.0 540.1Z'/><path d='M1848.4 509.1 L1849.4 512.4 L1848.9 514.1 L1847.8 517.1 L1846.3 522.2 L1844.4 522.9 L1843.3 521.3 L1842.6 519.0 L1843.7 516.6 L1843.3 514.4 L1843.8 513.3 L1845.5 512.8 L1847.0 511.1 L1848.4 509.1Z'/><path d='M1744.0 445.3 L1747.2 443.3 L1747.7 439.6 L1749.8 443.3 L1750.3 445.5 L1749.6 446.6 L1747.2 445.5 L1744.0 445.3Z'/><path d='M1719.3 475.9 L1722.2 475.1 L1724.6 474.9 L1727.0 476.3 L1729.7 477.7 L1726.5 478.0 L1724.6 476.3 L1721.2 476.1 L1719.3 475.9Z'/><path d='M1729.4 478.1 L1732.3 478.0 L1735.3 479.3 L1732.8 479.9 L1729.5 479.6 L1729.4 478.1Z'/><path d='M1931.7 389.4 L1936.5 390.8 L1941.3 385.8 L1937.5 382.0 L1932.7 383.6 L1931.7 389.4Z'/><path d='M1972.6 399.1 L1974.8 398.2 L1975.9 397.0 L1973.0 397.3 L1972.6 399.1Z'/></g><clipPath id='land1628'><path d='M1639.5 413.2 L1641.5 406.5 L1644.3 403.3 L1650.6 398.2 L1656.8 400.5 L1665.5 402.8 L1671.2 403.9 L1678.0 401.4 L1685.7 403.3 L1691.4 406.3 L1697.2 406.5 L1706.8 407.8 L1709.7 405.2 L1714.5 405.2 L1718.3 402.5 L1722.7 404.1 L1722.2 410.8 L1718.3 411.8 L1716.9 416.1 L1713.8 417.6 L1710.7 423.0 L1710.2 427.2 L1712.1 430.5 L1715.9 431.4 L1719.3 433.4 L1721.9 437.2 L1724.1 439.9 L1725.1 434.8 L1727.0 429.6 L1726.5 424.0 L1726.0 420.4 L1730.4 420.4 L1733.7 423.0 L1736.1 427.8 L1739.0 424.4 L1741.4 429.6 L1742.9 433.1 L1746.2 436.4 L1747.5 438.8 L1744.3 441.4 L1739.0 441.8 L1737.1 443.0 L1739.0 443.6 L1738.7 446.2 L1742.4 448.3 L1738.0 450.8 L1736.6 449.2 L1733.5 450.8 L1733.2 453.3 L1729.9 454.7 L1729.6 456.4 L1728.0 458.0 L1727.7 459.3 L1728.3 461.3 L1726.5 462.4 L1723.3 465.0 L1722.9 467.3 L1724.1 470.7 L1723.6 472.5 L1722.4 471.6 L1721.4 468.9 L1720.3 467.1 L1717.9 466.8 L1715.2 467.0 L1714.5 468.1 L1710.7 467.7 L1707.6 469.7 L1707.3 472.7 L1707.1 475.8 L1708.4 478.6 L1710.2 479.7 L1713.5 479.2 L1714.0 476.8 L1717.2 476.3 L1716.8 479.4 L1716.1 481.9 L1719.8 482.0 L1720.9 483.1 L1720.6 486.9 L1722.7 488.9 L1724.6 488.3 L1726.3 489.2 L1726.5 490.3 L1724.8 490.3 L1723.7 490.5 L1722.4 489.6 L1718.6 487.4 L1717.8 485.6 L1716.9 484.9 L1713.2 484.0 L1710.7 481.9 L1708.3 482.2 L1703.9 480.6 L1699.6 477.9 L1699.6 475.3 L1696.9 472.4 L1694.5 469.7 L1692.6 466.9 L1690.8 465.3 L1691.9 468.4 L1693.4 470.5 L1695.3 474.1 L1695.1 474.8 L1693.2 472.9 L1691.2 469.4 L1690.7 467.3 L1689.0 465.2 L1688.4 464.2 L1687.1 462.6 L1685.1 462.0 L1683.8 459.8 L1682.8 458.0 L1682.0 455.7 L1681.4 452.3 L1681.8 447.3 L1681.1 444.3 L1682.8 443.6 L1680.9 441.8 L1678.2 440.6 L1675.9 435.1 L1673.2 430.5 L1670.3 427.6 L1666.9 425.6 L1662.6 425.0 L1660.2 423.0 L1657.3 425.6 L1655.1 426.5 L1653.5 430.5 L1650.6 431.9 L1647.2 433.4 L1643.9 434.4 L1645.6 432.8 L1649.6 427.8 L1647.7 427.4 L1645.3 425.2 L1642.7 423.4 L1641.9 420.4 L1643.7 418.5 L1646.3 415.7 L1641.2 415.4 L1639.5 413.2Z'/><path d='M1726.3 489.2 L1728.0 488.3 L1728.6 487.1 L1730.8 486.6 L1732.3 485.5 L1732.5 486.9 L1733.9 486.4 L1735.6 487.4 L1739.5 487.3 L1741.6 487.2 L1742.9 489.1 L1744.8 490.8 L1746.2 491.7 L1749.1 491.9 L1751.3 493.2 L1752.5 495.8 L1752.9 497.5 L1754.6 498.5 L1758.2 499.7 L1761.1 500.3 L1764.0 501.1 L1767.2 502.7 L1767.6 504.7 L1766.9 506.7 L1765.0 508.9 L1763.6 510.4 L1763.3 514.6 L1762.6 517.1 L1760.8 519.7 L1758.7 520.2 L1756.3 521.3 L1754.4 523.2 L1754.2 525.9 L1752.9 528.3 L1750.5 531.7 L1749.1 533.1 L1746.7 533.2 L1745.1 532.5 L1746.0 534.6 L1745.7 537.3 L1741.2 538.1 L1741.1 540.4 L1738.5 540.8 L1739.0 542.7 L1738.0 546.0 L1736.1 547.8 L1737.8 549.9 L1735.2 553.5 L1734.7 556.2 L1735.4 558.1 L1737.1 561.1 L1734.2 561.9 L1731.3 559.4 L1729.3 556.5 L1728.5 550.9 L1729.6 547.1 L1730.4 542.1 L1730.3 537.0 L1731.3 533.5 L1732.3 527.7 L1732.5 523.4 L1733.3 520.2 L1733.5 515.4 L1732.3 514.4 L1728.9 512.6 L1727.7 510.6 L1726.3 508.1 L1724.6 504.7 L1723.0 502.8 L1723.6 500.9 L1724.1 499.6 L1723.3 498.5 L1724.1 496.5 L1725.1 495.9 L1726.5 494.1 L1726.5 491.2 L1726.3 489.2Z'/><path d='M1784.6 476.8 L1785.6 473.9 L1787.1 471.6 L1788.5 469.7 L1791.4 467.8 L1791.7 465.6 L1792.8 463.5 L1794.5 462.4 L1795.3 460.6 L1798.9 461.4 L1802.0 459.8 L1804.8 459.3 L1809.2 459.3 L1810.8 458.9 L1811.7 459.4 L1811.1 461.0 L1811.6 462.0 L1810.7 462.8 L1812.1 463.8 L1815.6 464.7 L1816.2 465.8 L1819.3 466.9 L1820.3 466.1 L1820.2 464.8 L1822.6 464.1 L1825.0 465.1 L1828.9 466.2 L1831.8 465.9 L1833.9 465.8 L1834.2 468.9 L1833.0 469.2 L1832.1 467.4 L1832.3 467.9 L1835.1 473.7 L1836.6 476.3 L1838.0 479.9 L1839.2 482.4 L1840.9 484.1 L1842.5 485.4 L1843.3 486.4 L1850.2 486.0 L1850.0 487.4 L1849.1 489.8 L1847.1 493.2 L1845.2 495.4 L1842.8 498.0 L1840.9 499.2 L1839.4 500.9 L1838.5 502.8 L1839.0 505.2 L1839.4 507.6 L1839.9 511.6 L1839.0 513.6 L1836.6 515.1 L1834.6 517.6 L1835.1 520.7 L1832.5 523.3 L1832.2 526.1 L1830.3 528.9 L1827.9 530.9 L1825.6 532.3 L1822.6 532.3 L1820.2 533.2 L1818.8 532.4 L1818.5 530.0 L1817.6 528.3 L1815.7 524.5 L1814.9 520.2 L1813.8 517.6 L1812.3 514.4 L1812.8 511.6 L1814.2 508.1 L1813.5 505.7 L1812.7 503.3 L1811.6 501.2 L1809.7 498.5 L1810.4 496.5 L1810.1 493.8 L1809.2 493.1 L1806.8 493.4 L1805.3 491.4 L1802.4 491.5 L1799.1 492.9 L1796.7 492.5 L1793.8 493.3 L1791.9 492.2 L1789.9 490.9 L1788.2 489.3 L1786.9 487.3 L1785.1 485.6 L1784.2 483.2 L1785.1 481.7 L1785.4 478.6 L1784.6 476.8Z'/><path d='M1791.9 459.2 L1792.5 457.0 L1792.0 455.2 L1792.5 452.9 L1792.1 451.6 L1793.3 450.7 L1796.2 451.0 L1799.6 451.1 L1799.8 448.7 L1799.6 446.9 L1798.1 445.5 L1796.5 444.8 L1796.7 443.8 L1799.4 443.8 L1799.8 442.3 L1802.4 441.5 L1803.4 440.2 L1804.8 439.6 L1805.5 437.4 L1807.2 436.6 L1809.2 436.1 L1809.3 433.1 L1808.9 430.9 L1810.9 429.4 L1811.2 431.7 L1810.9 433.8 L1812.5 435.1 L1814.5 435.8 L1817.3 434.4 L1819.7 434.9 L1821.4 433.6 L1821.2 430.9 L1822.6 429.4 L1824.4 430.1 L1823.7 427.8 L1823.6 426.3 L1827.9 425.9 L1830.0 425.2 L1828.9 424.4 L1826.5 424.2 L1823.0 425.2 L1821.6 423.6 L1821.4 420.0 L1822.9 417.2 L1825.3 414.5 L1825.2 412.9 L1822.4 412.7 L1821.2 415.7 L1819.3 418.3 L1817.8 420.4 L1817.4 423.0 L1819.1 425.0 L1818.9 426.5 L1816.9 429.3 L1816.4 431.9 L1814.6 433.3 L1813.3 433.1 L1813.0 430.9 L1812.3 428.7 L1811.6 426.9 L1811.1 425.6 L1809.7 427.1 L1808.7 428.5 L1807.2 428.3 L1806.3 426.9 L1806.0 424.0 L1805.8 421.4 L1807.2 419.4 L1809.2 417.9 L1811.1 415.7 L1812.8 412.7 L1813.8 408.6 L1815.8 406.0 L1817.3 404.1 L1819.7 401.7 L1822.1 400.5 L1825.5 398.8 L1828.9 399.6 L1830.8 401.9 L1832.7 403.6 L1836.1 404.7 L1840.4 408.1 L1840.7 411.3 L1837.5 412.2 L1834.4 413.2 L1834.2 415.7 L1836.6 417.2 L1839.0 415.7 L1840.9 412.7 L1843.3 411.8 L1843.6 407.3 L1845.7 407.8 L1848.1 406.8 L1852.4 405.7 L1856.3 406.0 L1859.1 402.5 L1863.0 403.9 L1866.4 406.0 L1865.7 400.5 L1865.2 397.3 L1867.3 392.8 L1869.7 393.5 L1871.0 395.4 L1870.7 399.1 L1871.6 406.0 L1874.0 404.7 L1873.6 398.5 L1876.4 395.1 L1878.4 391.2 L1884.6 388.4 L1884.3 385.8 L1889.4 383.6 L1895.2 381.6 L1901.0 374.8 L1903.8 378.7 L1907.7 380.4 L1910.1 383.6 L1909.9 390.8 L1914.9 391.2 L1920.2 390.8 L1924.5 393.5 L1925.5 398.5 L1927.9 397.0 L1930.8 397.3 L1934.6 394.8 L1936.5 393.5 L1941.3 395.1 L1945.6 397.6 L1948.0 399.3 L1952.9 399.3 L1955.3 401.9 L1959.6 403.0 L1964.4 401.7 L1969.2 402.5 L1974.0 405.2 L1977.8 409.1 L1980.7 410.1 L1983.6 412.2 L1979.8 415.7 L1976.4 415.0 L1975.0 413.9 L1972.6 416.8 L1973.0 420.2 L1970.6 420.0 L1967.8 421.4 L1964.7 425.0 L1960.5 424.4 L1959.4 425.4 L1958.1 426.5 L1956.7 428.7 L1957.9 431.9 L1956.7 434.3 L1954.8 437.2 L1953.3 437.7 L1951.6 440.2 L1950.9 436.4 L1950.7 431.4 L1951.7 429.1 L1953.3 428.7 L1955.3 425.9 L1958.1 421.4 L1954.8 421.8 L1950.9 422.4 L1947.6 426.5 L1942.8 426.3 L1938.4 426.3 L1936.0 428.2 L1932.7 433.1 L1931.2 434.8 L1933.8 435.9 L1936.7 437.7 L1936.8 441.8 L1936.0 444.1 L1934.1 446.2 L1931.4 450.8 L1928.8 451.9 L1926.6 452.6 L1925.7 454.5 L1924.5 457.6 L1925.4 461.0 L1923.4 462.0 L1922.4 462.1 L1922.6 459.8 L1922.1 458.3 L1920.9 457.4 L1921.3 456.1 L1920.5 455.5 L1917.8 456.9 L1917.8 455.2 L1918.4 454.9 L1917.3 454.5 L1915.4 456.5 L1914.4 456.5 L1913.9 457.5 L1915.1 458.7 L1915.9 459.1 L1917.1 458.2 L1918.7 458.7 L1917.3 459.8 L1915.9 461.5 L1916.6 462.4 L1917.6 464.4 L1918.2 466.1 L1918.1 467.8 L1917.8 469.1 L1916.0 471.9 L1914.9 473.2 L1913.0 474.9 L1910.8 475.5 L1908.2 476.3 L1907.2 477.4 L1906.5 476.3 L1905.1 476.2 L1903.6 477.4 L1902.6 478.9 L1903.4 480.4 L1904.8 481.9 L1906.0 484.4 L1906.0 486.4 L1904.3 487.4 L1903.4 488.3 L1901.9 489.2 L1901.9 487.8 L1901.3 487.4 L1900.0 486.9 L1899.5 485.7 L1898.1 485.2 L1897.1 484.4 L1896.3 487.4 L1896.6 488.6 L1897.4 489.8 L1897.6 491.2 L1898.6 491.9 L1900.4 493.1 L1900.4 494.6 L1901.1 496.2 L1900.5 496.3 L1898.4 494.8 L1897.4 492.7 L1897.1 491.3 L1895.5 489.5 L1895.9 487.4 L1895.7 484.9 L1894.9 481.9 L1894.4 481.0 L1892.7 482.2 L1891.6 481.9 L1891.9 479.9 L1891.0 478.2 L1889.8 477.2 L1889.4 476.0 L1888.1 475.2 L1886.5 475.9 L1884.6 476.8 L1884.4 477.9 L1882.7 478.6 L1880.1 480.9 L1878.2 482.4 L1878.1 484.1 L1878.0 486.4 L1877.8 487.5 L1876.4 488.8 L1875.5 489.8 L1874.5 488.9 L1873.8 486.6 L1872.9 485.2 L1872.1 482.9 L1871.4 480.4 L1871.1 478.1 L1871.0 476.8 L1870.7 476.4 L1870.5 475.6 L1869.0 477.1 L1867.3 475.5 L1868.5 474.9 L1867.0 474.5 L1865.9 473.8 L1865.2 472.4 L1863.0 472.5 L1860.1 472.6 L1857.2 472.0 L1856.1 471.7 L1855.7 470.5 L1853.6 471.1 L1852.4 470.7 L1851.0 469.7 L1849.8 468.6 L1849.2 467.1 L1848.0 466.9 L1847.1 467.4 L1847.5 468.9 L1848.4 470.0 L1849.2 471.0 L1849.8 472.7 L1850.6 472.5 L1850.6 473.5 L1852.4 473.6 L1854.3 472.1 L1855.1 471.4 L1855.3 473.2 L1856.2 473.9 L1857.5 474.3 L1858.5 475.3 L1857.2 477.4 L1856.6 478.4 L1855.6 479.3 L1854.1 480.2 L1851.2 482.0 L1848.1 483.4 L1844.7 484.8 L1842.8 485.2 L1842.1 483.4 L1841.9 481.4 L1840.9 479.9 L1839.4 477.9 L1838.6 476.3 L1838.0 474.3 L1836.8 472.7 L1835.6 470.5 L1834.4 469.3 L1834.0 465.8 L1834.2 465.3 L1834.8 463.9 L1835.4 462.1 L1835.4 460.6 L1835.8 459.5 L1834.2 459.4 L1832.2 460.3 L1830.3 459.8 L1828.9 459.5 L1827.3 458.9 L1827.1 457.5 L1826.3 456.5 L1826.3 455.4 L1827.4 454.9 L1828.9 454.1 L1831.0 454.1 L1833.2 452.9 L1834.8 452.9 L1837.8 454.4 L1840.9 453.6 L1841.0 452.0 L1839.4 451.1 L1838.0 449.9 L1836.6 448.7 L1837.7 447.2 L1838.7 446.1 L1836.9 446.2 L1834.6 447.6 L1835.1 448.6 L1833.7 449.6 L1832.2 448.6 L1833.2 447.7 L1831.3 446.8 L1829.8 448.0 L1829.4 448.8 L1828.6 450.2 L1827.9 451.4 L1827.7 452.8 L1827.9 453.7 L1826.5 454.7 L1825.5 454.5 L1824.1 454.9 L1822.9 455.1 L1823.6 456.7 L1822.6 458.1 L1823.1 459.8 L1821.9 459.4 L1821.2 457.6 L1820.5 456.0 L1819.7 454.2 L1819.6 452.9 L1818.8 452.3 L1816.4 451.0 L1815.4 449.5 L1814.5 448.7 L1814.1 447.9 L1812.8 448.6 L1812.9 450.0 L1814.1 451.0 L1815.2 452.8 L1816.6 453.2 L1818.3 454.6 L1818.8 455.4 L1818.1 455.1 L1816.9 456.1 L1817.4 456.9 L1816.4 458.1 L1816.1 457.4 L1816.6 456.4 L1815.9 455.4 L1814.9 454.6 L1814.0 453.8 L1812.3 452.7 L1811.2 451.8 L1810.8 450.4 L1809.5 449.8 L1808.2 450.6 L1807.2 451.5 L1805.4 451.1 L1804.0 451.5 L1804.1 452.9 L1802.9 454.0 L1801.8 454.6 L1801.0 456.2 L1800.5 457.6 L1799.8 458.6 L1798.9 459.5 L1796.8 459.5 L1795.8 460.4 L1794.9 459.4 L1793.8 458.9 L1792.4 459.2 L1791.9 459.2Z'/><path d='M1795.5 441.7 L1798.1 440.8 L1801.0 440.6 L1802.3 440.0 L1802.6 437.7 L1801.3 436.6 L1800.7 434.8 L1799.5 432.9 L1798.9 431.7 L1799.3 429.4 L1797.8 427.6 L1796.2 427.6 L1795.5 430.0 L1795.0 431.7 L1796.0 433.4 L1796.4 434.4 L1797.7 434.3 L1798.1 435.8 L1796.6 436.7 L1796.0 439.1 L1797.9 439.7 L1796.7 440.6 L1795.5 441.7Z'/><path d='M1795.2 438.5 L1795.2 436.7 L1795.0 435.3 L1795.5 434.4 L1794.6 433.6 L1793.0 433.6 L1791.4 435.3 L1791.5 436.7 L1791.1 439.3 L1793.1 439.4 L1795.2 438.5Z'/><path d='M1777.6 413.4 L1779.6 411.3 L1783.2 411.8 L1786.6 411.0 L1788.0 413.9 L1787.1 415.9 L1783.2 418.1 L1779.4 417.2 L1780.0 415.7 L1777.6 413.4Z'/><path d='M1925.7 463.8 L1926.1 465.8 L1927.1 465.7 L1927.9 463.6 L1927.5 462.7 L1928.8 462.7 L1929.8 463.3 L1930.9 462.9 L1932.5 462.4 L1934.4 461.9 L1935.6 461.4 L1936.3 460.4 L1936.5 457.6 L1937.5 456.1 L1937.0 453.7 L1936.0 454.9 L1935.6 455.9 L1935.5 458.0 L1934.1 458.8 L1932.5 458.9 L1931.7 460.7 L1929.0 461.0 L1926.9 462.1 L1925.7 463.8Z'/><path d='M1935.6 453.6 L1936.7 453.2 L1938.7 452.9 L1940.8 451.4 L1939.9 450.3 L1937.5 448.4 L1936.8 449.8 L1937.0 451.2 L1935.8 451.4 L1935.6 453.6Z'/><path d='M1937.5 447.6 L1938.9 446.5 L1938.6 443.3 L1940.0 443.3 L1938.4 439.6 L1938.7 436.4 L1938.1 435.1 L1937.3 437.2 L1937.5 441.1 L1937.5 447.6Z'/><path d='M1916.5 474.8 L1917.1 475.8 L1918.2 472.9 L1917.8 472.4 L1916.5 474.8Z'/><path d='M1905.4 478.7 L1907.2 477.8 L1907.7 478.3 L1906.2 479.7 L1905.4 478.7Z'/><path d='M1877.8 488.0 L1879.6 490.1 L1879.0 491.5 L1877.9 491.7 L1877.7 489.6 L1877.8 488.0Z'/><path d='M1892.6 492.1 L1894.7 492.5 L1897.4 495.4 L1900.8 498.5 L1902.9 500.6 L1902.8 503.1 L1901.4 503.2 L1899.3 501.3 L1897.9 499.4 L1895.8 495.9 L1893.7 494.1 L1892.6 492.1Z'/><path d='M1902.1 504.1 L1902.9 503.2 L1905.1 503.6 L1907.7 503.8 L1909.3 504.1 L1911.0 504.9 L1911.0 505.8 L1906.7 505.4 L1903.4 504.6 L1902.1 504.1Z'/><path d='M1905.8 496.1 L1906.3 498.5 L1907.0 500.3 L1908.4 500.5 L1911.0 501.0 L1912.5 501.3 L1913.0 499.7 L1913.9 497.5 L1914.3 496.5 L1915.3 496.1 L1914.1 493.7 L1915.0 492.7 L1913.6 490.9 L1913.0 490.9 L1912.0 492.5 L1910.6 493.2 L1909.1 494.7 L1907.9 495.1 L1906.3 495.6 L1905.8 496.1Z'/><path d='M1915.4 498.0 L1915.9 500.9 L1916.7 502.9 L1917.3 501.3 L1919.0 502.1 L1917.6 499.4 L1919.6 498.5 L1917.3 498.3 L1916.8 497.0 L1920.9 496.3 L1920.7 497.1 L1916.3 496.8 L1915.4 498.0Z'/><path d='M1926.9 498.7 L1929.8 498.4 L1931.7 499.4 L1933.6 499.1 L1936.5 500.0 L1938.9 500.9 L1941.1 502.3 L1942.8 503.5 L1943.1 505.0 L1944.0 506.2 L1945.9 507.5 L1944.9 507.6 L1942.3 507.3 L1941.2 505.2 L1939.4 504.8 L1938.7 506.2 L1936.5 506.3 L1934.6 505.3 L1933.4 502.7 L1930.9 501.7 L1928.8 501.4 L1927.9 500.2 L1929.3 499.6 L1927.8 499.0 L1926.9 498.7Z'/><path d='M1916.9 479.4 L1918.4 479.4 L1918.7 480.9 L1917.9 482.1 L1920.2 483.9 L1920.0 484.9 L1918.4 484.1 L1916.9 483.6 L1916.3 481.9 L1916.9 479.4Z'/><path d='M1918.3 490.8 L1919.7 490.0 L1921.6 488.0 L1922.7 490.5 L1921.6 492.1 L1920.2 491.2 L1918.3 490.8Z'/><path d='M1909.9 519.4 L1910.1 522.9 L1910.8 523.9 L1911.5 527.2 L1911.5 531.7 L1912.0 532.9 L1914.4 533.5 L1916.3 532.3 L1919.7 532.2 L1922.1 530.3 L1925.0 529.7 L1927.1 529.4 L1929.3 530.2 L1930.8 533.0 L1931.7 532.5 L1933.4 530.9 L1933.2 534.2 L1935.1 534.3 L1935.6 536.4 L1937.2 537.4 L1939.4 537.4 L1941.6 538.3 L1943.2 536.8 L1945.2 536.4 L1945.6 534.0 L1946.6 531.7 L1948.0 528.9 L1948.6 526.3 L1948.2 522.9 L1946.9 521.8 L1945.9 519.7 L1944.7 518.7 L1944.0 517.4 L1942.3 516.3 L1941.5 515.3 L1940.8 513.1 L1940.6 512.1 L1939.9 511.3 L1939.0 510.9 L1938.9 509.1 L1938.0 507.8 L1937.2 509.6 L1937.0 511.6 L1936.8 513.6 L1936.1 514.7 L1934.9 514.4 L1933.4 513.4 L1931.5 512.1 L1932.5 510.6 L1932.5 509.3 L1931.2 509.1 L1929.8 509.0 L1928.3 508.5 L1927.2 509.3 L1926.1 510.3 L1925.6 512.0 L1924.0 512.0 L1923.1 510.9 L1921.9 511.6 L1920.6 513.4 L1919.7 514.4 L1918.4 515.1 L1917.5 516.6 L1915.4 517.2 L1913.2 517.7 L1911.3 518.7 L1909.9 519.4Z'/><path d='M1940.1 540.4 L1941.8 540.9 L1943.5 540.6 L1943.4 542.3 L1942.6 543.8 L1941.1 543.9 L1940.2 541.9 L1940.1 540.4Z'/><path d='M1967.0 532.9 L1968.5 533.8 L1970.0 535.8 L1972.6 536.7 L1972.0 538.5 L1970.9 539.5 L1969.4 541.5 L1968.8 541.2 L1969.2 539.3 L1968.0 538.6 L1968.8 537.3 L1968.7 535.3 L1967.0 532.9Z'/><path d='M1967.0 540.1 L1968.5 541.2 L1968.0 542.4 L1967.1 544.2 L1965.5 545.4 L1965.0 547.1 L1963.7 548.2 L1961.0 547.5 L1961.3 546.4 L1962.8 544.7 L1965.2 543.0 L1966.4 540.8 L1967.0 540.1Z'/><path d='M1848.4 509.1 L1849.4 512.4 L1848.9 514.1 L1847.8 517.1 L1846.3 522.2 L1844.4 522.9 L1843.3 521.3 L1842.6 519.0 L1843.7 516.6 L1843.3 514.4 L1843.8 513.3 L1845.5 512.8 L1847.0 511.1 L1848.4 509.1Z'/><path d='M1744.0 445.3 L1747.2 443.3 L1747.7 439.6 L1749.8 443.3 L1750.3 445.5 L1749.6 446.6 L1747.2 445.5 L1744.0 445.3Z'/><path d='M1719.3 475.9 L1722.2 475.1 L1724.6 474.9 L1727.0 476.3 L1729.7 477.7 L1726.5 478.0 L1724.6 476.3 L1721.2 476.1 L1719.3 475.9Z'/><path d='M1729.4 478.1 L1732.3 478.0 L1735.3 479.3 L1732.8 479.9 L1729.5 479.6 L1729.4 478.1Z'/><path d='M1931.7 389.4 L1936.5 390.8 L1941.3 385.8 L1937.5 382.0 L1932.7 383.6 L1931.7 389.4Z'/><path d='M1972.6 399.1 L1974.8 398.2 L1975.9 397.0 L1973.0 397.3 L1972.6 399.1Z'/></clipPath><g clip-path='url(#land1628)'><g fill='#9fe0c3'><path d='M1728.9 497.5 L1733.7 495.6 L1741.4 493.7 L1748.1 494.6 L1752.9 497.5 L1751.0 502.3 L1747.2 506.2 L1740.5 509.1 L1733.7 509.1 L1729.9 505.2 L1728.9 497.5Z'/><path d='M1810.6 494.6 L1818.3 493.2 L1827.0 493.7 L1829.8 497.5 L1827.9 502.3 L1820.2 503.3 L1813.5 501.3 L1810.6 494.6Z'/><path d='M1827.9 429.6 L1835.6 431.4 L1844.2 430.5 L1852.9 430.5 L1860.6 429.6 L1860.6 418.9 L1856.7 413.4 L1847.1 412.2 L1837.5 414.5 L1829.8 418.9 L1827.9 429.6Z'/><path d='M1708.7 446.2 L1718.3 446.2 L1724.1 449.0 L1720.3 452.9 L1710.7 451.6 L1708.7 446.2Z'/><path d='M1897.1 477.9 L1902.9 475.8 L1905.8 479.9 L1901.9 486.9 L1897.1 483.9 L1897.1 477.9Z'/><path d='M1873.1 418.9 L1882.7 421.0 L1892.3 423.0 L1897.1 430.5 L1887.5 433.9 L1877.9 432.2 L1870.2 426.9 L1873.1 418.9Z'/><path d='M1685.7 428.7 L1700.1 428.7 L1706.8 435.6 L1697.2 438.8 L1687.6 435.6 L1685.7 428.7Z'/></g><g fill='#f0ebdf'><path d='M1783.7 477.9 L1785.6 473.7 L1788.5 470.0 L1791.4 467.3 L1793.3 463.9 L1795.2 460.4 L1799.1 460.4 L1804.8 458.6 L1810.6 458.0 L1812.5 461.5 L1820.2 463.9 L1826.0 463.9 L1829.8 462.7 L1832.7 458.0 L1835.6 455.5 L1841.4 454.2 L1845.2 456.7 L1849.1 457.4 L1853.9 454.2 L1858.7 451.6 L1862.5 454.2 L1866.4 458.0 L1869.2 462.7 L1867.3 467.3 L1865.4 470.5 L1860.6 471.6 L1855.8 471.8 L1853.9 474.3 L1851.0 478.9 L1846.2 482.9 L1842.3 484.9 L1840.4 485.9 L1836.6 482.9 L1833.7 483.9 L1829.8 485.4 L1824.1 484.9 L1816.4 484.4 L1808.7 483.9 L1801.0 483.4 L1793.3 482.9 L1786.6 482.4 L1783.7 477.9Z'/><path d='M1843.3 447.6 L1847.1 441.8 L1853.9 438.8 L1860.6 438.0 L1868.3 438.8 L1876.0 440.3 L1882.7 443.3 L1887.5 442.6 L1893.3 444.1 L1901.0 445.5 L1908.6 446.9 L1914.4 447.6 L1917.3 450.3 L1913.5 453.6 L1907.7 454.9 L1902.9 458.0 L1898.1 459.8 L1894.2 461.5 L1889.4 463.3 L1883.7 463.9 L1877.9 462.1 L1873.1 458.6 L1868.3 457.4 L1862.5 455.5 L1856.7 454.2 L1851.9 453.6 L1849.1 451.6 L1843.3 447.6Z'/><path d='M1683.7 450.3 L1688.5 446.2 L1694.3 446.9 L1701.0 451.6 L1703.9 459.2 L1704.9 466.1 L1703.9 472.7 L1701.0 476.8 L1699.1 474.8 L1696.2 471.6 L1692.4 467.3 L1689.5 464.4 L1686.6 461.5 L1684.7 456.7 L1683.7 450.3Z'/><path d='M1732.8 534.6 L1737.6 535.2 L1739.5 539.5 L1738.5 546.0 L1736.1 548.8 L1735.2 554.7 L1733.7 557.0 L1731.8 553.2 L1732.3 544.7 L1732.8 534.6Z'/><path d='M1909.6 519.2 L1911.0 526.6 L1912.0 531.1 L1918.3 532.3 L1925.0 530.0 L1929.8 530.0 L1933.6 532.3 L1936.5 533.5 L1940.4 532.3 L1942.3 526.6 L1941.3 521.3 L1938.4 517.1 L1935.6 514.1 L1931.7 513.6 L1926.9 512.1 L1923.1 512.6 L1918.3 515.6 L1912.5 517.6 L1909.6 519.2Z'/><path d='M1812.1 513.1 L1817.3 514.6 L1823.1 515.1 L1827.0 518.2 L1829.8 522.3 L1828.9 527.7 L1826.0 531.1 L1818.8 532.3 L1816.4 525.6 L1814.0 518.7 L1812.1 513.1Z'/><path d='M1723.6 502.3 L1728.9 509.1 L1733.7 515.6 L1737.6 519.2 L1736.6 524.5 L1733.2 527.7 L1732.8 521.3 L1733.2 515.1 L1728.0 511.1 L1724.6 504.7 L1723.6 502.3Z'/><path d='M1835.6 483.9 L1839.4 485.9 L1843.3 486.9 L1850.0 486.1 L1848.1 491.7 L1843.3 496.5 L1839.4 498.5 L1836.6 494.6 L1835.6 489.8 L1835.6 483.9Z'/></g><g fill='#c9c9c9' opacity='0.9'><path d='M1680.9 403.3 L1690.5 406.3 L1706.8 407.8 L1714.5 405.2 L1722.2 404.7 L1722.2 411.0 L1718.3 413.4 L1715.5 417.9 L1710.7 424.0 L1704.9 425.0 L1695.3 421.0 L1687.6 414.5 L1680.9 408.6 L1680.9 403.3Z'/><path d='M1835.6 404.7 L1840.4 408.1 L1838.5 410.3 L1832.7 404.1 L1835.6 404.7Z'/><path d='M1901.0 374.8 L1909.6 383.6 L1906.7 391.2 L1897.1 392.8 L1893.3 384.0 L1901.0 374.8Z'/><path d='M1924.0 394.4 L1936.5 393.5 L1948.0 399.3 L1945.2 404.7 L1930.8 401.9 L1924.0 394.4Z'/></g></g><g fill='#54cce2'><path d='M1848.3 458.4 L1849.5 459.2 L1852.7 459.3 L1852.8 457.0 L1852.0 456.2 L1851.9 454.4 L1853.6 454.2 L1851.9 452.4 L1851.6 452.2 L1850.3 451.4 L1849.3 449.9 L1850.5 449.6 L1851.9 448.6 L1852.1 446.6 L1850.2 446.2 L1848.2 447.0 L1847.6 447.9 L1846.7 449.2 L1846.7 450.8 L1847.7 453.2 L1848.7 454.7 L1848.5 456.7 L1848.3 458.4Z'/></g><g fill='#cbcbcb'><path d='M1741.6 410.5 L1740.9 413.4 L1738.5 415.7 L1738.0 418.3 L1736.1 418.9 L1733.7 419.4 L1732.0 417.9 L1730.4 415.9 L1726.5 415.7 L1726.3 413.2 L1729.9 409.3 L1729.4 406.5 L1727.0 403.3 L1724.1 400.2 L1717.4 401.4 L1715.9 399.1 L1718.3 396.0 L1721.2 391.2 L1725.1 391.2 L1727.5 393.5 L1730.8 396.6 L1733.7 400.5 L1736.1 403.3 L1737.1 407.3 L1741.4 409.8 L1741.6 410.5Z'/><path d='M1687.1 397.6 L1689.5 401.9 L1695.3 406.0 L1703.0 405.2 L1703.4 401.9 L1702.0 399.1 L1700.1 393.5 L1697.7 391.8 L1692.4 392.8 L1688.5 395.4 L1687.1 397.6Z'/><path d='M1680.1 396.3 L1682.8 399.1 L1685.7 397.6 L1688.1 393.5 L1686.6 389.4 L1681.3 388.4 L1680.1 396.3Z'/><path d='M1723.6 387.7 L1718.3 387.7 L1712.6 386.6 L1713.5 382.0 L1717.4 380.0 L1723.2 380.8 L1723.6 387.7Z'/><path d='M1714.0 394.4 L1709.7 396.0 L1708.3 391.2 L1712.6 389.1 L1714.0 394.4Z'/><path d='M1706.3 397.6 L1703.0 394.4 L1703.9 391.2 L1707.3 391.2 L1708.3 395.1 L1706.3 397.6Z'/><path d='M1700.1 385.8 L1695.3 387.7 L1689.0 386.6 L1688.5 381.2 L1695.3 379.2 L1699.6 382.0 L1700.1 385.8Z'/><path d='M1706.8 385.8 L1701.0 384.0 L1702.5 380.8 L1707.3 380.0 L1706.8 385.8Z'/><path d='M1721.2 418.5 L1717.9 417.2 L1718.8 413.4 L1722.7 415.7 L1721.2 418.5Z'/></g><g fill='#ececec'><path d='M1709.0 359.3 L1713.5 353.7 L1725.0 345.2 L1734.6 342.8 L1741.6 348.9 L1739.1 354.4 L1732.7 362.2 L1726.3 368.1 L1725.0 380.0 L1717.4 378.7 L1718.6 371.1 L1712.2 368.1 L1709.0 359.3Z'/><path d='M1811.6 369.6 L1814.0 375.7 L1816.9 380.0 L1818.8 376.6 L1822.1 371.1 L1827.0 364.4 L1822.1 360.5 L1817.3 362.8 L1812.1 365.0 L1811.6 369.6Z'/><path d='M1851.0 398.5 L1851.9 400.5 L1854.8 399.6 L1856.3 395.1 L1857.2 390.5 L1860.6 385.1 L1866.8 379.6 L1864.4 377.5 L1858.7 380.0 L1854.8 386.6 L1854.3 392.8 L1851.0 398.5Z'/><path d='M1892.3 368.6 L1895.2 373.4 L1900.5 368.6 L1897.1 359.9 L1891.8 360.5 L1892.3 368.6Z'/><path d='M1846.2 360.5 L1851.0 363.3 L1860.6 359.9 L1856.7 353.7 L1847.1 357.5 L1846.2 360.5Z'/></g><path d='M1732.7 372.0 L1737.8 362.2 L1744.2 348.9 L1753.1 346.7 L1757.0 342.8 L1763.4 338.7 L1773.6 339.5 L1779.4 345.2 L1777.5 351.0 L1789.6 353.0 L1783.8 359.3 L1781.3 367.1 L1782.0 378.7 L1780.6 388.7 L1778.7 399.1 L1773.6 404.1 L1765.9 413.2 L1758.2 423.4 L1753.1 417.0 L1751.2 408.1 L1749.3 397.9 L1746.1 385.1 L1741.0 381.2 L1734.6 379.2 L1732.7 372.0Z' fill='#ffffff'/><path d='M1628.0 670.5 L1628.0 623.4 L1639.5 624.4 L1649.1 623.0 L1654.9 619.3 L1660.7 613.0 L1668.4 609.2 L1676.1 606.6 L1685.7 604.2 L1695.3 606.3 L1703.0 599.9 L1709.7 601.5 L1716.4 602.8 L1724.1 603.8 L1728.9 600.6 L1733.7 594.5 L1736.1 585.2 L1740.0 580.5 L1746.2 576.7 L1744.3 580.5 L1741.9 586.4 L1742.4 594.5 L1741.4 603.8 L1741.9 611.0 L1748.1 617.1 L1755.8 621.6 L1764.5 621.6 L1769.3 617.1 L1774.1 613.0 L1778.9 605.6 L1783.7 602.2 L1789.5 599.0 L1796.2 596.8 L1802.9 594.5 L1810.6 593.1 L1817.3 593.9 L1825.0 594.5 L1831.8 592.5 L1839.4 590.3 L1847.1 585.9 L1853.9 582.8 L1860.6 585.2 L1867.3 587.2 L1870.2 592.5 L1873.1 591.7 L1877.9 587.7 L1885.6 584.5 L1892.3 584.0 L1899.0 582.3 L1906.7 583.5 L1912.5 585.2 L1920.2 584.0 L1930.8 583.2 L1937.5 585.2 L1945.2 588.5 L1954.8 591.7 L1961.5 595.4 L1965.3 600.6 L1963.4 607.3 L1959.6 613.0 L1958.6 620.2 L1961.5 623.0 L1969.2 623.9 L1974.0 623.4 L1974.0 670.5Z' fill='#faf9f7'/><path d='M992 497.5 L1919 497.5' stroke='#785c5c' stroke-width='1.4' stroke-dasharray='7 4' fill='none'/><path d='M936.0 324.5 L936.0 384.5 L947.0 410.0 L928.0 434.0 L936.0 442.0 L936.0 497.5 L954.5 497.5 L954.5 492.0 L959.0 492.0 L965.5 507.7 L947.0 507.7 L945.0 510.0 L943.7 544.0 L936.0 553.0 L936.0 670.5' stroke='#785c5c' stroke-width='1.4' stroke-dasharray='7 4' fill='none'/><path d='M1282.0 324.5 L1282.0 384.5 L1293.0 410.0 L1274.0 434.0 L1282.0 442.0 L1282.0 497.5 L1300.5 497.5 L1300.5 492.0 L1305.0 492.0 L1311.5 507.7 L1293.0 507.7 L1291.0 510.0 L1289.7 544.0 L1282.0 553.0 L1282.0 670.5' stroke='#785c5c' stroke-width='1.4' stroke-dasharray='7 4' fill='none'/><path d='M1628.0 324.5 L1628.0 384.5 L1639.0 410.0 L1620.0 434.0 L1628.0 442.0 L1628.0 497.5 L1646.5 497.5 L1646.5 492.0 L1651.0 492.0 L1657.5 507.7 L1639.0 507.7 L1637.0 510.0 L1635.7 544.0 L1628.0 553.0 L1628.0 670.5' stroke='#785c5c' stroke-width='1.4' stroke-dasharray='7 4' fill='none'/><path transform='translate(1456.4 452.3)' d='M0 0 C-1 -8 -3 -14 -7.5 -20 C-10.5 -23.5 -11.5 -26 -11.5 -30 A11.5 11.5 0 1 1 11.5 -30 C11.5 -26 10.5 -23.5 7.5 -20 C3 -14 1 -8 0 0Z' fill='#f96f5d' stroke='#1c1c1c' stroke-width='2' stroke-linejoin='round'/><path transform='translate(1474.2 454.2)' d='M0 0 C-1 -8 -3 -14 -7.5 -20 C-10.5 -23.5 -11.5 -26 -11.5 -30 A11.5 11.5 0 1 1 11.5 -30 C11.5 -26 10.5 -23.5 7.5 -20 C3 -14 1 -8 0 0Z' fill='#f96f5d' stroke='#1c1c1c' stroke-width='2' stroke-linejoin='round'/><path transform='translate(1498.2 455.5)' d='M0 0 C-1 -8 -3 -14 -7.5 -20 C-10.5 -23.5 -11.5 -26 -11.5 -30 A11.5 11.5 0 1 1 11.5 -30 C11.5 -26 10.5 -23.5 7.5 -20 C3 -14 1 -8 0 0Z' fill='#f96f5d' stroke='#1c1c1c' stroke-width='2' stroke-linejoin='round'/><path transform='translate(1468.8 460.5)' d='M0 0 C-1 -8 -3 -14 -7.5 -20 C-10.5 -23.5 -11.5 -26 -11.5 -30 A11.5 11.5 0 1 1 11.5 -30 C11.5 -26 10.5 -23.5 7.5 -20 C3 -14 1 -8 0 0Z' fill='#f96f5d' stroke='#1c1c1c' stroke-width='2' stroke-linejoin='round'/><path transform='translate(1518.4 462.8)' d='M0 0 C-1 -8 -3 -14 -7.5 -20 C-10.5 -23.5 -11.5 -26 -11.5 -30 A11.5 11.5 0 1 1 11.5 -30 C11.5 -26 10.5 -23.5 7.5 -20 C3 -14 1 -8 0 0Z' fill='#f96f5d' stroke='#1c1c1c' stroke-width='2' stroke-linejoin='round'/><path transform='translate(1456.5 469.4)' d='M0 0 C-1 -8 -3 -14 -7.5 -20 C-10.5 -23.5 -11.5 -26 -11.5 -30 A11.5 11.5 0 1 1 11.5 -30 C11.5 -26 10.5 -23.5 7.5 -20 C3 -14 1 -8 0 0Z' fill='#f96f5d' stroke='#1c1c1c' stroke-width='2' stroke-linejoin='round'/><path transform='translate(1486.4 473.1)' d='M0 0 C-1 -8 -3 -14 -7.5 -20 C-10.5 -23.5 -11.5 -26 -11.5 -30 A11.5 11.5 0 1 1 11.5 -30 C11.5 -26 10.5 -23.5 7.5 -20 C3 -14 1 -8 0 0Z' fill='#f96f5d' stroke='#1c1c1c' stroke-width='2' stroke-linejoin='round'/><path transform='translate(1395.6 480.8)' d='M0 0 C-1 -8 -3 -14 -7.5 -20 C-10.5 -23.5 -11.5 -26 -11.5 -30 A11.5 11.5 0 1 1 11.5 -30 C11.5 -26 10.5 -23.5 7.5 -20 C3 -14 1 -8 0 0Z' fill='#f96f5d' stroke='#1c1c1c' stroke-width='2' stroke-linejoin='round'/><path transform='translate(1471.8 509.4)' d='M0 0 C-1 -8 -3 -14 -7.5 -20 C-10.5 -23.5 -11.5 -26 -11.5 -30 A11.5 11.5 0 1 1 11.5 -30 C11.5 -26 10.5 -23.5 7.5 -20 C3 -14 1 -8 0 0Z' fill='#6991fd' stroke='#1c1c1c' stroke-width='2' stroke-linejoin='round'/><circle cx='1471.8' cy='479.4' r='2.6' fill='#000'/><path transform='translate(1392.0 531.2)' d='M0 0 C-1 -8 -3 -14 -7.5 -20 C-10.5 -23.5 -11.5 -26 -11.5 -30 A11.5 11.5 0 1 1 11.5 -30 C11.5 -26 10.5 -23.5 7.5 -20 C3 -14 1 -8 0 0Z' fill='#f96f5d' stroke='#1c1c1c' stroke-width='2' stroke-linejoin='round'/></svg>
<div class='b' style='left:1005px;top:225px;width:260px;height:54px;background:#fff;border-radius:2px;box-shadow:0 1px 4px rgba(0,0,0,0.3)'></div>
<div class='b' style='left:1114px;top:225px;width:1px;height:54px;background:#ebebeb'></div>
<div class='b' style='left:1851px;top:225px;width:54px;height:54px;background:#fff;border-radius:2px;box-shadow:0 1px 4px rgba(0,0,0,0.3)'></div>
<svg class='b' style='left:1865.5px;top:240.0px;' width='25.5' height='25.5' viewBox='0 0 25.5 25.5'><path d='M0 7 L0 0 L7 0 M15.5 0 L22.5 0 L22.5 7 M22.5 15.5 L22.5 22.5 L15.5 22.5 M7 22.5 L0 22.5 L0 15.5' transform='translate(1.5 1.5)' stroke='#666' stroke-width='3' fill='none'/></svg>
<div class='b' style='left:1851px;top:695px;width:54px;height:54px;background:#fff;border-radius:50%;box-shadow:0 1px 4px rgba(0,0,0,0.3)'></div>
<svg class='b' style='left:1860px;top:704px;' width='36' height='36' viewBox='0 0 36 36'><path d='M13.5 9.5 L18 5 L22.5 9.5 M13.5 26.5 L18 31 L22.5 26.5 M9.5 13.5 L5 18 L9.5 22.5 M26.5 13.5 L31 18 L26.5 22.5' fill='none' stroke='#666' stroke-width='3'/></svg>
<svg class='b' style='left:1003px;top:746px;' width='84' height='34' viewBox='0 0 84 34'><g font-family='Liberation Sans' font-size='25' font-weight='400'><text x='2.5' y='24.5' fill='#fff' stroke='#fff' stroke-width='3.5' stroke-linejoin='round' letter-spacing='-1.3'>G<tspan>o</tspan><tspan>o</tspan><tspan>g</tspan><tspan>l</tspan><tspan>e</tspan></text><text x='2.5' y='24.5' fill='#4285f4' letter-spacing='-1.3'>G<tspan fill='#ea4335'>o</tspan><tspan fill='#fbbc05'>o</tspan><tspan fill='#4285f4'>g</tspan><tspan fill='#34a853'>l</tspan><tspan fill='#ea4335'>e</tspan></text></g><g font-family='Liberation Sans' font-size='25' font-weight='400' stroke-width='0.9'><text x='2.5' y='24.5' fill='none' letter-spacing='-1.3'><tspan stroke='#4285f4'>G</tspan><tspan stroke='#ea4335'>o</tspan><tspan stroke='#fbbc05'>o</tspan><tspan stroke='#4285f4'>g</tspan><tspan stroke='#34a853'>l</tspan><tspan stroke='#ea4335'>e</tspan></text></g></svg>
<div class='b' style='left:1616px;top:763px;width:131px;height:19px;background:rgba(245,245,245,0.85)'></div>
<div class='b' style='left:1749px;top:763px;width:116px;height:19px;background:rgba(245,245,245,0.85)'></div>
<div class='b' style='left:1866px;top:763px;width:53px;height:19px;background:rgba(245,245,245,0.85)'></div>
<div class='t' style='left:82.8px;top:6.8px;font-family:"Liberation Sans",sans-serif;font-size:16px;font-weight:400;color:#8a8a8a;letter-spacing:-0.27px;'>Data Graphs</div>
<div class='t' style='left:189.5px;top:6.8px;font-family:"Liberation Sans",sans-serif;font-size:16px;font-weight:400;color:#8a8a8a;letter-spacing:-0.68px;'>GeoSPARQL Cookbook</div>
<div class='t' style='left:55.8px;top:32.5px;font-family:"Liberation Serif",serif;font-size:20.5px;font-weight:700;color:#000;letter-spacing:-0.58px;'>GeoSPARQL Cookbook</div>
<div class='t' style='left:1266.5px;top:21.2px;font-family:"Liberation Sans",sans-serif;font-size:19px;font-weight:400;color:#1a1a1a;letter-spacing:0.41px;'>Layouts</div>
<div class='t' style='left:1403.7px;top:20.6px;font-family:"Liberation Sans",sans-serif;font-size:19px;font-weight:400;color:#1a1a1a;letter-spacing:0.12px;'>Panels</div>
<div class='t' style='left:1739.1px;top:21.7px;font-family:"Liberation Sans",sans-serif;font-size:16px;font-weight:700;color:#fff;letter-spacing:0.35px;text-shadow:1px 1.5px 0 rgba(40,40,40,0.85);'>Under development</div>
<div class='t' style='left:55.5px;top:77.7px;font-family:"Liberation Sans",sans-serif;font-size:19px;font-weight:400;color:#0b5394;letter-spacing:0.53px;'>Data Graph</div>
<div class='t' style='left:177.5px;top:77.7px;font-family:"Liberation Sans",sans-serif;font-size:19px;font-weight:400;color:#111;letter-spacing:0.12px;'>Settings</div>
<div class='t' style='left:267.0px;top:77.7px;font-family:"Liberation Sans",sans-serif;font-size:19px;font-weight:400;color:#111;letter-spacing:-0.28px;'>Users</div>
<div class='t' style='left:335.2px;top:77.7px;font-family:"Liberation Sans",sans-serif;font-size:19px;font-weight:400;color:#111;letter-spacing:0.83px;'>Import</div>
<div class='t' style='left:413.2px;top:77.7px;font-family:"Liberation Sans",sans-serif;font-size:19px;font-weight:400;color:#111;letter-spacing:0.27px;'>Transform</div>
<div class='t' style='left:520.2px;top:77.7px;font-family:"Liberation Sans",sans-serif;font-size:19px;font-weight:400;color:#111;letter-spacing:0.36px;'>Export</div>
<div class='t' style='left:596.3px;top:77.7px;font-family:"Liberation Sans",sans-serif;font-size:19px;font-weight:400;color:#111;letter-spacing:0.28px;'>Reports</div>
<div class='t' style='left:684.0px;top:77.7px;font-family:"Liberation Sans",sans-serif;font-size:19px;font-weight:400;color:#111;letter-spacing:0.40px;'>Workflows</div>
<div class='t' style='left:794.1px;top:77.7px;font-family:"Liberation Sans",sans-serif;font-size:19px;font-weight:400;color:#111;letter-spacing:0.11px;'>Tasks</div>
<div class='t' style='left:862.1px;top:77.7px;font-family:"Liberation Sans",sans-serif;font-size:19px;font-weight:400;color:#111;letter-spacing:0.46px;'>Comments</div>
<div class='t' style='left:976.5px;top:77.7px;font-family:"Liberation Sans",sans-serif;font-size:19px;font-weight:400;color:#111;letter-spacing:1.41px;'>Manage</div>
<div class='t' style='left:14.7px;top:124.2px;font-family:"Liberation Sans",sans-serif;font-size:18.5px;font-weight:400;color:#fff;letter-spacing:0.55px;'>Spatial thing Search</div>
<div class='t' style='left:239.7px;top:124.3px;font-family:"Liberation Sans",sans-serif;font-size:18.5px;font-weight:400;color:#777;letter-spacing:0.66px;'>Map Explorer</div>
<div class='t' style='left:42.4px;top:172.0px;font-family:"Liberation Sans",sans-serif;font-size:18.5px;font-weight:400;color:#111;letter-spacing:0.49px;'>New</div>
<div class='t' style='left:192.0px;top:171.9px;font-family:"Liberation Sans",sans-serif;font-size:18.7px;font-weight:400;color:#888;letter-spacing:0.64px;'>Spatial thing</div>
<div class='t' style='left:452.3px;top:171.7px;font-family:"Liberation Sans",sans-serif;font-size:18.5px;font-weight:400;color:#6c757d;letter-spacing:0.32px;'>Search</div>
<div class='t' style='left:107.5px;top:227.1px;font-family:"Liberation Sans",sans-serif;font-size:18.7px;font-weight:700;color:#222;letter-spacing:0.41px;'>Spatial thing</div>
<div class='t' style='left:102.8px;top:274.0px;font-family:"Liberation Sans",sans-serif;font-size:19.2px;font-weight:400;color:#1f4f86;letter-spacing:0.51px;'>Afghanistan</div>
<div class='t' style='left:102.8px;top:315.1px;font-family:"Liberation Sans",sans-serif;font-size:19.2px;font-weight:400;color:#1f4f86;letter-spacing:0.29px;'>Africa</div>
<div class='t' style='left:102.8px;top:356.3px;font-family:"Liberation Sans",sans-serif;font-size:19.2px;font-weight:400;color:#1f4f86;letter-spacing:0.68px;'>Albania</div>
<div class='t' style='left:102.8px;top:397.4px;font-family:"Liberation Sans",sans-serif;font-size:19.2px;font-weight:400;color:#1f4f86;letter-spacing:0.46px;'>Algeria</div>
<div class='t' style='left:102.8px;top:438.5px;font-family:"Liberation Sans",sans-serif;font-size:19.2px;font-weight:400;color:#1f4f86;letter-spacing:0.64px;'>Andorra</div>
<div class='t' style='left:102.8px;top:479.6px;font-family:"Liberation Sans",sans-serif;font-size:19.2px;font-weight:400;color:#1f4f86;letter-spacing:0.69px;'>Angola</div>
<div class='t' style='left:102.8px;top:520.8px;font-family:"Liberation Sans",sans-serif;font-size:19.2px;font-weight:400;color:#1f4f86;letter-spacing:0.71px;'>Antigua and Barbuda</div>
<div class='t' style='left:102.8px;top:561.9px;font-family:"Liberation Sans",sans-serif;font-size:19.2px;font-weight:400;color:#1f4f86;letter-spacing:0.47px;'>Argentina</div>
<div class='t' style='left:102.8px;top:603.0px;font-family:"Liberation Sans",sans-serif;font-size:19.2px;font-weight:400;color:#1f4f86;letter-spacing:0.42px;'>Armenia</div>
<div class='t' style='left:102.8px;top:644.2px;font-family:"Liberation Sans",sans-serif;font-size:19.2px;font-weight:400;color:#1f4f86;letter-spacing:0.44px;'>Attard</div>
<div class='t' style='left:102.8px;top:685.3px;font-family:"Liberation Sans",sans-serif;font-size:19.2px;font-weight:400;color:#1f4f86;letter-spacing:0.27px;'>Australia</div>
<div class='t' style='left:14.0px;top:743.5px;font-family:"Liberation Sans",sans-serif;font-size:18px;font-weight:400;color:#111;letter-spacing:0.42px;'>273 rows</div>
<div class='t' style='left:390.5px;top:743.5px;font-family:"Liberation Sans",sans-serif;font-size:18px;font-weight:400;color:#111;letter-spacing:1.22px;'>Page</div>
<div class='t' style='left:441.3px;top:743.5px;font-family:"Liberation Sans",sans-serif;font-size:18px;font-weight:700;color:#111;letter-spacing:-0.12px;'>1 of 3</div>
<div class='t' style='left:502.9px;top:743.5px;font-family:"Liberation Sans",sans-serif;font-size:18px;font-weight:400;color:#111;letter-spacing:1.05px;'>Go to page:</div>
<div class='t' style='left:635.0px;top:743.5px;font-family:"Liberation Sans",sans-serif;font-size:18px;font-weight:400;color:#333;letter-spacing:0.00px;'>1</div>
<div class='t' style='left:853.5px;top:744.9px;font-family:"Liberation Sans",sans-serif;font-size:16.5px;font-weight:400;color:#555;letter-spacing:0.06px;'>Show 100</div>
<div class='t' style='left:1005.9px;top:124.3px;font-family:"Liberation Sans",sans-serif;font-size:18.5px;font-weight:400;color:#777;letter-spacing:1.12px;'>Angola</div>
<div class='t' style='left:1118.7px;top:124.3px;font-family:"Liberation Sans",sans-serif;font-size:18.5px;font-weight:400;color:#777;letter-spacing:0.40px;'>Source Code</div>
<div class='t' style='left:1280.5px;top:124.3px;font-family:"Liberation Sans",sans-serif;font-size:18.5px;font-weight:400;color:#fff;letter-spacing:0.38px;'>Map Results</div>
<div class='t' style='left:1016.7px;top:173.6px;font-family:"Liberation Sans",sans-serif;font-size:17.5px;font-weight:400;color:#111;letter-spacing:1.09px;'>10 items on map</div>
<div class='t' style='left:1036.8px;top:240.2px;font-family:"Liberation Sans",sans-serif;font-size:23px;font-weight:700;color:#000;letter-spacing:0.20px;'>Map</div>
<div class='t' style='left:1146.5px;top:240.2px;font-family:"Liberation Sans",sans-serif;font-size:23px;font-weight:400;color:#565656;letter-spacing:0.53px;'>Satellite</div>
<div class='t' style='left:1621.9px;top:765.5px;font-family:"Liberation Sans",sans-serif;font-size:12.5px;font-weight:400;color:#222;letter-spacing:0.49px;'>Keyboard shortcuts</div>
<div class='t' style='left:1755.3px;top:765.5px;font-family:"Liberation Sans",sans-serif;font-size:12.5px;font-weight:400;color:#222;letter-spacing:0.58px;'>Map data ©2025</div>
<div class='t' style='left:1872.9px;top:765.5px;font-family:"Liberation Sans",sans-serif;font-size:12.5px;font-weight:400;color:#222;letter-spacing:0.52px;'>Terms</div>
</body></html>
